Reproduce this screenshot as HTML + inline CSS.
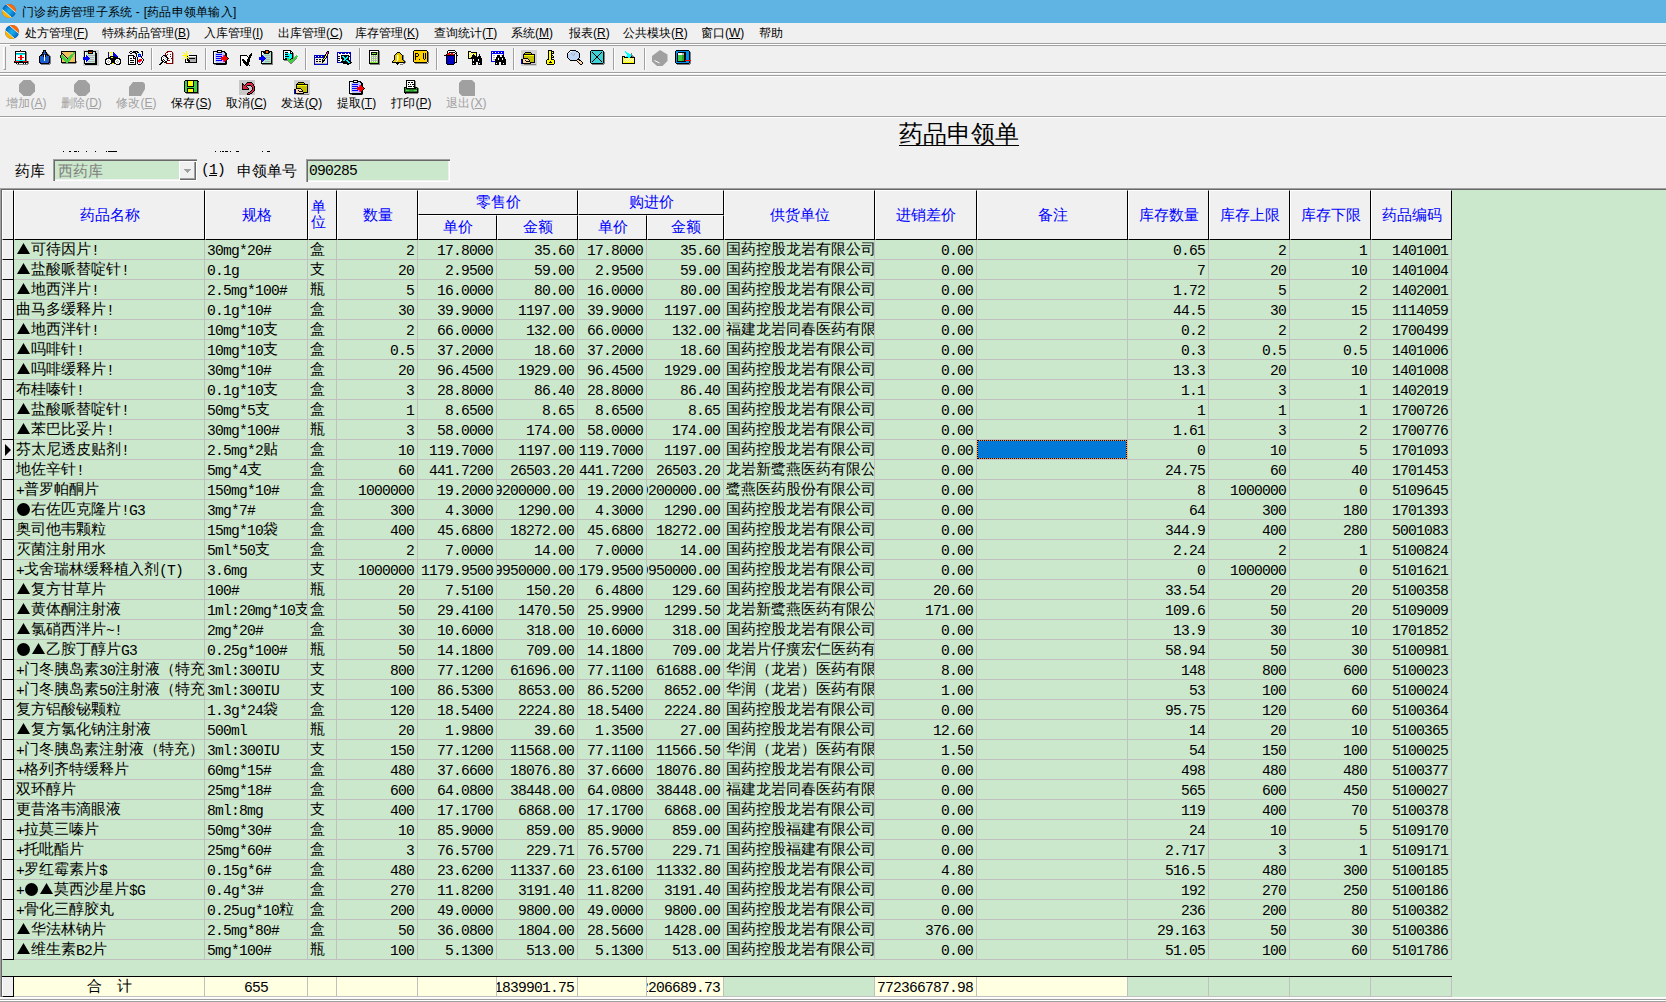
<!DOCTYPE html>
<html><head><meta charset="utf-8">
<style>
*{margin:0;padding:0;box-sizing:border-box}
html,body{width:1666px;height:1002px;overflow:hidden;background:#f0f0f0;font-family:"Liberation Sans",sans-serif;color:#000}
.abs{position:absolute}
#title{position:absolute;left:0;top:0;width:1666px;height:23px;background:#5fb4e4}
#title .t{position:absolute;left:22px;top:4px;font-size:12px;line-height:17px;white-space:nowrap;color:#000;letter-spacing:0.25px}
#menu{position:absolute;left:0;top:23px;width:1666px;height:20px;background:#f0f0f0}
.mi{position:absolute;top:3px;font-size:12px;line-height:15px;white-space:nowrap}
.hline{position:absolute;left:0;width:1666px;height:1px}
.sep{position:absolute;top:48px;width:2px;height:22px;border-left:1px solid #a0a0a0;border-right:1px solid #fff}
.btn{position:absolute;top:77px;width:55px;height:38px;text-align:center}
.btn svg,.tb1 svg{display:block}
.btn .l{position:absolute;left:0;top:20px;width:55px;text-align:center;font-size:12px;line-height:13px;white-space:nowrap}
.btn.d .l{color:#a0a0a0}
/* grid */
#grid{position:absolute;left:0;top:188px;width:1666px;height:809px;background:#cce8cc;overflow:hidden}
.c{position:absolute;height:19px;overflow:hidden;white-space:nowrap;display:flex;justify-content:flex-start;padding-left:2px;font-size:15px;line-height:17px}
.c.R{justify-content:flex-end;padding-left:0;padding-right:3px}
.c b{font-weight:normal;flex:none}
i{font-style:normal}
i.a{font-family:"Liberation Mono",monospace;font-size:14.67px;letter-spacing:-0.8px;position:relative;top:1px}
i.tri,i.dot{display:inline-block;width:15px;height:17px;position:relative;vertical-align:top}
i.tri::before{content:"";position:absolute;left:1px;top:3px;width:13px;height:11px;background:#000;clip-path:polygon(50% 0,100% 100%,0 100%)}
i.dot::before{content:"";position:absolute;left:1px;top:3px;width:13px;height:13px;border-radius:50%;background:#000}
.vl{position:absolute;width:1px;background:#c0c0c0}
.hl{position:absolute;left:14px;width:1438px;height:1px;background:#c0c0c0}
.ind{position:absolute;left:2px;width:12px;height:20px;background:#f0f0f0;border-left:1px solid #fff;border-right:1px solid #000;border-bottom:1px solid #000}
.hd{position:absolute;background:#f0f0f0;border-left:1px solid #fff;border-top:1px solid #fff;border-right:1px solid #000;border-bottom:1px solid #000;color:#0000ff;font-size:15px;display:flex;align-items:center;justify-content:center;white-space:nowrap}
</style></head><body>
<div id="title">
 <svg class="abs" style="left:1px;top:3px" width="16" height="16" viewBox="0 0 16 16" shape-rendering="auto"><defs><radialGradient id="lg1" cx=".5" cy=".5" r=".55"><stop offset="0" stop-color="#18b8f0"/><stop offset="1" stop-color="#0050b0"/></radialGradient><clipPath id="lc1"><circle cx="8" cy="8" r="7"/></clipPath></defs><g clip-path="url(#lc1)"><rect width="16" height="16" fill="url(#lg1)"/><path d="M-1.2 -4.3L21.5 15.4L21 -5Z" fill="#ff6a00"/><path d="M-1.2 -4.3L21.5 15.4" stroke="#e8f0f8" stroke-width="0.9"/><path d="M-5.5 0.6L17.2 20.3L-5 21Z" fill="#ffb000"/><path d="M-5.5 0.6L17.2 20.3" stroke="#e8f0f8" stroke-width="0.9"/></g></svg>
 <div class="t">门诊药房管理子系统 - [药品申领单输入]</div>
</div>
<div id="menu">
 <svg class="abs" style="left:4px;top:1px" width="16" height="16" viewBox="0 0 16 16" shape-rendering="auto"><defs><radialGradient id="lg2" cx=".5" cy=".5" r=".55"><stop offset="0" stop-color="#18b8f0"/><stop offset="1" stop-color="#0050b0"/></radialGradient><clipPath id="lc2"><circle cx="8" cy="8" r="7"/></clipPath></defs><g clip-path="url(#lc2)"><rect width="16" height="16" fill="url(#lg2)"/><path d="M-1.2 -4.3L21.5 15.4L21 -5Z" fill="#ff6a00"/><path d="M-1.2 -4.3L21.5 15.4" stroke="#e8f0f8" stroke-width="0.9"/><path d="M-5.5 0.6L17.2 20.3L-5 21Z" fill="#ffb000"/><path d="M-5.5 0.6L17.2 20.3" stroke="#e8f0f8" stroke-width="0.9"/></g></svg>
 <div class="mi" style="left:25px">处方管理(<u>F</u>)</div>
 <div class="mi" style="left:102px">特殊药品管理(<u>B</u>)</div>
 <div class="mi" style="left:204px">入库管理(<u>I</u>)</div>
 <div class="mi" style="left:278px">出库管理(<u>C</u>)</div>
 <div class="mi" style="left:355px">库存管理(<u>K</u>)</div>
 <div class="mi" style="left:434px">查询统计(<u>T</u>)</div>
 <div class="mi" style="left:511px">系统(<u>M</u>)</div>
 <div class="mi" style="left:569px">报表(<u>R</u>)</div>
 <div class="mi" style="left:623px">公共模块(<u>R</u>)</div>
 <div class="mi" style="left:701px">窗口(<u>W</u>)</div>
 <div class="mi" style="left:759px">帮助</div>
</div>
<div class="hline" style="top:43px;background:#a0a0a0"></div>
<div class="hline" style="top:44px;background:#fff"></div>
<!-- toolbar 1 -->
<div class="abs" style="left:10px;top:45px;width:1656px;height:1px;background:#a0a0a0"></div>
<div class="abs" style="left:3px;top:47px;width:3px;height:23px;border-left:1px solid #fff;border-right:1px solid #a0a0a0;border-bottom:1px solid #a0a0a0"></div>
<div class="tb1">
<div class="abs" style="left:14px;top:50px;width:17px;height:16px"><svg width="16" height="16" viewBox="0 0 16 16" shape-rendering="crispEdges"><rect x="6" y="0" width="1" height="1" fill="#000000"/><rect x="1" y="1" width="5" height="1" fill="#000000"/><rect x="6" y="1" width="1" height="1" fill="#ff0000"/><rect x="7" y="1" width="5" height="1" fill="#000000"/><rect x="1" y="2" width="1" height="1" fill="#000000"/><rect x="2" y="2" width="9" height="1" fill="#ffffff"/><rect x="11" y="2" width="1" height="1" fill="#000000"/><rect x="12" y="2" width="1" height="1" fill="#808080"/><rect x="1" y="3" width="1" height="1" fill="#000000"/><rect x="2" y="3" width="9" height="1" fill="#00a0a0"/><rect x="11" y="3" width="1" height="1" fill="#000000"/><rect x="12" y="3" width="1" height="1" fill="#808080"/><rect x="1" y="4" width="1" height="1" fill="#000000"/><rect x="2" y="4" width="9" height="1" fill="#00ffff"/><rect x="11" y="4" width="1" height="1" fill="#000000"/><rect x="12" y="4" width="1" height="1" fill="#808080"/><rect x="1" y="5" width="1" height="1" fill="#000000"/><rect x="2" y="5" width="4" height="1" fill="#ffffff"/><rect x="6" y="5" width="2" height="1" fill="#ff0000"/><rect x="8" y="5" width="3" height="1" fill="#ffffff"/><rect x="11" y="5" width="1" height="1" fill="#000000"/><rect x="12" y="5" width="1" height="1" fill="#808080"/><rect x="1" y="6" width="1" height="1" fill="#000000"/><rect x="2" y="6" width="4" height="1" fill="#ffffff"/><rect x="6" y="6" width="2" height="1" fill="#ff0000"/><rect x="8" y="6" width="3" height="1" fill="#ffffff"/><rect x="11" y="6" width="1" height="1" fill="#000000"/><rect x="12" y="6" width="1" height="1" fill="#808080"/><rect x="1" y="7" width="1" height="1" fill="#000000"/><rect x="2" y="7" width="2" height="1" fill="#ffffff"/><rect x="4" y="7" width="6" height="1" fill="#ff0000"/><rect x="10" y="7" width="1" height="1" fill="#ffffff"/><rect x="11" y="7" width="1" height="1" fill="#000000"/><rect x="12" y="7" width="1" height="1" fill="#808080"/><rect x="1" y="8" width="1" height="1" fill="#000000"/><rect x="2" y="8" width="4" height="1" fill="#ffffff"/><rect x="6" y="8" width="2" height="1" fill="#ff0000"/><rect x="8" y="8" width="3" height="1" fill="#ffffff"/><rect x="11" y="8" width="1" height="1" fill="#000000"/><rect x="12" y="8" width="1" height="1" fill="#808080"/><rect x="1" y="9" width="1" height="1" fill="#000000"/><rect x="2" y="9" width="4" height="1" fill="#ffffff"/><rect x="6" y="9" width="2" height="1" fill="#ff0000"/><rect x="8" y="9" width="3" height="1" fill="#ffffff"/><rect x="11" y="9" width="1" height="1" fill="#000000"/><rect x="12" y="9" width="1" height="1" fill="#808080"/><rect x="1" y="10" width="1" height="1" fill="#000000"/><rect x="2" y="10" width="9" height="1" fill="#00ffff"/><rect x="11" y="10" width="1" height="1" fill="#000000"/><rect x="12" y="10" width="1" height="1" fill="#808080"/><rect x="0" y="11" width="1" height="1" fill="#000000"/><rect x="1" y="11" width="4" height="1" fill="#ff0000"/><rect x="5" y="11" width="4" height="1" fill="#000000"/><rect x="9" y="11" width="4" height="1" fill="#ff0000"/><rect x="13" y="11" width="1" height="1" fill="#000000"/><rect x="14" y="11" width="1" height="1" fill="#808080"/><rect x="0" y="12" width="14" height="1" fill="#000000"/><rect x="14" y="12" width="1" height="1" fill="#808080"/><rect x="2" y="13" width="1" height="1" fill="#000000"/><rect x="3" y="13" width="1" height="1" fill="#ffffff"/><rect x="4" y="13" width="1" height="1" fill="#000000"/><rect x="9" y="13" width="1" height="1" fill="#000000"/><rect x="10" y="13" width="1" height="1" fill="#ffffff"/><rect x="11" y="13" width="1" height="1" fill="#000000"/><rect x="13" y="13" width="2" height="1" fill="#808080"/><rect x="3" y="14" width="11" height="1" fill="#808080"/></svg></div>
<div class="abs" style="left:37px;top:50px;width:17px;height:16px"><svg width="16" height="16" viewBox="0 0 16 16" shape-rendering="crispEdges"><rect x="6" y="0" width="3" height="1" fill="#000000"/><rect x="6" y="1" width="1" height="1" fill="#000000"/><rect x="7" y="1" width="1" height="1" fill="#1a5fd0"/><rect x="8" y="1" width="1" height="1" fill="#000000"/><rect x="5" y="2" width="2" height="1" fill="#000000"/><rect x="7" y="2" width="1" height="1" fill="#1a5fd0"/><rect x="8" y="2" width="2" height="1" fill="#000000"/><rect x="5" y="3" width="1" height="1" fill="#000000"/><rect x="6" y="3" width="3" height="1" fill="#1a5fd0"/><rect x="9" y="3" width="1" height="1" fill="#000000"/><rect x="10" y="3" width="1" height="1" fill="#808080"/><rect x="4" y="4" width="3" height="1" fill="#000000"/><rect x="7" y="4" width="1" height="1" fill="#1a5fd0"/><rect x="8" y="4" width="3" height="1" fill="#000000"/><rect x="11" y="4" width="1" height="1" fill="#808080"/><rect x="3" y="5" width="2" height="1" fill="#000000"/><rect x="5" y="5" width="1" height="1" fill="#1a5fd0"/><rect x="6" y="5" width="1" height="1" fill="#000000"/><rect x="7" y="5" width="1" height="1" fill="#ffffff"/><rect x="8" y="5" width="1" height="1" fill="#000000"/><rect x="9" y="5" width="1" height="1" fill="#1a5fd0"/><rect x="10" y="5" width="2" height="1" fill="#000000"/><rect x="12" y="5" width="1" height="1" fill="#808080"/><rect x="2" y="6" width="1" height="1" fill="#000000"/><rect x="3" y="6" width="3" height="1" fill="#1a5fd0"/><rect x="6" y="6" width="1" height="1" fill="#000000"/><rect x="7" y="6" width="1" height="1" fill="#ffffff"/><rect x="8" y="6" width="1" height="1" fill="#000000"/><rect x="9" y="6" width="3" height="1" fill="#1a5fd0"/><rect x="12" y="6" width="1" height="1" fill="#000000"/><rect x="13" y="6" width="1" height="1" fill="#808080"/><rect x="2" y="7" width="1" height="1" fill="#000000"/><rect x="3" y="7" width="4" height="1" fill="#1a5fd0"/><rect x="7" y="7" width="1" height="1" fill="#ffffff"/><rect x="8" y="7" width="4" height="1" fill="#1a5fd0"/><rect x="12" y="7" width="1" height="1" fill="#000000"/><rect x="13" y="7" width="1" height="1" fill="#808080"/><rect x="2" y="8" width="1" height="1" fill="#000000"/><rect x="3" y="8" width="4" height="1" fill="#1a5fd0"/><rect x="7" y="8" width="1" height="1" fill="#ffffff"/><rect x="8" y="8" width="4" height="1" fill="#1a5fd0"/><rect x="12" y="8" width="1" height="1" fill="#000000"/><rect x="13" y="8" width="1" height="1" fill="#808080"/><rect x="2" y="9" width="1" height="1" fill="#000000"/><rect x="3" y="9" width="4" height="1" fill="#1a5fd0"/><rect x="7" y="9" width="1" height="1" fill="#ffffff"/><rect x="8" y="9" width="4" height="1" fill="#1a5fd0"/><rect x="12" y="9" width="1" height="1" fill="#000000"/><rect x="13" y="9" width="1" height="1" fill="#808080"/><rect x="2" y="10" width="1" height="1" fill="#000000"/><rect x="3" y="10" width="4" height="1" fill="#1a5fd0"/><rect x="7" y="10" width="1" height="1" fill="#ffffff"/><rect x="8" y="10" width="4" height="1" fill="#1a5fd0"/><rect x="12" y="10" width="1" height="1" fill="#000000"/><rect x="13" y="10" width="1" height="1" fill="#808080"/><rect x="2" y="11" width="1" height="1" fill="#000000"/><rect x="3" y="11" width="9" height="1" fill="#1a5fd0"/><rect x="12" y="11" width="1" height="1" fill="#000000"/><rect x="13" y="11" width="1" height="1" fill="#808080"/><rect x="2" y="12" width="1" height="1" fill="#000000"/><rect x="3" y="12" width="1" height="1" fill="#0000c0"/><rect x="4" y="12" width="7" height="1" fill="#1a5fd0"/><rect x="11" y="12" width="1" height="1" fill="#0000c0"/><rect x="12" y="12" width="1" height="1" fill="#000000"/><rect x="13" y="12" width="1" height="1" fill="#808080"/><rect x="3" y="13" width="9" height="1" fill="#000000"/><rect x="12" y="13" width="2" height="1" fill="#808080"/><rect x="4" y="14" width="9" height="1" fill="#808080"/></svg></div>
<div class="abs" style="left:60px;top:50px;width:17px;height:16px"><svg width="17" height="16" viewBox="0 0 17 16" shape-rendering="crispEdges"><rect x="1" y="1" width="15" height="1" fill="#000000"/><rect x="1" y="2" width="1" height="1" fill="#000000"/><rect x="2" y="2" width="11" height="1" fill="#f0c060"/><rect x="13" y="2" width="2" height="1" fill="#40d040"/><rect x="15" y="2" width="1" height="1" fill="#000000"/><rect x="1" y="3" width="2" height="1" fill="#000000"/><rect x="3" y="3" width="10" height="1" fill="#f0c060"/><rect x="13" y="3" width="2" height="1" fill="#40d040"/><rect x="15" y="3" width="1" height="1" fill="#000000"/><rect x="1" y="4" width="1" height="1" fill="#000000"/><rect x="2" y="4" width="1" height="1" fill="#f0c060"/><rect x="3" y="4" width="1" height="1" fill="#000000"/><rect x="4" y="4" width="7" height="1" fill="#f0c060"/><rect x="11" y="4" width="3" height="1" fill="#40d040"/><rect x="14" y="4" width="1" height="1" fill="#f0c060"/><rect x="15" y="4" width="1" height="1" fill="#000000"/><rect x="0" y="5" width="1" height="1" fill="#000000"/><rect x="1" y="5" width="2" height="1" fill="#40d040"/><rect x="3" y="5" width="1" height="1" fill="#f0c060"/><rect x="4" y="5" width="1" height="1" fill="#000000"/><rect x="5" y="5" width="5" height="1" fill="#f0c060"/><rect x="10" y="5" width="3" height="1" fill="#40d040"/><rect x="13" y="5" width="2" height="1" fill="#f0c060"/><rect x="15" y="5" width="1" height="1" fill="#000000"/><rect x="0" y="6" width="1" height="1" fill="#000000"/><rect x="1" y="6" width="3" height="1" fill="#40d040"/><rect x="4" y="6" width="1" height="1" fill="#f0c060"/><rect x="5" y="6" width="1" height="1" fill="#000000"/><rect x="6" y="6" width="3" height="1" fill="#f0c060"/><rect x="9" y="6" width="4" height="1" fill="#40d040"/><rect x="13" y="6" width="2" height="1" fill="#f0c060"/><rect x="15" y="6" width="1" height="1" fill="#000000"/><rect x="0" y="7" width="1" height="1" fill="#000000"/><rect x="1" y="7" width="4" height="1" fill="#40d040"/><rect x="5" y="7" width="1" height="1" fill="#f0c060"/><rect x="6" y="7" width="1" height="1" fill="#000000"/><rect x="7" y="7" width="1" height="1" fill="#f0c060"/><rect x="8" y="7" width="4" height="1" fill="#40d040"/><rect x="12" y="7" width="3" height="1" fill="#f0c060"/><rect x="15" y="7" width="1" height="1" fill="#000000"/><rect x="1" y="8" width="1" height="1" fill="#000000"/><rect x="2" y="8" width="4" height="1" fill="#40d040"/><rect x="6" y="8" width="1" height="1" fill="#f0c060"/><rect x="7" y="8" width="1" height="1" fill="#000000"/><rect x="8" y="8" width="3" height="1" fill="#40d040"/><rect x="11" y="8" width="4" height="1" fill="#f0c060"/><rect x="15" y="8" width="1" height="1" fill="#000000"/><rect x="1" y="9" width="1" height="1" fill="#000000"/><rect x="2" y="9" width="1" height="1" fill="#f0c060"/><rect x="3" y="9" width="8" height="1" fill="#40d040"/><rect x="11" y="9" width="4" height="1" fill="#f0c060"/><rect x="15" y="9" width="1" height="1" fill="#000000"/><rect x="1" y="10" width="1" height="1" fill="#000000"/><rect x="2" y="10" width="2" height="1" fill="#f0c060"/><rect x="4" y="10" width="6" height="1" fill="#40d040"/><rect x="10" y="10" width="5" height="1" fill="#f0c060"/><rect x="15" y="10" width="1" height="1" fill="#000000"/><rect x="1" y="11" width="1" height="1" fill="#000000"/><rect x="2" y="11" width="3" height="1" fill="#f0c060"/><rect x="5" y="11" width="4" height="1" fill="#40d040"/><rect x="9" y="11" width="6" height="1" fill="#f0c060"/><rect x="15" y="11" width="1" height="1" fill="#000000"/><rect x="16" y="11" width="1" height="1" fill="#808080"/><rect x="1" y="12" width="5" height="1" fill="#000000"/><rect x="6" y="12" width="2" height="1" fill="#40d040"/><rect x="8" y="12" width="8" height="1" fill="#000000"/><rect x="16" y="12" width="1" height="1" fill="#808080"/><rect x="2" y="13" width="14" height="1" fill="#808080"/></svg></div>
<div class="abs" style="left:83px;top:50px;width:17px;height:16px"><svg width="16" height="16" viewBox="0 0 16 16" shape-rendering="crispEdges"><rect x="0" y="0" width="5" height="1" fill="#d0d0d0"/><rect x="5" y="0" width="5" height="1" fill="#000000"/><rect x="10" y="0" width="6" height="1" fill="#d0d0d0"/><rect x="0" y="1" width="1" height="1" fill="#d0d0d0"/><rect x="1" y="1" width="12" height="1" fill="#000000"/><rect x="13" y="1" width="3" height="1" fill="#d0d0d0"/><rect x="0" y="2" width="1" height="1" fill="#d0d0d0"/><rect x="1" y="2" width="1" height="1" fill="#000000"/><rect x="2" y="2" width="1" height="1" fill="#ffffff"/><rect x="3" y="2" width="2" height="1" fill="#c8e8d8"/><rect x="5" y="2" width="1" height="1" fill="#000000"/><rect x="6" y="2" width="3" height="1" fill="#ff6000"/><rect x="9" y="2" width="1" height="1" fill="#000000"/><rect x="10" y="2" width="2" height="1" fill="#c8e8d8"/><rect x="12" y="2" width="1" height="1" fill="#000000"/><rect x="13" y="2" width="3" height="1" fill="#d0d0d0"/><rect x="0" y="3" width="1" height="1" fill="#d0d0d0"/><rect x="1" y="3" width="1" height="1" fill="#000000"/><rect x="2" y="3" width="1" height="1" fill="#ffffff"/><rect x="3" y="3" width="2" height="1" fill="#c8e8d8"/><rect x="5" y="3" width="5" height="1" fill="#000000"/><rect x="10" y="3" width="2" height="1" fill="#c8e8d8"/><rect x="12" y="3" width="2" height="1" fill="#000000"/><rect x="14" y="3" width="2" height="1" fill="#d0d0d0"/><rect x="0" y="4" width="1" height="1" fill="#d0d0d0"/><rect x="1" y="4" width="1" height="1" fill="#000000"/><rect x="2" y="4" width="1" height="1" fill="#ffffff"/><rect x="3" y="4" width="9" height="1" fill="#c8e8d8"/><rect x="12" y="4" width="2" height="1" fill="#000000"/><rect x="14" y="4" width="2" height="1" fill="#d0d0d0"/><rect x="0" y="5" width="1" height="1" fill="#d0d0d0"/><rect x="1" y="5" width="1" height="1" fill="#000000"/><rect x="2" y="5" width="1" height="1" fill="#ffffff"/><rect x="3" y="5" width="1" height="1" fill="#0000ff"/><rect x="4" y="5" width="1" height="1" fill="#c8e8d8"/><rect x="5" y="5" width="7" height="1" fill="#b0b0b0"/><rect x="12" y="5" width="2" height="1" fill="#000000"/><rect x="14" y="5" width="2" height="1" fill="#d0d0d0"/><rect x="0" y="6" width="1" height="1" fill="#d0d0d0"/><rect x="1" y="6" width="1" height="1" fill="#000000"/><rect x="2" y="6" width="1" height="1" fill="#ffffff"/><rect x="3" y="6" width="2" height="1" fill="#0000ff"/><rect x="5" y="6" width="7" height="1" fill="#c8e8d8"/><rect x="12" y="6" width="2" height="1" fill="#000000"/><rect x="14" y="6" width="2" height="1" fill="#d0d0d0"/><rect x="0" y="7" width="6" height="1" fill="#0000ff"/><rect x="6" y="7" width="5" height="1" fill="#b0b0b0"/><rect x="11" y="7" width="1" height="1" fill="#c8e8d8"/><rect x="12" y="7" width="2" height="1" fill="#000000"/><rect x="14" y="7" width="2" height="1" fill="#d0d0d0"/><rect x="0" y="8" width="7" height="1" fill="#0000ff"/><rect x="7" y="8" width="5" height="1" fill="#c8e8d8"/><rect x="12" y="8" width="2" height="1" fill="#000000"/><rect x="14" y="8" width="2" height="1" fill="#d0d0d0"/><rect x="0" y="9" width="6" height="1" fill="#0000ff"/><rect x="6" y="9" width="5" height="1" fill="#b0b0b0"/><rect x="11" y="9" width="1" height="1" fill="#c8e8d8"/><rect x="12" y="9" width="2" height="1" fill="#000000"/><rect x="14" y="9" width="2" height="1" fill="#d0d0d0"/><rect x="0" y="10" width="1" height="1" fill="#d0d0d0"/><rect x="1" y="10" width="1" height="1" fill="#000000"/><rect x="2" y="10" width="1" height="1" fill="#ffffff"/><rect x="3" y="10" width="2" height="1" fill="#0000ff"/><rect x="5" y="10" width="7" height="1" fill="#c8e8d8"/><rect x="12" y="10" width="2" height="1" fill="#000000"/><rect x="14" y="10" width="2" height="1" fill="#d0d0d0"/><rect x="0" y="11" width="1" height="1" fill="#d0d0d0"/><rect x="1" y="11" width="1" height="1" fill="#000000"/><rect x="2" y="11" width="1" height="1" fill="#ffffff"/><rect x="3" y="11" width="1" height="1" fill="#0000ff"/><rect x="4" y="11" width="1" height="1" fill="#c8e8d8"/><rect x="5" y="11" width="7" height="1" fill="#b0b0b0"/><rect x="12" y="11" width="2" height="1" fill="#000000"/><rect x="14" y="11" width="2" height="1" fill="#d0d0d0"/><rect x="0" y="12" width="1" height="1" fill="#d0d0d0"/><rect x="1" y="12" width="1" height="1" fill="#000000"/><rect x="2" y="12" width="1" height="1" fill="#ffffff"/><rect x="3" y="12" width="9" height="1" fill="#c8e8d8"/><rect x="12" y="12" width="2" height="1" fill="#000000"/><rect x="14" y="12" width="2" height="1" fill="#d0d0d0"/><rect x="0" y="13" width="1" height="1" fill="#d0d0d0"/><rect x="1" y="13" width="13" height="1" fill="#000000"/><rect x="14" y="13" width="2" height="1" fill="#d0d0d0"/><rect x="0" y="14" width="2" height="1" fill="#d0d0d0"/><rect x="2" y="14" width="12" height="1" fill="#000000"/><rect x="14" y="14" width="2" height="1" fill="#d0d0d0"/><rect x="0" y="15" width="16" height="1" fill="#d0d0d0"/></svg></div>
<div class="abs" style="left:105px;top:50px;width:17px;height:16px"><svg width="16" height="16" viewBox="0 0 16 16" shape-rendering="crispEdges"><rect x="3" y="2" width="1" height="1" fill="#0000ff"/><rect x="4" y="2" width="4" height="1" fill="#ffff00"/><rect x="8" y="2" width="1" height="1" fill="#0000ff"/><rect x="3" y="3" width="1" height="1" fill="#0000ff"/><rect x="4" y="3" width="1" height="1" fill="#ffff00"/><rect x="5" y="3" width="1" height="1" fill="#ffffff"/><rect x="6" y="3" width="1" height="1" fill="#ffff00"/><rect x="7" y="3" width="1" height="1" fill="#ffffff"/><rect x="8" y="3" width="2" height="1" fill="#0000ff"/><rect x="3" y="4" width="1" height="1" fill="#0000ff"/><rect x="4" y="4" width="1" height="1" fill="#ffffff"/><rect x="5" y="4" width="1" height="1" fill="#ffff00"/><rect x="6" y="4" width="1" height="1" fill="#ffffff"/><rect x="7" y="4" width="1" height="1" fill="#ffff00"/><rect x="8" y="4" width="3" height="1" fill="#0000ff"/><rect x="3" y="5" width="1" height="1" fill="#0000ff"/><rect x="4" y="5" width="1" height="1" fill="#ffff00"/><rect x="5" y="5" width="1" height="1" fill="#ffffff"/><rect x="6" y="5" width="1" height="1" fill="#ffff00"/><rect x="7" y="5" width="1" height="1" fill="#ffffff"/><rect x="8" y="5" width="4" height="1" fill="#0000ff"/><rect x="3" y="6" width="1" height="1" fill="#0000ff"/><rect x="4" y="6" width="1" height="1" fill="#ffffff"/><rect x="5" y="6" width="5" height="1" fill="#000000"/><rect x="10" y="6" width="3" height="1" fill="#0000ff"/><rect x="3" y="7" width="3" height="1" fill="#000000"/><rect x="6" y="7" width="2" height="1" fill="#ffff00"/><rect x="8" y="7" width="5" height="1" fill="#000000"/><rect x="1" y="8" width="14" height="1" fill="#000000"/><rect x="0" y="9" width="2" height="1" fill="#000000"/><rect x="2" y="9" width="3" height="1" fill="#ffffff"/><rect x="5" y="9" width="6" height="1" fill="#000000"/><rect x="11" y="9" width="3" height="1" fill="#ffffff"/><rect x="14" y="9" width="2" height="1" fill="#000000"/><rect x="0" y="10" width="1" height="1" fill="#000000"/><rect x="1" y="10" width="2" height="1" fill="#ffffff"/><rect x="3" y="10" width="1" height="1" fill="#b0b0b0"/><rect x="4" y="10" width="2" height="1" fill="#ffffff"/><rect x="6" y="10" width="4" height="1" fill="#000000"/><rect x="10" y="10" width="2" height="1" fill="#ffffff"/><rect x="12" y="10" width="1" height="1" fill="#b0b0b0"/><rect x="13" y="10" width="2" height="1" fill="#ffffff"/><rect x="15" y="10" width="1" height="1" fill="#000000"/><rect x="0" y="11" width="1" height="1" fill="#000000"/><rect x="1" y="11" width="1" height="1" fill="#ffffff"/><rect x="2" y="11" width="1" height="1" fill="#b0b0b0"/><rect x="3" y="11" width="1" height="1" fill="#ffffff"/><rect x="4" y="11" width="1" height="1" fill="#b0b0b0"/><rect x="5" y="11" width="1" height="1" fill="#ffffff"/><rect x="6" y="11" width="4" height="1" fill="#000000"/><rect x="10" y="11" width="1" height="1" fill="#ffffff"/><rect x="11" y="11" width="1" height="1" fill="#b0b0b0"/><rect x="12" y="11" width="1" height="1" fill="#ffffff"/><rect x="13" y="11" width="1" height="1" fill="#b0b0b0"/><rect x="14" y="11" width="1" height="1" fill="#ffffff"/><rect x="15" y="11" width="1" height="1" fill="#000000"/><rect x="0" y="12" width="1" height="1" fill="#000000"/><rect x="1" y="12" width="2" height="1" fill="#ffffff"/><rect x="3" y="12" width="1" height="1" fill="#b0b0b0"/><rect x="4" y="12" width="2" height="1" fill="#ffffff"/><rect x="6" y="12" width="4" height="1" fill="#000000"/><rect x="10" y="12" width="2" height="1" fill="#ffffff"/><rect x="12" y="12" width="1" height="1" fill="#b0b0b0"/><rect x="13" y="12" width="2" height="1" fill="#ffffff"/><rect x="15" y="12" width="1" height="1" fill="#000000"/><rect x="0" y="13" width="2" height="1" fill="#000000"/><rect x="2" y="13" width="3" height="1" fill="#ffffff"/><rect x="5" y="13" width="2" height="1" fill="#000000"/><rect x="7" y="13" width="2" height="1" fill="#ffff00"/><rect x="9" y="13" width="2" height="1" fill="#000000"/><rect x="11" y="13" width="3" height="1" fill="#ffffff"/><rect x="14" y="13" width="2" height="1" fill="#000000"/><rect x="1" y="14" width="4" height="1" fill="#000000"/><rect x="11" y="14" width="4" height="1" fill="#000000"/></svg></div>
<div class="abs" style="left:128px;top:50px;width:17px;height:16px"><svg width="16" height="16" viewBox="0 0 16 16" shape-rendering="crispEdges"><rect x="2" y="1" width="2" height="1" fill="#000000"/><rect x="5" y="1" width="5" height="1" fill="#000000"/><rect x="11" y="1" width="1" height="1" fill="#ffffff"/><rect x="13" y="1" width="2" height="1" fill="#000000"/><rect x="1" y="2" width="1" height="1" fill="#000000"/><rect x="4" y="2" width="4" height="1" fill="#000000"/><rect x="9" y="2" width="2" height="1" fill="#000000"/><rect x="11" y="2" width="3" height="1" fill="#ffffff"/><rect x="14" y="2" width="1" height="1" fill="#000000"/><rect x="2" y="3" width="2" height="1" fill="#000000"/><rect x="7" y="3" width="2" height="1" fill="#000000"/><rect x="9" y="3" width="2" height="1" fill="#ffffff"/><rect x="11" y="3" width="1" height="1" fill="#00ffff"/><rect x="12" y="3" width="2" height="1" fill="#ffffff"/><rect x="14" y="3" width="1" height="1" fill="#000000"/><rect x="8" y="4" width="1" height="1" fill="#000000"/><rect x="9" y="4" width="1" height="1" fill="#ffffff"/><rect x="10" y="4" width="3" height="1" fill="#0000ff"/><rect x="13" y="4" width="1" height="1" fill="#ffffff"/><rect x="14" y="4" width="1" height="1" fill="#000000"/><rect x="0" y="5" width="6" height="1" fill="#000000"/><rect x="8" y="5" width="1" height="1" fill="#000000"/><rect x="9" y="5" width="1" height="1" fill="#ffffff"/><rect x="10" y="5" width="1" height="1" fill="#0000ff"/><rect x="11" y="5" width="1" height="1" fill="#00ffff"/><rect x="12" y="5" width="1" height="1" fill="#0000ff"/><rect x="13" y="5" width="1" height="1" fill="#ffffff"/><rect x="14" y="5" width="1" height="1" fill="#000000"/><rect x="0" y="6" width="1" height="1" fill="#000000"/><rect x="1" y="6" width="4" height="1" fill="#ffffff"/><rect x="5" y="6" width="2" height="1" fill="#000000"/><rect x="8" y="6" width="1" height="1" fill="#000000"/><rect x="9" y="6" width="1" height="1" fill="#ffffff"/><rect x="10" y="6" width="3" height="1" fill="#0000ff"/><rect x="13" y="6" width="1" height="1" fill="#000000"/><rect x="0" y="7" width="1" height="1" fill="#000000"/><rect x="1" y="7" width="4" height="1" fill="#ffffff"/><rect x="5" y="7" width="1" height="1" fill="#000000"/><rect x="6" y="7" width="1" height="1" fill="#ffffff"/><rect x="7" y="7" width="1" height="1" fill="#000000"/><rect x="9" y="7" width="1" height="1" fill="#000000"/><rect x="10" y="7" width="3" height="1" fill="#ffffff"/><rect x="13" y="7" width="1" height="1" fill="#000000"/><rect x="0" y="8" width="1" height="1" fill="#000000"/><rect x="1" y="8" width="1" height="1" fill="#ffffff"/><rect x="2" y="8" width="2" height="1" fill="#000000"/><rect x="4" y="8" width="1" height="1" fill="#ffffff"/><rect x="5" y="8" width="3" height="1" fill="#000000"/><rect x="9" y="8" width="1" height="1" fill="#000000"/><rect x="10" y="8" width="4" height="1" fill="#ffffff"/><rect x="14" y="8" width="1" height="1" fill="#000000"/><rect x="0" y="9" width="1" height="1" fill="#000000"/><rect x="1" y="9" width="6" height="1" fill="#ffffff"/><rect x="7" y="9" width="1" height="1" fill="#000000"/><rect x="9" y="9" width="1" height="1" fill="#000000"/><rect x="10" y="9" width="1" height="1" fill="#ffffff"/><rect x="11" y="9" width="3" height="1" fill="#ff0000"/><rect x="14" y="9" width="1" height="1" fill="#ffffff"/><rect x="15" y="9" width="1" height="1" fill="#000000"/><rect x="0" y="10" width="1" height="1" fill="#000000"/><rect x="1" y="10" width="1" height="1" fill="#ffffff"/><rect x="2" y="10" width="4" height="1" fill="#000000"/><rect x="6" y="10" width="1" height="1" fill="#ffffff"/><rect x="7" y="10" width="1" height="1" fill="#000000"/><rect x="9" y="10" width="1" height="1" fill="#000000"/><rect x="10" y="10" width="4" height="1" fill="#ff0000"/><rect x="14" y="10" width="1" height="1" fill="#ffffff"/><rect x="15" y="10" width="1" height="1" fill="#000000"/><rect x="0" y="11" width="1" height="1" fill="#000000"/><rect x="1" y="11" width="6" height="1" fill="#ffffff"/><rect x="7" y="11" width="1" height="1" fill="#000000"/><rect x="9" y="11" width="1" height="1" fill="#000000"/><rect x="10" y="11" width="2" height="1" fill="#ff0000"/><rect x="12" y="11" width="1" height="1" fill="#ff00ff"/><rect x="13" y="11" width="1" height="1" fill="#ffffff"/><rect x="14" y="11" width="1" height="1" fill="#000000"/><rect x="0" y="12" width="1" height="1" fill="#000000"/><rect x="1" y="12" width="1" height="1" fill="#ffffff"/><rect x="2" y="12" width="4" height="1" fill="#000000"/><rect x="6" y="12" width="1" height="1" fill="#ffffff"/><rect x="7" y="12" width="1" height="1" fill="#000000"/><rect x="9" y="12" width="1" height="1" fill="#000000"/><rect x="10" y="12" width="1" height="1" fill="#ffffff"/><rect x="11" y="12" width="1" height="1" fill="#ff00ff"/><rect x="12" y="12" width="2" height="1" fill="#ffffff"/><rect x="14" y="12" width="1" height="1" fill="#000000"/><rect x="0" y="13" width="1" height="1" fill="#000000"/><rect x="1" y="13" width="6" height="1" fill="#ffffff"/><rect x="7" y="13" width="1" height="1" fill="#000000"/><rect x="9" y="13" width="1" height="1" fill="#000000"/><rect x="10" y="13" width="3" height="1" fill="#ffffff"/><rect x="13" y="13" width="1" height="1" fill="#000000"/><rect x="0" y="14" width="8" height="1" fill="#000000"/><rect x="10" y="14" width="3" height="1" fill="#000000"/></svg></div>
<div class="sep" style="left:151px"></div>
<div class="abs" style="left:159px;top:50px;width:17px;height:16px"><svg width="16" height="16" viewBox="0 0 16 16" shape-rendering="crispEdges"><rect x="8" y="1" width="5" height="1" fill="#800000"/><rect x="7" y="2" width="2" height="1" fill="#800000"/><rect x="9" y="2" width="4" height="1" fill="#ffffff"/><rect x="13" y="2" width="1" height="1" fill="#800000"/><rect x="6" y="3" width="1" height="1" fill="#800000"/><rect x="7" y="3" width="6" height="1" fill="#ffffff"/><rect x="13" y="3" width="1" height="1" fill="#800000"/><rect x="14" y="3" width="1" height="1" fill="#b0b0b0"/><rect x="6" y="4" width="1" height="1" fill="#800000"/><rect x="7" y="4" width="1" height="1" fill="#ffffff"/><rect x="8" y="4" width="1" height="1" fill="#800000"/><rect x="9" y="4" width="2" height="1" fill="#ffffff"/><rect x="11" y="4" width="1" height="1" fill="#800000"/><rect x="12" y="4" width="1" height="1" fill="#ffffff"/><rect x="13" y="4" width="1" height="1" fill="#800000"/><rect x="14" y="4" width="1" height="1" fill="#b0b0b0"/><rect x="4" y="5" width="3" height="1" fill="#000000"/><rect x="7" y="5" width="1" height="1" fill="#800000"/><rect x="8" y="5" width="5" height="1" fill="#ffffff"/><rect x="13" y="5" width="1" height="1" fill="#800000"/><rect x="14" y="5" width="1" height="1" fill="#b0b0b0"/><rect x="3" y="6" width="1" height="1" fill="#000000"/><rect x="4" y="6" width="1" height="1" fill="#ffffff"/><rect x="5" y="6" width="1" height="1" fill="#b0b0b0"/><rect x="6" y="6" width="2" height="1" fill="#000000"/><rect x="8" y="6" width="3" height="1" fill="#ffffff"/><rect x="11" y="6" width="1" height="1" fill="#800000"/><rect x="12" y="6" width="1" height="1" fill="#ffffff"/><rect x="13" y="6" width="1" height="1" fill="#800000"/><rect x="14" y="6" width="1" height="1" fill="#b0b0b0"/><rect x="2" y="7" width="1" height="1" fill="#000000"/><rect x="3" y="7" width="1" height="1" fill="#ffffff"/><rect x="4" y="7" width="1" height="1" fill="#b0b0b0"/><rect x="5" y="7" width="2" height="1" fill="#ffffff"/><rect x="7" y="7" width="2" height="1" fill="#000000"/><rect x="9" y="7" width="4" height="1" fill="#ffffff"/><rect x="13" y="7" width="1" height="1" fill="#800000"/><rect x="14" y="7" width="1" height="1" fill="#b0b0b0"/><rect x="2" y="8" width="1" height="1" fill="#000000"/><rect x="3" y="8" width="3" height="1" fill="#ffffff"/><rect x="6" y="8" width="1" height="1" fill="#b0b0b0"/><rect x="7" y="8" width="1" height="1" fill="#ffffff"/><rect x="8" y="8" width="1" height="1" fill="#000000"/><rect x="9" y="8" width="1" height="1" fill="#800000"/><rect x="10" y="8" width="2" height="1" fill="#ffffff"/><rect x="12" y="8" width="2" height="1" fill="#800000"/><rect x="14" y="8" width="1" height="1" fill="#b0b0b0"/><rect x="2" y="9" width="1" height="1" fill="#000000"/><rect x="3" y="9" width="1" height="1" fill="#ffffff"/><rect x="4" y="9" width="1" height="1" fill="#000000"/><rect x="5" y="9" width="2" height="1" fill="#ffffff"/><rect x="7" y="9" width="1" height="1" fill="#b0b0b0"/><rect x="8" y="9" width="1" height="1" fill="#000000"/><rect x="9" y="9" width="4" height="1" fill="#ffffff"/><rect x="13" y="9" width="1" height="1" fill="#800000"/><rect x="14" y="9" width="1" height="1" fill="#b0b0b0"/><rect x="2" y="10" width="2" height="1" fill="#000000"/><rect x="4" y="10" width="1" height="1" fill="#ffffff"/><rect x="5" y="10" width="1" height="1" fill="#000000"/><rect x="6" y="10" width="2" height="1" fill="#ffffff"/><rect x="8" y="10" width="1" height="1" fill="#000000"/><rect x="9" y="10" width="2" height="1" fill="#800000"/><rect x="11" y="10" width="2" height="1" fill="#ffffff"/><rect x="13" y="10" width="1" height="1" fill="#800000"/><rect x="14" y="10" width="1" height="1" fill="#b0b0b0"/><rect x="3" y="11" width="2" height="1" fill="#000000"/><rect x="5" y="11" width="1" height="1" fill="#ffffff"/><rect x="6" y="11" width="2" height="1" fill="#000000"/><rect x="8" y="11" width="5" height="1" fill="#ffffff"/><rect x="13" y="11" width="1" height="1" fill="#800000"/><rect x="14" y="11" width="1" height="1" fill="#b0b0b0"/><rect x="2" y="12" width="2" height="1" fill="#000000"/><rect x="5" y="12" width="2" height="1" fill="#000000"/><rect x="7" y="12" width="1" height="1" fill="#800000"/><rect x="8" y="12" width="5" height="1" fill="#ffffff"/><rect x="13" y="12" width="1" height="1" fill="#800000"/><rect x="14" y="12" width="1" height="1" fill="#b0b0b0"/><rect x="1" y="13" width="2" height="1" fill="#000000"/><rect x="7" y="13" width="7" height="1" fill="#800000"/><rect x="14" y="13" width="1" height="1" fill="#b0b0b0"/><rect x="0" y="14" width="2" height="1" fill="#000000"/></svg></div>
<div class="abs" style="left:182px;top:50px;width:17px;height:16px"><svg width="16" height="16" viewBox="0 0 16 16" shape-rendering="crispEdges"><rect x="4" y="1" width="1" height="1" fill="#ffff00"/><rect x="1" y="2" width="1" height="1" fill="#ffff00"/><rect x="4" y="2" width="1" height="1" fill="#ffff00"/><rect x="8" y="2" width="1" height="1" fill="#ffff00"/><rect x="2" y="3" width="1" height="1" fill="#ffff00"/><rect x="4" y="3" width="1" height="1" fill="#ffff00"/><rect x="3" y="4" width="2" height="1" fill="#ffff00"/><rect x="0" y="5" width="7" height="1" fill="#ffff00"/><rect x="7" y="5" width="8" height="1" fill="#000000"/><rect x="3" y="6" width="2" height="1" fill="#ffff00"/><rect x="5" y="6" width="1" height="1" fill="#000000"/><rect x="6" y="6" width="8" height="1" fill="#ffffff"/><rect x="14" y="6" width="1" height="1" fill="#000000"/><rect x="2" y="7" width="1" height="1" fill="#ffff00"/><rect x="4" y="7" width="2" height="1" fill="#ffff00"/><rect x="6" y="7" width="8" height="1" fill="#b0b0b0"/><rect x="14" y="7" width="1" height="1" fill="#000000"/><rect x="1" y="8" width="1" height="1" fill="#ffff00"/><rect x="4" y="8" width="1" height="1" fill="#ffff00"/><rect x="5" y="8" width="1" height="1" fill="#000000"/><rect x="6" y="8" width="1" height="1" fill="#ffff00"/><rect x="7" y="8" width="6" height="1" fill="#000000"/><rect x="13" y="8" width="1" height="1" fill="#b0b0b0"/><rect x="14" y="8" width="1" height="1" fill="#000000"/><rect x="3" y="9" width="1" height="1" fill="#000000"/><rect x="4" y="9" width="1" height="1" fill="#ffff00"/><rect x="5" y="9" width="2" height="1" fill="#000000"/><rect x="7" y="9" width="7" height="1" fill="#b0b0b0"/><rect x="14" y="9" width="1" height="1" fill="#000000"/><rect x="3" y="10" width="1" height="1" fill="#000000"/><rect x="4" y="10" width="1" height="1" fill="#ffffff"/><rect x="5" y="10" width="3" height="1" fill="#000000"/><rect x="8" y="10" width="6" height="1" fill="#b0b0b0"/><rect x="14" y="10" width="1" height="1" fill="#000000"/><rect x="3" y="11" width="1" height="1" fill="#000000"/><rect x="4" y="11" width="2" height="1" fill="#ffffff"/><rect x="6" y="11" width="2" height="1" fill="#000000"/><rect x="8" y="11" width="6" height="1" fill="#b0b0b0"/><rect x="14" y="11" width="1" height="1" fill="#000000"/><rect x="3" y="12" width="12" height="1" fill="#000000"/></svg></div>
<div class="sep" style="left:205px"></div>
<div class="abs" style="left:213px;top:50px;width:17px;height:16px"><svg width="16" height="16" viewBox="0 0 16 16" shape-rendering="crispEdges"><rect x="4" y="0" width="5" height="1" fill="#000000"/><rect x="0" y="1" width="5" height="1" fill="#000000"/><rect x="5" y="1" width="3" height="1" fill="#ffffff"/><rect x="8" y="1" width="4" height="1" fill="#000000"/><rect x="0" y="2" width="1" height="1" fill="#000000"/><rect x="1" y="2" width="2" height="1" fill="#ffffff"/><rect x="3" y="2" width="1" height="1" fill="#c0c8f8"/><rect x="4" y="2" width="5" height="1" fill="#000000"/><rect x="9" y="2" width="2" height="1" fill="#c0c8f8"/><rect x="11" y="2" width="2" height="1" fill="#000000"/><rect x="0" y="3" width="1" height="1" fill="#000000"/><rect x="1" y="3" width="1" height="1" fill="#ffffff"/><rect x="2" y="3" width="10" height="1" fill="#c0c8f8"/><rect x="12" y="3" width="2" height="1" fill="#000000"/><rect x="0" y="4" width="1" height="1" fill="#000000"/><rect x="1" y="4" width="1" height="1" fill="#ffffff"/><rect x="2" y="4" width="1" height="1" fill="#c0c8f8"/><rect x="3" y="4" width="6" height="1" fill="#0000ff"/><rect x="9" y="4" width="3" height="1" fill="#c0c8f8"/><rect x="12" y="4" width="2" height="1" fill="#000000"/><rect x="0" y="5" width="1" height="1" fill="#000000"/><rect x="1" y="5" width="1" height="1" fill="#ffffff"/><rect x="2" y="5" width="8" height="1" fill="#c0c8f8"/><rect x="10" y="5" width="1" height="1" fill="#ff00ff"/><rect x="11" y="5" width="1" height="1" fill="#ff0000"/><rect x="12" y="5" width="2" height="1" fill="#000000"/><rect x="0" y="6" width="1" height="1" fill="#000000"/><rect x="1" y="6" width="1" height="1" fill="#ffffff"/><rect x="2" y="6" width="1" height="1" fill="#c0c8f8"/><rect x="3" y="6" width="6" height="1" fill="#0000ff"/><rect x="9" y="6" width="1" height="1" fill="#c0c8f8"/><rect x="10" y="6" width="1" height="1" fill="#ff00ff"/><rect x="11" y="6" width="2" height="1" fill="#ff0000"/><rect x="13" y="6" width="1" height="1" fill="#000000"/><rect x="0" y="7" width="1" height="1" fill="#000000"/><rect x="1" y="7" width="1" height="1" fill="#ffffff"/><rect x="2" y="7" width="6" height="1" fill="#c0c8f8"/><rect x="8" y="7" width="6" height="1" fill="#ff0000"/><rect x="14" y="7" width="1" height="1" fill="#000000"/><rect x="0" y="8" width="1" height="1" fill="#000000"/><rect x="1" y="8" width="1" height="1" fill="#ffffff"/><rect x="2" y="8" width="1" height="1" fill="#c0c8f8"/><rect x="3" y="8" width="5" height="1" fill="#0000ff"/><rect x="8" y="8" width="7" height="1" fill="#ff0000"/><rect x="15" y="8" width="1" height="1" fill="#000000"/><rect x="0" y="9" width="1" height="1" fill="#000000"/><rect x="1" y="9" width="1" height="1" fill="#ffffff"/><rect x="2" y="9" width="6" height="1" fill="#c0c8f8"/><rect x="8" y="9" width="6" height="1" fill="#ff0000"/><rect x="14" y="9" width="1" height="1" fill="#000000"/><rect x="0" y="10" width="1" height="1" fill="#000000"/><rect x="1" y="10" width="1" height="1" fill="#ffffff"/><rect x="2" y="10" width="1" height="1" fill="#c0c8f8"/><rect x="3" y="10" width="6" height="1" fill="#0000ff"/><rect x="9" y="10" width="1" height="1" fill="#c0c8f8"/><rect x="10" y="10" width="1" height="1" fill="#ff00ff"/><rect x="11" y="10" width="2" height="1" fill="#ff0000"/><rect x="13" y="10" width="1" height="1" fill="#000000"/><rect x="0" y="11" width="1" height="1" fill="#000000"/><rect x="1" y="11" width="1" height="1" fill="#ffffff"/><rect x="2" y="11" width="8" height="1" fill="#c0c8f8"/><rect x="10" y="11" width="1" height="1" fill="#ff00ff"/><rect x="11" y="11" width="1" height="1" fill="#ff0000"/><rect x="12" y="11" width="2" height="1" fill="#000000"/><rect x="0" y="12" width="1" height="1" fill="#000000"/><rect x="1" y="12" width="2" height="1" fill="#ffffff"/><rect x="3" y="12" width="9" height="1" fill="#c0c8f8"/><rect x="12" y="12" width="2" height="1" fill="#000000"/><rect x="0" y="13" width="14" height="1" fill="#000000"/><rect x="1" y="14" width="2" height="1" fill="#808080"/><rect x="3" y="14" width="10" height="1" fill="#000000"/><rect x="13" y="14" width="1" height="1" fill="#808080"/></svg></div>
<div class="abs" style="left:236px;top:50px;width:17px;height:16px"><svg width="16" height="16" viewBox="0 0 16 16" shape-rendering="crispEdges"><rect x="15" y="3" width="1" height="1" fill="#000000"/><rect x="14" y="4" width="2" height="1" fill="#000000"/><rect x="4" y="5" width="7" height="1" fill="#000000"/><rect x="13" y="5" width="3" height="1" fill="#000000"/><rect x="4" y="6" width="1" height="1" fill="#000000"/><rect x="5" y="6" width="6" height="1" fill="#ffffff"/><rect x="11" y="6" width="1" height="1" fill="#000000"/><rect x="13" y="6" width="2" height="1" fill="#000000"/><rect x="4" y="7" width="1" height="1" fill="#000000"/><rect x="5" y="7" width="7" height="1" fill="#ffffff"/><rect x="12" y="7" width="3" height="1" fill="#000000"/><rect x="4" y="8" width="1" height="1" fill="#000000"/><rect x="5" y="8" width="7" height="1" fill="#ffffff"/><rect x="12" y="8" width="2" height="1" fill="#000000"/><rect x="4" y="9" width="1" height="1" fill="#000000"/><rect x="5" y="9" width="1" height="1" fill="#ffffff"/><rect x="6" y="9" width="2" height="1" fill="#000000"/><rect x="8" y="9" width="3" height="1" fill="#ffffff"/><rect x="11" y="9" width="3" height="1" fill="#000000"/><rect x="4" y="10" width="1" height="1" fill="#000000"/><rect x="5" y="10" width="1" height="1" fill="#ffffff"/><rect x="6" y="10" width="3" height="1" fill="#000000"/><rect x="9" y="10" width="2" height="1" fill="#ffffff"/><rect x="11" y="10" width="3" height="1" fill="#000000"/><rect x="4" y="11" width="1" height="1" fill="#000000"/><rect x="5" y="11" width="2" height="1" fill="#ffffff"/><rect x="7" y="11" width="3" height="1" fill="#000000"/><rect x="10" y="11" width="1" height="1" fill="#ffffff"/><rect x="11" y="11" width="3" height="1" fill="#000000"/><rect x="4" y="12" width="1" height="1" fill="#000000"/><rect x="5" y="12" width="2" height="1" fill="#ffffff"/><rect x="7" y="12" width="6" height="1" fill="#000000"/><rect x="4" y="13" width="1" height="1" fill="#000000"/><rect x="5" y="13" width="3" height="1" fill="#ffffff"/><rect x="8" y="13" width="5" height="1" fill="#000000"/><rect x="4" y="14" width="1" height="1" fill="#000000"/><rect x="5" y="14" width="4" height="1" fill="#ffffff"/><rect x="9" y="14" width="4" height="1" fill="#000000"/><rect x="4" y="15" width="1" height="1" fill="#000000"/><rect x="10" y="15" width="2" height="1" fill="#000000"/><rect x="13" y="15" width="1" height="1" fill="#000000"/></svg></div>
<div class="abs" style="left:259px;top:50px;width:17px;height:16px"><svg width="16" height="16" viewBox="0 0 16 16" shape-rendering="crispEdges"><rect x="6" y="0" width="4" height="1" fill="#000000"/><rect x="2" y="1" width="5" height="1" fill="#000000"/><rect x="7" y="1" width="2" height="1" fill="#ff6000"/><rect x="9" y="1" width="4" height="1" fill="#000000"/><rect x="2" y="2" width="1" height="1" fill="#000000"/><rect x="3" y="2" width="1" height="1" fill="#ffffff"/><rect x="4" y="2" width="3" height="1" fill="#000000"/><rect x="7" y="2" width="2" height="1" fill="#ff6000"/><rect x="9" y="2" width="2" height="1" fill="#000000"/><rect x="11" y="2" width="1" height="1" fill="#a8e8c8"/><rect x="12" y="2" width="1" height="1" fill="#000000"/><rect x="13" y="2" width="1" height="1" fill="#808080"/><rect x="2" y="3" width="1" height="1" fill="#000000"/><rect x="3" y="3" width="1" height="1" fill="#ffffff"/><rect x="4" y="3" width="1" height="1" fill="#a8e8c8"/><rect x="5" y="3" width="5" height="1" fill="#000000"/><rect x="10" y="3" width="2" height="1" fill="#a8e8c8"/><rect x="12" y="3" width="1" height="1" fill="#000000"/><rect x="13" y="3" width="1" height="1" fill="#808080"/><rect x="2" y="4" width="1" height="1" fill="#000000"/><rect x="3" y="4" width="1" height="1" fill="#ffffff"/><rect x="4" y="4" width="8" height="1" fill="#a8e8c8"/><rect x="12" y="4" width="1" height="1" fill="#000000"/><rect x="13" y="4" width="1" height="1" fill="#808080"/><rect x="2" y="5" width="1" height="1" fill="#000000"/><rect x="3" y="5" width="1" height="1" fill="#0000ff"/><rect x="4" y="5" width="2" height="1" fill="#a8e8c8"/><rect x="6" y="5" width="5" height="1" fill="#b0b0b0"/><rect x="11" y="5" width="1" height="1" fill="#a8e8c8"/><rect x="12" y="5" width="1" height="1" fill="#000000"/><rect x="13" y="5" width="1" height="1" fill="#808080"/><rect x="2" y="6" width="1" height="1" fill="#000000"/><rect x="3" y="6" width="2" height="1" fill="#0000ff"/><rect x="5" y="6" width="7" height="1" fill="#a8e8c8"/><rect x="12" y="6" width="1" height="1" fill="#000000"/><rect x="13" y="6" width="1" height="1" fill="#808080"/><rect x="0" y="7" width="6" height="1" fill="#0000ff"/><rect x="6" y="7" width="5" height="1" fill="#b0b0b0"/><rect x="11" y="7" width="1" height="1" fill="#a8e8c8"/><rect x="12" y="7" width="1" height="1" fill="#000000"/><rect x="13" y="7" width="1" height="1" fill="#808080"/><rect x="0" y="8" width="7" height="1" fill="#0000ff"/><rect x="7" y="8" width="5" height="1" fill="#a8e8c8"/><rect x="12" y="8" width="1" height="1" fill="#000000"/><rect x="13" y="8" width="1" height="1" fill="#808080"/><rect x="0" y="9" width="6" height="1" fill="#0000ff"/><rect x="6" y="9" width="5" height="1" fill="#b0b0b0"/><rect x="11" y="9" width="1" height="1" fill="#a8e8c8"/><rect x="12" y="9" width="1" height="1" fill="#000000"/><rect x="13" y="9" width="1" height="1" fill="#808080"/><rect x="2" y="10" width="1" height="1" fill="#000000"/><rect x="3" y="10" width="2" height="1" fill="#0000ff"/><rect x="5" y="10" width="7" height="1" fill="#a8e8c8"/><rect x="12" y="10" width="1" height="1" fill="#000000"/><rect x="13" y="10" width="1" height="1" fill="#808080"/><rect x="2" y="11" width="1" height="1" fill="#000000"/><rect x="3" y="11" width="1" height="1" fill="#0000ff"/><rect x="4" y="11" width="2" height="1" fill="#a8e8c8"/><rect x="6" y="11" width="5" height="1" fill="#b0b0b0"/><rect x="11" y="11" width="1" height="1" fill="#a8e8c8"/><rect x="12" y="11" width="1" height="1" fill="#000000"/><rect x="13" y="11" width="1" height="1" fill="#808080"/><rect x="2" y="12" width="1" height="1" fill="#000000"/><rect x="3" y="12" width="1" height="1" fill="#ffffff"/><rect x="4" y="12" width="8" height="1" fill="#a8e8c8"/><rect x="12" y="12" width="1" height="1" fill="#000000"/><rect x="13" y="12" width="1" height="1" fill="#808080"/><rect x="2" y="13" width="11" height="1" fill="#000000"/><rect x="13" y="13" width="1" height="1" fill="#808080"/><rect x="3" y="14" width="11" height="1" fill="#808080"/></svg></div>
<div class="abs" style="left:282px;top:50px;width:17px;height:16px"><svg width="16" height="16" viewBox="0 0 16 16" shape-rendering="crispEdges"><rect x="1" y="0" width="8" height="1" fill="#000000"/><rect x="1" y="1" width="1" height="1" fill="#000000"/><rect x="2" y="1" width="6" height="1" fill="#ffffff"/><rect x="8" y="1" width="2" height="1" fill="#000000"/><rect x="1" y="2" width="1" height="1" fill="#000000"/><rect x="2" y="2" width="1" height="1" fill="#ffffff"/><rect x="3" y="2" width="3" height="1" fill="#000000"/><rect x="6" y="2" width="2" height="1" fill="#ffffff"/><rect x="8" y="2" width="1" height="1" fill="#000000"/><rect x="9" y="2" width="1" height="1" fill="#ffffff"/><rect x="10" y="2" width="1" height="1" fill="#000000"/><rect x="1" y="3" width="1" height="1" fill="#000000"/><rect x="2" y="3" width="1" height="1" fill="#ffffff"/><rect x="3" y="3" width="4" height="1" fill="#00ffff"/><rect x="7" y="3" width="1" height="1" fill="#ffffff"/><rect x="8" y="3" width="3" height="1" fill="#000000"/><rect x="11" y="3" width="1" height="1" fill="#808080"/><rect x="1" y="4" width="1" height="1" fill="#000000"/><rect x="2" y="4" width="1" height="1" fill="#ffffff"/><rect x="3" y="4" width="3" height="1" fill="#000000"/><rect x="6" y="4" width="4" height="1" fill="#00ffff"/><rect x="10" y="4" width="1" height="1" fill="#000000"/><rect x="11" y="4" width="1" height="1" fill="#808080"/><rect x="1" y="5" width="1" height="1" fill="#000000"/><rect x="2" y="5" width="1" height="1" fill="#ffffff"/><rect x="3" y="5" width="7" height="1" fill="#00ffff"/><rect x="10" y="5" width="1" height="1" fill="#000000"/><rect x="11" y="5" width="1" height="1" fill="#808080"/><rect x="14" y="5" width="1" height="1" fill="#40d040"/><rect x="1" y="6" width="1" height="1" fill="#000000"/><rect x="2" y="6" width="1" height="1" fill="#ffffff"/><rect x="3" y="6" width="4" height="1" fill="#000000"/><rect x="7" y="6" width="3" height="1" fill="#00ffff"/><rect x="10" y="6" width="1" height="1" fill="#000000"/><rect x="11" y="6" width="1" height="1" fill="#808080"/><rect x="13" y="6" width="3" height="1" fill="#40d040"/><rect x="1" y="7" width="1" height="1" fill="#000000"/><rect x="2" y="7" width="1" height="1" fill="#ffffff"/><rect x="3" y="7" width="7" height="1" fill="#00ffff"/><rect x="10" y="7" width="1" height="1" fill="#000000"/><rect x="11" y="7" width="1" height="1" fill="#808080"/><rect x="12" y="7" width="3" height="1" fill="#40d040"/><rect x="1" y="8" width="1" height="1" fill="#000000"/><rect x="2" y="8" width="1" height="1" fill="#ffffff"/><rect x="3" y="8" width="2" height="1" fill="#000000"/><rect x="5" y="8" width="2" height="1" fill="#40d040"/><rect x="7" y="8" width="2" height="1" fill="#00ffff"/><rect x="9" y="8" width="2" height="1" fill="#000000"/><rect x="11" y="8" width="3" height="1" fill="#40d040"/><rect x="14" y="8" width="1" height="1" fill="#808080"/><rect x="1" y="9" width="4" height="1" fill="#000000"/><rect x="5" y="9" width="3" height="1" fill="#40d040"/><rect x="8" y="9" width="1" height="1" fill="#000000"/><rect x="9" y="9" width="4" height="1" fill="#40d040"/><rect x="13" y="9" width="1" height="1" fill="#808080"/><rect x="2" y="10" width="4" height="1" fill="#808080"/><rect x="6" y="10" width="6" height="1" fill="#40d040"/><rect x="12" y="10" width="1" height="1" fill="#808080"/><rect x="6" y="11" width="1" height="1" fill="#808080"/><rect x="7" y="11" width="4" height="1" fill="#40d040"/><rect x="11" y="11" width="1" height="1" fill="#808080"/><rect x="7" y="12" width="1" height="1" fill="#808080"/><rect x="8" y="12" width="2" height="1" fill="#40d040"/><rect x="10" y="12" width="1" height="1" fill="#808080"/><rect x="8" y="13" width="2" height="1" fill="#808080"/></svg></div>
<div class="sep" style="left:305px"></div>
<div class="abs" style="left:313px;top:50px;width:17px;height:16px"><svg width="16" height="16" viewBox="0 0 16 16" shape-rendering="crispEdges"><rect x="14" y="1" width="2" height="1" fill="#000000"/><rect x="13" y="2" width="1" height="1" fill="#000000"/><rect x="14" y="2" width="1" height="1" fill="#ff00ff"/><rect x="15" y="2" width="1" height="1" fill="#000000"/><rect x="13" y="3" width="1" height="1" fill="#000000"/><rect x="14" y="3" width="1" height="1" fill="#ff00ff"/><rect x="15" y="3" width="1" height="1" fill="#000000"/><rect x="12" y="4" width="1" height="1" fill="#000000"/><rect x="13" y="4" width="1" height="1" fill="#ffff00"/><rect x="14" y="4" width="1" height="1" fill="#000000"/><rect x="1" y="5" width="11" height="1" fill="#0000c0"/><rect x="12" y="5" width="1" height="1" fill="#000000"/><rect x="13" y="5" width="1" height="1" fill="#ffff00"/><rect x="14" y="5" width="1" height="1" fill="#000000"/><rect x="1" y="6" width="1" height="1" fill="#0000c0"/><rect x="2" y="6" width="1" height="1" fill="#ffffff"/><rect x="3" y="6" width="2" height="1" fill="#0000c0"/><rect x="5" y="6" width="1" height="1" fill="#ffffff"/><rect x="6" y="6" width="2" height="1" fill="#0000c0"/><rect x="8" y="6" width="1" height="1" fill="#ffffff"/><rect x="9" y="6" width="2" height="1" fill="#0000c0"/><rect x="11" y="6" width="1" height="1" fill="#000000"/><rect x="12" y="6" width="1" height="1" fill="#ffff00"/><rect x="13" y="6" width="1" height="1" fill="#000000"/><rect x="14" y="6" width="1" height="1" fill="#0000c0"/><rect x="1" y="7" width="10" height="1" fill="#0000c0"/><rect x="11" y="7" width="1" height="1" fill="#000000"/><rect x="12" y="7" width="1" height="1" fill="#ffff00"/><rect x="13" y="7" width="1" height="1" fill="#000000"/><rect x="14" y="7" width="1" height="1" fill="#0000c0"/><rect x="1" y="8" width="1" height="1" fill="#0000c0"/><rect x="2" y="8" width="8" height="1" fill="#f0f0e0"/><rect x="10" y="8" width="1" height="1" fill="#000000"/><rect x="11" y="8" width="1" height="1" fill="#ffff00"/><rect x="12" y="8" width="1" height="1" fill="#000000"/><rect x="13" y="8" width="1" height="1" fill="#f0f0e0"/><rect x="14" y="8" width="1" height="1" fill="#0000c0"/><rect x="1" y="9" width="1" height="1" fill="#0000c0"/><rect x="2" y="9" width="1" height="1" fill="#f0f0e0"/><rect x="3" y="9" width="2" height="1" fill="#000000"/><rect x="5" y="9" width="1" height="1" fill="#f0f0e0"/><rect x="6" y="9" width="2" height="1" fill="#000000"/><rect x="8" y="9" width="1" height="1" fill="#f0f0e0"/><rect x="9" y="9" width="1" height="1" fill="#000000"/><rect x="10" y="9" width="1" height="1" fill="#ffff00"/><rect x="11" y="9" width="1" height="1" fill="#000000"/><rect x="12" y="9" width="2" height="1" fill="#f0f0e0"/><rect x="14" y="9" width="1" height="1" fill="#0000c0"/><rect x="1" y="10" width="1" height="1" fill="#0000c0"/><rect x="2" y="10" width="7" height="1" fill="#f0f0e0"/><rect x="9" y="10" width="3" height="1" fill="#000000"/><rect x="12" y="10" width="2" height="1" fill="#f0f0e0"/><rect x="14" y="10" width="1" height="1" fill="#0000c0"/><rect x="1" y="11" width="1" height="1" fill="#0000c0"/><rect x="2" y="11" width="1" height="1" fill="#f0f0e0"/><rect x="3" y="11" width="2" height="1" fill="#000000"/><rect x="5" y="11" width="1" height="1" fill="#f0f0e0"/><rect x="6" y="11" width="2" height="1" fill="#000000"/><rect x="8" y="11" width="1" height="1" fill="#f0f0e0"/><rect x="9" y="11" width="2" height="1" fill="#000000"/><rect x="11" y="11" width="3" height="1" fill="#f0f0e0"/><rect x="14" y="11" width="1" height="1" fill="#0000c0"/><rect x="1" y="12" width="1" height="1" fill="#0000c0"/><rect x="2" y="12" width="7" height="1" fill="#f0f0e0"/><rect x="9" y="12" width="1" height="1" fill="#000000"/><rect x="10" y="12" width="4" height="1" fill="#f0f0e0"/><rect x="14" y="12" width="1" height="1" fill="#0000c0"/><rect x="1" y="13" width="1" height="1" fill="#0000c0"/><rect x="2" y="13" width="12" height="1" fill="#b0b0b0"/><rect x="14" y="13" width="1" height="1" fill="#0000c0"/><rect x="1" y="14" width="14" height="1" fill="#0000c0"/></svg></div>
<div class="abs" style="left:336px;top:50px;width:17px;height:16px"><svg width="16" height="16" viewBox="0 0 16 16" shape-rendering="crispEdges"><rect x="1" y="2" width="14" height="1" fill="#0000c0"/><rect x="1" y="3" width="1" height="1" fill="#0000c0"/><rect x="2" y="3" width="1" height="1" fill="#ffffff"/><rect x="3" y="3" width="2" height="1" fill="#0000c0"/><rect x="5" y="3" width="1" height="1" fill="#ffffff"/><rect x="6" y="3" width="3" height="1" fill="#0000c0"/><rect x="9" y="3" width="1" height="1" fill="#ffffff"/><rect x="10" y="3" width="2" height="1" fill="#0000c0"/><rect x="12" y="3" width="1" height="1" fill="#ffffff"/><rect x="13" y="3" width="2" height="1" fill="#0000c0"/><rect x="1" y="4" width="1" height="1" fill="#0000c0"/><rect x="2" y="4" width="12" height="1" fill="#ffffff"/><rect x="14" y="4" width="1" height="1" fill="#0000c0"/><rect x="1" y="5" width="1" height="1" fill="#0000c0"/><rect x="2" y="5" width="3" height="1" fill="#ffffff"/><rect x="5" y="5" width="8" height="1" fill="#000000"/><rect x="13" y="5" width="1" height="1" fill="#ffffff"/><rect x="14" y="5" width="1" height="1" fill="#0000c0"/><rect x="1" y="6" width="1" height="1" fill="#0000c0"/><rect x="2" y="6" width="2" height="1" fill="#000000"/><rect x="4" y="6" width="1" height="1" fill="#ffffff"/><rect x="5" y="6" width="1" height="1" fill="#000000"/><rect x="6" y="6" width="2" height="1" fill="#00ffff"/><rect x="8" y="6" width="3" height="1" fill="#000000"/><rect x="11" y="6" width="1" height="1" fill="#00ffff"/><rect x="12" y="6" width="2" height="1" fill="#000000"/><rect x="14" y="6" width="1" height="1" fill="#0000c0"/><rect x="1" y="7" width="1" height="1" fill="#0000c0"/><rect x="2" y="7" width="3" height="1" fill="#ffffff"/><rect x="5" y="7" width="2" height="1" fill="#000000"/><rect x="7" y="7" width="2" height="1" fill="#00ffff"/><rect x="9" y="7" width="1" height="1" fill="#000000"/><rect x="10" y="7" width="2" height="1" fill="#00ffff"/><rect x="12" y="7" width="1" height="1" fill="#000000"/><rect x="13" y="7" width="1" height="1" fill="#ffffff"/><rect x="14" y="7" width="1" height="1" fill="#0000c0"/><rect x="1" y="8" width="1" height="1" fill="#0000c0"/><rect x="2" y="8" width="2" height="1" fill="#000000"/><rect x="4" y="8" width="1" height="1" fill="#ffffff"/><rect x="5" y="8" width="3" height="1" fill="#000000"/><rect x="8" y="8" width="3" height="1" fill="#00ffff"/><rect x="11" y="8" width="2" height="1" fill="#000000"/><rect x="13" y="8" width="1" height="1" fill="#ffffff"/><rect x="14" y="8" width="1" height="1" fill="#0000c0"/><rect x="1" y="9" width="1" height="1" fill="#0000c0"/><rect x="2" y="9" width="4" height="1" fill="#ffffff"/><rect x="6" y="9" width="2" height="1" fill="#000000"/><rect x="8" y="9" width="2" height="1" fill="#00ffff"/><rect x="10" y="9" width="3" height="1" fill="#000000"/><rect x="13" y="9" width="1" height="1" fill="#ffffff"/><rect x="14" y="9" width="1" height="1" fill="#0000c0"/><rect x="1" y="10" width="1" height="1" fill="#0000c0"/><rect x="2" y="10" width="2" height="1" fill="#000000"/><rect x="4" y="10" width="2" height="1" fill="#ffffff"/><rect x="6" y="10" width="1" height="1" fill="#000000"/><rect x="7" y="10" width="2" height="1" fill="#00ffff"/><rect x="9" y="10" width="1" height="1" fill="#000000"/><rect x="10" y="10" width="2" height="1" fill="#00ffff"/><rect x="12" y="10" width="2" height="1" fill="#000000"/><rect x="14" y="10" width="1" height="1" fill="#0000c0"/><rect x="1" y="11" width="1" height="1" fill="#0000c0"/><rect x="2" y="11" width="3" height="1" fill="#ffffff"/><rect x="5" y="11" width="6" height="1" fill="#000000"/><rect x="11" y="11" width="2" height="1" fill="#00ffff"/><rect x="13" y="11" width="2" height="1" fill="#000000"/><rect x="1" y="12" width="4" height="1" fill="#0000c0"/><rect x="5" y="12" width="7" height="1" fill="#000000"/><rect x="12" y="12" width="2" height="1" fill="#00ffff"/><rect x="14" y="12" width="2" height="1" fill="#000000"/><rect x="7" y="13" width="8" height="1" fill="#000000"/><rect x="11" y="14" width="2" height="1" fill="#000000"/></svg></div>
<div class="sep" style="left:359px"></div>
<div class="abs" style="left:367px;top:50px;width:17px;height:16px"><svg width="16" height="16" viewBox="0 0 16 16" shape-rendering="crispEdges"><rect x="2" y="0" width="10" height="1" fill="#000000"/><rect x="2" y="1" width="1" height="1" fill="#000000"/><rect x="3" y="1" width="8" height="1" fill="#ffffff"/><rect x="11" y="1" width="1" height="1" fill="#000000"/><rect x="12" y="1" width="1" height="1" fill="#808080"/><rect x="2" y="2" width="1" height="1" fill="#000000"/><rect x="3" y="2" width="1" height="1" fill="#ffffff"/><rect x="4" y="2" width="6" height="1" fill="#000000"/><rect x="10" y="2" width="1" height="1" fill="#80e040"/><rect x="11" y="2" width="1" height="1" fill="#000000"/><rect x="12" y="2" width="1" height="1" fill="#808080"/><rect x="2" y="3" width="1" height="1" fill="#000000"/><rect x="3" y="3" width="1" height="1" fill="#ffffff"/><rect x="4" y="3" width="1" height="1" fill="#000000"/><rect x="5" y="3" width="4" height="1" fill="#80e040"/><rect x="9" y="3" width="1" height="1" fill="#000000"/><rect x="10" y="3" width="1" height="1" fill="#80e040"/><rect x="11" y="3" width="1" height="1" fill="#000000"/><rect x="12" y="3" width="1" height="1" fill="#808080"/><rect x="2" y="4" width="1" height="1" fill="#000000"/><rect x="3" y="4" width="1" height="1" fill="#ffffff"/><rect x="4" y="4" width="6" height="1" fill="#000000"/><rect x="10" y="4" width="1" height="1" fill="#80e040"/><rect x="11" y="4" width="1" height="1" fill="#000000"/><rect x="12" y="4" width="1" height="1" fill="#808080"/><rect x="2" y="5" width="1" height="1" fill="#000000"/><rect x="3" y="5" width="1" height="1" fill="#ffffff"/><rect x="4" y="5" width="1" height="1" fill="#80e040"/><rect x="5" y="5" width="1" height="1" fill="#ffffff"/><rect x="6" y="5" width="1" height="1" fill="#80e040"/><rect x="7" y="5" width="1" height="1" fill="#ffffff"/><rect x="8" y="5" width="1" height="1" fill="#80e040"/><rect x="9" y="5" width="1" height="1" fill="#ffffff"/><rect x="10" y="5" width="1" height="1" fill="#80e040"/><rect x="11" y="5" width="1" height="1" fill="#000000"/><rect x="12" y="5" width="1" height="1" fill="#808080"/><rect x="2" y="6" width="1" height="1" fill="#000000"/><rect x="3" y="6" width="1" height="1" fill="#ffffff"/><rect x="4" y="6" width="7" height="1" fill="#b0b0b0"/><rect x="11" y="6" width="1" height="1" fill="#000000"/><rect x="12" y="6" width="1" height="1" fill="#808080"/><rect x="2" y="7" width="1" height="1" fill="#000000"/><rect x="3" y="7" width="1" height="1" fill="#ffffff"/><rect x="4" y="7" width="1" height="1" fill="#80e040"/><rect x="5" y="7" width="1" height="1" fill="#ffffff"/><rect x="6" y="7" width="1" height="1" fill="#80e040"/><rect x="7" y="7" width="1" height="1" fill="#ffffff"/><rect x="8" y="7" width="1" height="1" fill="#80e040"/><rect x="9" y="7" width="1" height="1" fill="#ffffff"/><rect x="10" y="7" width="1" height="1" fill="#80e040"/><rect x="11" y="7" width="1" height="1" fill="#000000"/><rect x="12" y="7" width="1" height="1" fill="#808080"/><rect x="2" y="8" width="1" height="1" fill="#000000"/><rect x="3" y="8" width="1" height="1" fill="#ffffff"/><rect x="4" y="8" width="7" height="1" fill="#b0b0b0"/><rect x="11" y="8" width="1" height="1" fill="#000000"/><rect x="12" y="8" width="1" height="1" fill="#808080"/><rect x="2" y="9" width="1" height="1" fill="#000000"/><rect x="3" y="9" width="1" height="1" fill="#ffffff"/><rect x="4" y="9" width="1" height="1" fill="#80e040"/><rect x="5" y="9" width="1" height="1" fill="#ffffff"/><rect x="6" y="9" width="1" height="1" fill="#80e040"/><rect x="7" y="9" width="1" height="1" fill="#ffffff"/><rect x="8" y="9" width="1" height="1" fill="#80e040"/><rect x="9" y="9" width="1" height="1" fill="#ffffff"/><rect x="10" y="9" width="1" height="1" fill="#80e040"/><rect x="11" y="9" width="1" height="1" fill="#000000"/><rect x="12" y="9" width="1" height="1" fill="#808080"/><rect x="2" y="10" width="1" height="1" fill="#000000"/><rect x="3" y="10" width="1" height="1" fill="#ffffff"/><rect x="4" y="10" width="7" height="1" fill="#b0b0b0"/><rect x="11" y="10" width="1" height="1" fill="#000000"/><rect x="12" y="10" width="1" height="1" fill="#808080"/><rect x="2" y="11" width="1" height="1" fill="#000000"/><rect x="3" y="11" width="1" height="1" fill="#ffffff"/><rect x="4" y="11" width="1" height="1" fill="#80e040"/><rect x="5" y="11" width="1" height="1" fill="#ffffff"/><rect x="6" y="11" width="1" height="1" fill="#80e040"/><rect x="7" y="11" width="1" height="1" fill="#ffffff"/><rect x="8" y="11" width="1" height="1" fill="#80e040"/><rect x="9" y="11" width="1" height="1" fill="#ffffff"/><rect x="10" y="11" width="1" height="1" fill="#80e040"/><rect x="11" y="11" width="1" height="1" fill="#000000"/><rect x="12" y="11" width="1" height="1" fill="#808080"/><rect x="2" y="12" width="1" height="1" fill="#000000"/><rect x="3" y="12" width="8" height="1" fill="#80e040"/><rect x="11" y="12" width="1" height="1" fill="#000000"/><rect x="12" y="12" width="1" height="1" fill="#808080"/><rect x="2" y="13" width="10" height="1" fill="#000000"/><rect x="12" y="13" width="1" height="1" fill="#808080"/><rect x="3" y="14" width="10" height="1" fill="#808080"/></svg></div>
<div class="abs" style="left:390px;top:50px;width:17px;height:16px"><svg width="16" height="16" viewBox="0 0 16 16" shape-rendering="crispEdges"><rect x="7" y="2" width="3" height="1" fill="#000000"/><rect x="6" y="3" width="1" height="1" fill="#000000"/><rect x="7" y="3" width="3" height="1" fill="#e8c000"/><rect x="10" y="3" width="1" height="1" fill="#000000"/><rect x="5" y="4" width="1" height="1" fill="#000000"/><rect x="6" y="4" width="5" height="1" fill="#e8c000"/><rect x="11" y="4" width="1" height="1" fill="#000000"/><rect x="4" y="5" width="1" height="1" fill="#000000"/><rect x="5" y="5" width="2" height="1" fill="#e8c000"/><rect x="7" y="5" width="1" height="1" fill="#ffffff"/><rect x="8" y="5" width="1" height="1" fill="#ffff00"/><rect x="9" y="5" width="3" height="1" fill="#e8c000"/><rect x="12" y="5" width="1" height="1" fill="#000000"/><rect x="13" y="5" width="1" height="1" fill="#808080"/><rect x="4" y="6" width="1" height="1" fill="#000000"/><rect x="5" y="6" width="2" height="1" fill="#e8c000"/><rect x="7" y="6" width="1" height="1" fill="#ffffff"/><rect x="8" y="6" width="1" height="1" fill="#ffff00"/><rect x="9" y="6" width="3" height="1" fill="#e8c000"/><rect x="12" y="6" width="1" height="1" fill="#000000"/><rect x="13" y="6" width="1" height="1" fill="#808080"/><rect x="4" y="7" width="1" height="1" fill="#000000"/><rect x="5" y="7" width="2" height="1" fill="#e8c000"/><rect x="7" y="7" width="1" height="1" fill="#ffffff"/><rect x="8" y="7" width="1" height="1" fill="#ffff00"/><rect x="9" y="7" width="3" height="1" fill="#e8c000"/><rect x="12" y="7" width="1" height="1" fill="#000000"/><rect x="13" y="7" width="1" height="1" fill="#808080"/><rect x="4" y="8" width="1" height="1" fill="#000000"/><rect x="5" y="8" width="2" height="1" fill="#e8c000"/><rect x="7" y="8" width="1" height="1" fill="#ffffff"/><rect x="8" y="8" width="1" height="1" fill="#ffff00"/><rect x="9" y="8" width="3" height="1" fill="#e8c000"/><rect x="12" y="8" width="1" height="1" fill="#000000"/><rect x="13" y="8" width="1" height="1" fill="#808080"/><rect x="4" y="9" width="1" height="1" fill="#000000"/><rect x="5" y="9" width="2" height="1" fill="#e8c000"/><rect x="7" y="9" width="1" height="1" fill="#ffffff"/><rect x="8" y="9" width="1" height="1" fill="#ffff00"/><rect x="9" y="9" width="3" height="1" fill="#e8c000"/><rect x="12" y="9" width="1" height="1" fill="#000000"/><rect x="13" y="9" width="1" height="1" fill="#808080"/><rect x="3" y="10" width="1" height="1" fill="#000000"/><rect x="4" y="10" width="3" height="1" fill="#e8c000"/><rect x="7" y="10" width="1" height="1" fill="#ffffff"/><rect x="8" y="10" width="5" height="1" fill="#e8c000"/><rect x="13" y="10" width="1" height="1" fill="#000000"/><rect x="14" y="10" width="1" height="1" fill="#808080"/><rect x="2" y="11" width="1" height="1" fill="#000000"/><rect x="3" y="11" width="3" height="1" fill="#e8c000"/><rect x="6" y="11" width="1" height="1" fill="#ffffff"/><rect x="7" y="11" width="7" height="1" fill="#e8c000"/><rect x="14" y="11" width="1" height="1" fill="#000000"/><rect x="15" y="11" width="1" height="1" fill="#808080"/><rect x="2" y="12" width="13" height="1" fill="#000000"/><rect x="15" y="12" width="1" height="1" fill="#808080"/><rect x="6" y="13" width="3" height="1" fill="#000000"/><rect x="13" y="13" width="2" height="1" fill="#808080"/><rect x="7" y="14" width="1" height="1" fill="#000000"/><rect x="10" y="14" width="3" height="1" fill="#808080"/></svg></div>
<div class="abs" style="left:413px;top:50px;width:17px;height:16px"><svg width="16" height="16" viewBox="0 0 16 16" shape-rendering="crispEdges"><rect x="1" y="0" width="13" height="1" fill="#000000"/><rect x="0" y="1" width="1" height="1" fill="#000000"/><rect x="1" y="1" width="13" height="1" fill="#ffd000"/><rect x="14" y="1" width="1" height="1" fill="#000000"/><rect x="0" y="2" width="1" height="1" fill="#000000"/><rect x="1" y="2" width="13" height="1" fill="#ffd000"/><rect x="14" y="2" width="1" height="1" fill="#000000"/><rect x="15" y="2" width="1" height="1" fill="#808080"/><rect x="0" y="3" width="1" height="1" fill="#000000"/><rect x="1" y="3" width="1" height="1" fill="#ffd000"/><rect x="2" y="3" width="3" height="1" fill="#000000"/><rect x="5" y="3" width="5" height="1" fill="#ffd000"/><rect x="10" y="3" width="1" height="1" fill="#000000"/><rect x="11" y="3" width="1" height="1" fill="#ffd000"/><rect x="12" y="3" width="1" height="1" fill="#000000"/><rect x="13" y="3" width="1" height="1" fill="#ffd000"/><rect x="14" y="3" width="1" height="1" fill="#000000"/><rect x="15" y="3" width="1" height="1" fill="#808080"/><rect x="0" y="4" width="1" height="1" fill="#000000"/><rect x="1" y="4" width="1" height="1" fill="#ffd000"/><rect x="2" y="4" width="1" height="1" fill="#000000"/><rect x="3" y="4" width="2" height="1" fill="#ffd000"/><rect x="5" y="4" width="1" height="1" fill="#000000"/><rect x="6" y="4" width="4" height="1" fill="#ffd000"/><rect x="10" y="4" width="1" height="1" fill="#000000"/><rect x="11" y="4" width="1" height="1" fill="#ffd000"/><rect x="12" y="4" width="1" height="1" fill="#000000"/><rect x="13" y="4" width="1" height="1" fill="#ffd000"/><rect x="14" y="4" width="1" height="1" fill="#000000"/><rect x="15" y="4" width="1" height="1" fill="#808080"/><rect x="0" y="5" width="1" height="1" fill="#000000"/><rect x="1" y="5" width="1" height="1" fill="#ffd000"/><rect x="2" y="5" width="1" height="1" fill="#000000"/><rect x="3" y="5" width="2" height="1" fill="#ffd000"/><rect x="5" y="5" width="1" height="1" fill="#000000"/><rect x="6" y="5" width="4" height="1" fill="#ffd000"/><rect x="10" y="5" width="1" height="1" fill="#000000"/><rect x="11" y="5" width="1" height="1" fill="#ffd000"/><rect x="12" y="5" width="1" height="1" fill="#000000"/><rect x="13" y="5" width="1" height="1" fill="#ffd000"/><rect x="14" y="5" width="1" height="1" fill="#000000"/><rect x="15" y="5" width="1" height="1" fill="#808080"/><rect x="0" y="6" width="1" height="1" fill="#000000"/><rect x="1" y="6" width="1" height="1" fill="#ffd000"/><rect x="2" y="6" width="3" height="1" fill="#000000"/><rect x="5" y="6" width="5" height="1" fill="#ffd000"/><rect x="10" y="6" width="1" height="1" fill="#000000"/><rect x="11" y="6" width="1" height="1" fill="#ffd000"/><rect x="12" y="6" width="1" height="1" fill="#000000"/><rect x="13" y="6" width="1" height="1" fill="#ffd000"/><rect x="14" y="6" width="1" height="1" fill="#000000"/><rect x="15" y="6" width="1" height="1" fill="#808080"/><rect x="0" y="7" width="1" height="1" fill="#000000"/><rect x="1" y="7" width="1" height="1" fill="#ffd000"/><rect x="2" y="7" width="1" height="1" fill="#000000"/><rect x="3" y="7" width="7" height="1" fill="#ffd000"/><rect x="10" y="7" width="1" height="1" fill="#000000"/><rect x="11" y="7" width="1" height="1" fill="#ffd000"/><rect x="12" y="7" width="1" height="1" fill="#000000"/><rect x="13" y="7" width="1" height="1" fill="#ffd000"/><rect x="14" y="7" width="1" height="1" fill="#000000"/><rect x="15" y="7" width="1" height="1" fill="#808080"/><rect x="0" y="8" width="1" height="1" fill="#000000"/><rect x="1" y="8" width="1" height="1" fill="#ffd000"/><rect x="2" y="8" width="1" height="1" fill="#000000"/><rect x="3" y="8" width="7" height="1" fill="#ffd000"/><rect x="10" y="8" width="1" height="1" fill="#000000"/><rect x="11" y="8" width="1" height="1" fill="#ffd000"/><rect x="12" y="8" width="1" height="1" fill="#000000"/><rect x="13" y="8" width="1" height="1" fill="#ffd000"/><rect x="14" y="8" width="1" height="1" fill="#000000"/><rect x="15" y="8" width="1" height="1" fill="#808080"/><rect x="0" y="9" width="1" height="1" fill="#000000"/><rect x="1" y="9" width="1" height="1" fill="#ffd000"/><rect x="2" y="9" width="1" height="1" fill="#000000"/><rect x="3" y="9" width="3" height="1" fill="#ffd000"/><rect x="6" y="9" width="1" height="1" fill="#000000"/><rect x="7" y="9" width="4" height="1" fill="#ffd000"/><rect x="11" y="9" width="1" height="1" fill="#000000"/><rect x="12" y="9" width="2" height="1" fill="#ffd000"/><rect x="14" y="9" width="1" height="1" fill="#000000"/><rect x="15" y="9" width="1" height="1" fill="#808080"/><rect x="0" y="10" width="1" height="1" fill="#000000"/><rect x="1" y="10" width="13" height="1" fill="#ffd000"/><rect x="14" y="10" width="1" height="1" fill="#000000"/><rect x="15" y="10" width="1" height="1" fill="#808080"/><rect x="0" y="11" width="1" height="1" fill="#000000"/><rect x="1" y="11" width="13" height="1" fill="#ffd000"/><rect x="14" y="11" width="1" height="1" fill="#000000"/><rect x="15" y="11" width="1" height="1" fill="#808080"/><rect x="1" y="12" width="13" height="1" fill="#000000"/><rect x="15" y="12" width="1" height="1" fill="#808080"/><rect x="2" y="13" width="13" height="1" fill="#808080"/></svg></div>
<div class="sep" style="left:436px"></div>
<div class="abs" style="left:444px;top:50px;width:17px;height:16px"><svg width="16" height="16" viewBox="0 0 16 16" shape-rendering="crispEdges"><rect x="4" y="0" width="7" height="1" fill="#000000"/><rect x="3" y="1" width="1" height="1" fill="#000000"/><rect x="4" y="1" width="7" height="1" fill="#ffffff"/><rect x="11" y="1" width="1" height="1" fill="#000000"/><rect x="3" y="2" width="1" height="1" fill="#000000"/><rect x="4" y="2" width="1" height="1" fill="#ffffff"/><rect x="5" y="2" width="6" height="1" fill="#000000"/><rect x="11" y="2" width="1" height="1" fill="#ffffff"/><rect x="12" y="2" width="1" height="1" fill="#000000"/><rect x="3" y="3" width="1" height="1" fill="#000000"/><rect x="4" y="3" width="2" height="1" fill="#ff0000"/><rect x="6" y="3" width="1" height="1" fill="#ffffff"/><rect x="7" y="3" width="2" height="1" fill="#ff0000"/><rect x="9" y="3" width="2" height="1" fill="#ffffff"/><rect x="11" y="3" width="2" height="1" fill="#000000"/><rect x="2" y="4" width="1" height="1" fill="#000000"/><rect x="3" y="4" width="3" height="1" fill="#ff0000"/><rect x="6" y="4" width="1" height="1" fill="#000000"/><rect x="7" y="4" width="3" height="1" fill="#ff0000"/><rect x="10" y="4" width="1" height="1" fill="#000000"/><rect x="11" y="4" width="1" height="1" fill="#ffffff"/><rect x="12" y="4" width="1" height="1" fill="#000000"/><rect x="0" y="5" width="11" height="1" fill="#000000"/><rect x="11" y="5" width="1" height="1" fill="#ffffff"/><rect x="12" y="5" width="2" height="1" fill="#000000"/><rect x="2" y="6" width="1" height="1" fill="#000000"/><rect x="3" y="6" width="7" height="1" fill="#0000c0"/><rect x="10" y="6" width="1" height="1" fill="#000000"/><rect x="11" y="6" width="1" height="1" fill="#ffffff"/><rect x="12" y="6" width="1" height="1" fill="#000000"/><rect x="2" y="7" width="1" height="1" fill="#000000"/><rect x="3" y="7" width="7" height="1" fill="#0000c0"/><rect x="10" y="7" width="1" height="1" fill="#000000"/><rect x="11" y="7" width="1" height="1" fill="#ffffff"/><rect x="12" y="7" width="1" height="1" fill="#000000"/><rect x="2" y="8" width="1" height="1" fill="#000000"/><rect x="3" y="8" width="7" height="1" fill="#0000c0"/><rect x="10" y="8" width="1" height="1" fill="#000000"/><rect x="11" y="8" width="1" height="1" fill="#ffffff"/><rect x="12" y="8" width="1" height="1" fill="#000000"/><rect x="2" y="9" width="1" height="1" fill="#000000"/><rect x="3" y="9" width="7" height="1" fill="#0000c0"/><rect x="10" y="9" width="1" height="1" fill="#000000"/><rect x="11" y="9" width="1" height="1" fill="#ffffff"/><rect x="12" y="9" width="1" height="1" fill="#000000"/><rect x="2" y="10" width="1" height="1" fill="#000000"/><rect x="3" y="10" width="7" height="1" fill="#0000c0"/><rect x="10" y="10" width="1" height="1" fill="#000000"/><rect x="11" y="10" width="1" height="1" fill="#ffffff"/><rect x="12" y="10" width="1" height="1" fill="#000000"/><rect x="2" y="11" width="1" height="1" fill="#000000"/><rect x="3" y="11" width="7" height="1" fill="#0000c0"/><rect x="10" y="11" width="1" height="1" fill="#000000"/><rect x="11" y="11" width="1" height="1" fill="#ffffff"/><rect x="12" y="11" width="1" height="1" fill="#000000"/><rect x="2" y="12" width="1" height="1" fill="#000000"/><rect x="3" y="12" width="7" height="1" fill="#0000c0"/><rect x="10" y="12" width="3" height="1" fill="#000000"/><rect x="2" y="13" width="1" height="1" fill="#000000"/><rect x="3" y="13" width="7" height="1" fill="#0000c0"/><rect x="10" y="13" width="1" height="1" fill="#000000"/><rect x="3" y="14" width="7" height="1" fill="#000000"/></svg></div>
<div class="abs" style="left:467px;top:50px;width:17px;height:16px"><svg width="16" height="16" viewBox="0 0 16 16" shape-rendering="crispEdges"><rect x="1" y="1" width="3" height="1" fill="#000000"/><rect x="1" y="2" width="1" height="1" fill="#000000"/><rect x="2" y="2" width="1" height="1" fill="#ffff00"/><rect x="3" y="2" width="1" height="1" fill="#ffffff"/><rect x="4" y="2" width="6" height="1" fill="#000000"/><rect x="1" y="3" width="1" height="1" fill="#000000"/><rect x="2" y="3" width="1" height="1" fill="#ffffff"/><rect x="3" y="3" width="1" height="1" fill="#ffff00"/><rect x="4" y="3" width="1" height="1" fill="#ffffff"/><rect x="5" y="3" width="1" height="1" fill="#ffff00"/><rect x="6" y="3" width="1" height="1" fill="#ffffff"/><rect x="7" y="3" width="2" height="1" fill="#ffff00"/><rect x="9" y="3" width="1" height="1" fill="#000000"/><rect x="1" y="4" width="1" height="1" fill="#000000"/><rect x="2" y="4" width="1" height="1" fill="#ffff00"/><rect x="3" y="4" width="1" height="1" fill="#ffffff"/><rect x="4" y="4" width="1" height="1" fill="#ffff00"/><rect x="5" y="4" width="1" height="1" fill="#ffffff"/><rect x="6" y="4" width="1" height="1" fill="#000000"/><rect x="7" y="4" width="1" height="1" fill="#ffff00"/><rect x="8" y="4" width="1" height="1" fill="#ffffff"/><rect x="9" y="4" width="1" height="1" fill="#000000"/><rect x="12" y="4" width="1" height="1" fill="#000000"/><rect x="1" y="5" width="1" height="1" fill="#000000"/><rect x="2" y="5" width="1" height="1" fill="#ffffff"/><rect x="3" y="5" width="1" height="1" fill="#ffff00"/><rect x="4" y="5" width="1" height="1" fill="#ffffff"/><rect x="5" y="5" width="3" height="1" fill="#000000"/><rect x="8" y="5" width="1" height="1" fill="#ffff00"/><rect x="9" y="5" width="1" height="1" fill="#000000"/><rect x="12" y="5" width="1" height="1" fill="#000000"/><rect x="1" y="6" width="1" height="1" fill="#000000"/><rect x="2" y="6" width="1" height="1" fill="#ffff00"/><rect x="3" y="6" width="1" height="1" fill="#ffffff"/><rect x="4" y="6" width="1" height="1" fill="#ffff00"/><rect x="5" y="6" width="5" height="1" fill="#000000"/><rect x="11" y="6" width="3" height="1" fill="#000000"/><rect x="1" y="7" width="1" height="1" fill="#000000"/><rect x="2" y="7" width="1" height="1" fill="#ffffff"/><rect x="3" y="7" width="1" height="1" fill="#ffff00"/><rect x="4" y="7" width="10" height="1" fill="#000000"/><rect x="1" y="8" width="14" height="1" fill="#000000"/><rect x="5" y="9" width="1" height="1" fill="#000000"/><rect x="6" y="9" width="1" height="1" fill="#ffffff"/><rect x="7" y="9" width="4" height="1" fill="#000000"/><rect x="11" y="9" width="1" height="1" fill="#ffffff"/><rect x="12" y="9" width="3" height="1" fill="#000000"/><rect x="5" y="10" width="1" height="1" fill="#000000"/><rect x="6" y="10" width="1" height="1" fill="#ffffff"/><rect x="7" y="10" width="4" height="1" fill="#000000"/><rect x="11" y="10" width="1" height="1" fill="#ffffff"/><rect x="12" y="10" width="3" height="1" fill="#000000"/><rect x="5" y="11" width="10" height="1" fill="#000000"/><rect x="5" y="12" width="4" height="1" fill="#000000"/><rect x="11" y="12" width="4" height="1" fill="#000000"/><rect x="5" y="13" width="1" height="1" fill="#000000"/><rect x="6" y="13" width="1" height="1" fill="#ffffff"/><rect x="7" y="13" width="2" height="1" fill="#000000"/><rect x="11" y="13" width="1" height="1" fill="#000000"/><rect x="12" y="13" width="1" height="1" fill="#ffffff"/><rect x="13" y="13" width="2" height="1" fill="#000000"/><rect x="5" y="14" width="4" height="1" fill="#000000"/><rect x="11" y="14" width="4" height="1" fill="#000000"/></svg></div>
<div class="abs" style="left:490px;top:50px;width:17px;height:16px"><svg width="16" height="16" viewBox="0 0 16 16" shape-rendering="crispEdges"><rect x="1" y="1" width="13" height="1" fill="#0000ff"/><rect x="1" y="2" width="1" height="1" fill="#0000ff"/><rect x="2" y="2" width="1" height="1" fill="#ffffff"/><rect x="3" y="2" width="2" height="1" fill="#0000ff"/><rect x="5" y="2" width="1" height="1" fill="#ffffff"/><rect x="6" y="2" width="2" height="1" fill="#0000ff"/><rect x="8" y="2" width="1" height="1" fill="#ffffff"/><rect x="9" y="2" width="2" height="1" fill="#0000ff"/><rect x="11" y="2" width="1" height="1" fill="#ffffff"/><rect x="12" y="2" width="2" height="1" fill="#0000ff"/><rect x="1" y="3" width="13" height="1" fill="#0000ff"/><rect x="1" y="4" width="1" height="1" fill="#0000ff"/><rect x="2" y="4" width="11" height="1" fill="#ffffff"/><rect x="13" y="4" width="1" height="1" fill="#0000ff"/><rect x="1" y="5" width="1" height="1" fill="#0000ff"/><rect x="2" y="5" width="1" height="1" fill="#ffffff"/><rect x="3" y="5" width="2" height="1" fill="#b0b0b0"/><rect x="5" y="5" width="2" height="1" fill="#ffffff"/><rect x="7" y="5" width="3" height="1" fill="#000000"/><rect x="10" y="5" width="1" height="1" fill="#ffffff"/><rect x="11" y="5" width="1" height="1" fill="#b0b0b0"/><rect x="12" y="5" width="2" height="1" fill="#000000"/><rect x="1" y="6" width="1" height="1" fill="#0000ff"/><rect x="2" y="6" width="5" height="1" fill="#ffffff"/><rect x="7" y="6" width="3" height="1" fill="#000000"/><rect x="10" y="6" width="2" height="1" fill="#ffffff"/><rect x="12" y="6" width="2" height="1" fill="#000000"/><rect x="1" y="7" width="1" height="1" fill="#0000ff"/><rect x="2" y="7" width="1" height="1" fill="#ffffff"/><rect x="3" y="7" width="2" height="1" fill="#b0b0b0"/><rect x="5" y="7" width="1" height="1" fill="#ffffff"/><rect x="6" y="7" width="9" height="1" fill="#000000"/><rect x="1" y="8" width="1" height="1" fill="#0000ff"/><rect x="2" y="8" width="4" height="1" fill="#ffffff"/><rect x="6" y="8" width="2" height="1" fill="#000000"/><rect x="8" y="8" width="1" height="1" fill="#ffffff"/><rect x="9" y="8" width="3" height="1" fill="#000000"/><rect x="12" y="8" width="1" height="1" fill="#ffffff"/><rect x="13" y="8" width="2" height="1" fill="#000000"/><rect x="1" y="9" width="1" height="1" fill="#0000ff"/><rect x="2" y="9" width="1" height="1" fill="#ffffff"/><rect x="3" y="9" width="2" height="1" fill="#b0b0b0"/><rect x="5" y="9" width="3" height="1" fill="#000000"/><rect x="8" y="9" width="1" height="1" fill="#ffffff"/><rect x="9" y="9" width="3" height="1" fill="#000000"/><rect x="12" y="9" width="1" height="1" fill="#ffffff"/><rect x="13" y="9" width="3" height="1" fill="#000000"/><rect x="1" y="10" width="1" height="1" fill="#0000ff"/><rect x="2" y="10" width="3" height="1" fill="#ffffff"/><rect x="5" y="10" width="11" height="1" fill="#000000"/><rect x="1" y="11" width="4" height="1" fill="#0000ff"/><rect x="5" y="11" width="11" height="1" fill="#000000"/><rect x="5" y="12" width="4" height="1" fill="#000000"/><rect x="11" y="12" width="5" height="1" fill="#000000"/><rect x="5" y="13" width="1" height="1" fill="#000000"/><rect x="6" y="13" width="1" height="1" fill="#ffffff"/><rect x="7" y="13" width="2" height="1" fill="#000000"/><rect x="11" y="13" width="2" height="1" fill="#000000"/><rect x="13" y="13" width="1" height="1" fill="#ffffff"/><rect x="14" y="13" width="2" height="1" fill="#000000"/><rect x="5" y="14" width="4" height="1" fill="#000000"/><rect x="11" y="14" width="5" height="1" fill="#000000"/></svg></div>
<div class="sep" style="left:513px"></div>
<div class="abs" style="left:521px;top:50px;width:17px;height:16px"><svg width="16" height="16" viewBox="0 0 16 16" shape-rendering="crispEdges"><rect x="0" y="0" width="16" height="1" fill="#d0d0d0"/><rect x="0" y="1" width="16" height="1" fill="#d0d0d0"/><rect x="0" y="2" width="4" height="1" fill="#d0d0d0"/><rect x="4" y="2" width="6" height="1" fill="#000000"/><rect x="10" y="2" width="6" height="1" fill="#d0d0d0"/><rect x="0" y="3" width="3" height="1" fill="#d0d0d0"/><rect x="3" y="3" width="1" height="1" fill="#000000"/><rect x="4" y="3" width="6" height="1" fill="#c0c000"/><rect x="10" y="3" width="1" height="1" fill="#000000"/><rect x="11" y="3" width="5" height="1" fill="#d0d0d0"/><rect x="0" y="4" width="2" height="1" fill="#d0d0d0"/><rect x="2" y="4" width="12" height="1" fill="#000000"/><rect x="14" y="4" width="2" height="1" fill="#d0d0d0"/><rect x="0" y="5" width="2" height="1" fill="#d0d0d0"/><rect x="2" y="5" width="1" height="1" fill="#000000"/><rect x="3" y="5" width="10" height="1" fill="#ffff00"/><rect x="13" y="5" width="1" height="1" fill="#000000"/><rect x="14" y="5" width="2" height="1" fill="#d0d0d0"/><rect x="0" y="6" width="2" height="1" fill="#d0d0d0"/><rect x="2" y="6" width="1" height="1" fill="#000000"/><rect x="3" y="6" width="10" height="1" fill="#c0c000"/><rect x="13" y="6" width="1" height="1" fill="#000000"/><rect x="14" y="6" width="2" height="1" fill="#d0d0d0"/><rect x="0" y="7" width="2" height="1" fill="#d0d0d0"/><rect x="2" y="7" width="1" height="1" fill="#000000"/><rect x="3" y="7" width="10" height="1" fill="#c0c000"/><rect x="13" y="7" width="1" height="1" fill="#000000"/><rect x="14" y="7" width="2" height="1" fill="#d0d0d0"/><rect x="0" y="8" width="2" height="1" fill="#d0d0d0"/><rect x="2" y="8" width="5" height="1" fill="#000000"/><rect x="7" y="8" width="6" height="1" fill="#c0c000"/><rect x="13" y="8" width="1" height="1" fill="#000000"/><rect x="14" y="8" width="2" height="1" fill="#d0d0d0"/><rect x="0" y="9" width="2" height="1" fill="#000000"/><rect x="2" y="9" width="5" height="1" fill="#ffd8a8"/><rect x="7" y="9" width="1" height="1" fill="#000000"/><rect x="8" y="9" width="5" height="1" fill="#c0c000"/><rect x="13" y="9" width="1" height="1" fill="#000000"/><rect x="14" y="9" width="2" height="1" fill="#d0d0d0"/><rect x="0" y="10" width="1" height="1" fill="#0000ff"/><rect x="1" y="10" width="1" height="1" fill="#000000"/><rect x="2" y="10" width="2" height="1" fill="#ffd8a8"/><rect x="4" y="10" width="1" height="1" fill="#000000"/><rect x="5" y="10" width="3" height="1" fill="#ffd8a8"/><rect x="8" y="10" width="1" height="1" fill="#000000"/><rect x="9" y="10" width="4" height="1" fill="#c0c000"/><rect x="13" y="10" width="1" height="1" fill="#000000"/><rect x="14" y="10" width="2" height="1" fill="#d0d0d0"/><rect x="0" y="11" width="1" height="1" fill="#0000ff"/><rect x="1" y="11" width="1" height="1" fill="#000000"/><rect x="2" y="11" width="3" height="1" fill="#ffd8a8"/><rect x="5" y="11" width="4" height="1" fill="#000000"/><rect x="9" y="11" width="4" height="1" fill="#c0c000"/><rect x="13" y="11" width="1" height="1" fill="#000000"/><rect x="14" y="11" width="2" height="1" fill="#d0d0d0"/><rect x="0" y="12" width="1" height="1" fill="#0000ff"/><rect x="1" y="12" width="1" height="1" fill="#000000"/><rect x="2" y="12" width="7" height="1" fill="#ffd8a8"/><rect x="9" y="12" width="5" height="1" fill="#000000"/><rect x="14" y="12" width="2" height="1" fill="#d0d0d0"/><rect x="0" y="13" width="1" height="1" fill="#0000ff"/><rect x="1" y="13" width="9" height="1" fill="#000000"/><rect x="10" y="13" width="6" height="1" fill="#d0d0d0"/><rect x="0" y="14" width="3" height="1" fill="#d0d0d0"/><rect x="3" y="14" width="12" height="1" fill="#808080"/><rect x="15" y="14" width="1" height="1" fill="#d0d0d0"/><rect x="0" y="15" width="16" height="1" fill="#d0d0d0"/></svg></div>
<div class="abs" style="left:544px;top:50px;width:17px;height:16px"><svg width="16" height="16" viewBox="0 0 16 16" shape-rendering="crispEdges"><rect x="4" y="0" width="4" height="1" fill="#000000"/><rect x="4" y="1" width="1" height="1" fill="#000000"/><rect x="5" y="1" width="2" height="1" fill="#ffff00"/><rect x="7" y="1" width="3" height="1" fill="#000000"/><rect x="4" y="2" width="1" height="1" fill="#000000"/><rect x="5" y="2" width="2" height="1" fill="#ffff00"/><rect x="7" y="2" width="1" height="1" fill="#000000"/><rect x="8" y="2" width="1" height="1" fill="#ffff00"/><rect x="9" y="2" width="1" height="1" fill="#000000"/><rect x="4" y="3" width="1" height="1" fill="#000000"/><rect x="5" y="3" width="2" height="1" fill="#ffff00"/><rect x="7" y="3" width="3" height="1" fill="#000000"/><rect x="4" y="4" width="1" height="1" fill="#000000"/><rect x="5" y="4" width="2" height="1" fill="#ffff00"/><rect x="7" y="4" width="1" height="1" fill="#000000"/><rect x="4" y="5" width="1" height="1" fill="#000000"/><rect x="5" y="5" width="2" height="1" fill="#ffff00"/><rect x="7" y="5" width="2" height="1" fill="#000000"/><rect x="4" y="6" width="1" height="1" fill="#000000"/><rect x="5" y="6" width="2" height="1" fill="#ffff00"/><rect x="7" y="6" width="1" height="1" fill="#000000"/><rect x="8" y="6" width="1" height="1" fill="#ffff00"/><rect x="9" y="6" width="1" height="1" fill="#000000"/><rect x="4" y="7" width="1" height="1" fill="#000000"/><rect x="5" y="7" width="2" height="1" fill="#ffff00"/><rect x="7" y="7" width="3" height="1" fill="#000000"/><rect x="4" y="8" width="1" height="1" fill="#000000"/><rect x="5" y="8" width="2" height="1" fill="#ffff00"/><rect x="7" y="8" width="1" height="1" fill="#000000"/><rect x="3" y="9" width="2" height="1" fill="#000000"/><rect x="5" y="9" width="2" height="1" fill="#ffff00"/><rect x="7" y="9" width="3" height="1" fill="#000000"/><rect x="2" y="10" width="1" height="1" fill="#000000"/><rect x="3" y="10" width="7" height="1" fill="#ffff00"/><rect x="10" y="10" width="1" height="1" fill="#000000"/><rect x="2" y="11" width="1" height="1" fill="#000000"/><rect x="3" y="11" width="3" height="1" fill="#ffff00"/><rect x="6" y="11" width="1" height="1" fill="#000000"/><rect x="7" y="11" width="3" height="1" fill="#ffff00"/><rect x="10" y="11" width="1" height="1" fill="#000000"/><rect x="2" y="12" width="1" height="1" fill="#000000"/><rect x="3" y="12" width="2" height="1" fill="#ffff00"/><rect x="5" y="12" width="3" height="1" fill="#000000"/><rect x="8" y="12" width="2" height="1" fill="#ffff00"/><rect x="10" y="12" width="1" height="1" fill="#000000"/><rect x="2" y="13" width="1" height="1" fill="#000000"/><rect x="3" y="13" width="7" height="1" fill="#ffff00"/><rect x="10" y="13" width="1" height="1" fill="#000000"/><rect x="3" y="14" width="7" height="1" fill="#000000"/></svg></div>
<div class="abs" style="left:567px;top:50px;width:17px;height:16px"><svg width="16" height="16" viewBox="0 0 16 16" shape-rendering="crispEdges"><rect x="3" y="0" width="6" height="1" fill="#000000"/><rect x="2" y="1" width="1" height="1" fill="#000000"/><rect x="3" y="1" width="2" height="1" fill="#ffffff"/><rect x="5" y="1" width="4" height="1" fill="#c0d8f8"/><rect x="9" y="1" width="2" height="1" fill="#000000"/><rect x="1" y="2" width="1" height="1" fill="#000000"/><rect x="2" y="2" width="1" height="1" fill="#ffffff"/><rect x="3" y="2" width="8" height="1" fill="#c0d8f8"/><rect x="11" y="2" width="1" height="1" fill="#000000"/><rect x="0" y="3" width="1" height="1" fill="#000000"/><rect x="1" y="3" width="1" height="1" fill="#ffffff"/><rect x="2" y="3" width="2" height="1" fill="#c0d8f8"/><rect x="4" y="3" width="1" height="1" fill="#b0b0b0"/><rect x="5" y="3" width="2" height="1" fill="#c0d8f8"/><rect x="7" y="3" width="1" height="1" fill="#b0b0b0"/><rect x="8" y="3" width="4" height="1" fill="#c0d8f8"/><rect x="12" y="3" width="1" height="1" fill="#000000"/><rect x="0" y="4" width="1" height="1" fill="#000000"/><rect x="1" y="4" width="4" height="1" fill="#c0d8f8"/><rect x="5" y="4" width="1" height="1" fill="#b0b0b0"/><rect x="6" y="4" width="1" height="1" fill="#c0d8f8"/><rect x="7" y="4" width="1" height="1" fill="#b0b0b0"/><rect x="8" y="4" width="4" height="1" fill="#c0d8f8"/><rect x="12" y="4" width="1" height="1" fill="#000000"/><rect x="0" y="5" width="1" height="1" fill="#000000"/><rect x="1" y="5" width="5" height="1" fill="#c0d8f8"/><rect x="6" y="5" width="1" height="1" fill="#b0b0b0"/><rect x="7" y="5" width="5" height="1" fill="#c0d8f8"/><rect x="12" y="5" width="1" height="1" fill="#000000"/><rect x="0" y="6" width="1" height="1" fill="#000000"/><rect x="1" y="6" width="11" height="1" fill="#c0d8f8"/><rect x="12" y="6" width="1" height="1" fill="#000000"/><rect x="0" y="7" width="1" height="1" fill="#000000"/><rect x="1" y="7" width="11" height="1" fill="#c0d8f8"/><rect x="12" y="7" width="1" height="1" fill="#000000"/><rect x="1" y="8" width="1" height="1" fill="#000000"/><rect x="2" y="8" width="9" height="1" fill="#c0d8f8"/><rect x="11" y="8" width="1" height="1" fill="#000000"/><rect x="2" y="9" width="1" height="1" fill="#000000"/><rect x="3" y="9" width="7" height="1" fill="#c0d8f8"/><rect x="10" y="9" width="3" height="1" fill="#000000"/><rect x="3" y="10" width="7" height="1" fill="#000000"/><rect x="10" y="10" width="2" height="1" fill="#ffd8a8"/><rect x="12" y="10" width="2" height="1" fill="#000000"/><rect x="10" y="11" width="1" height="1" fill="#000000"/><rect x="11" y="11" width="3" height="1" fill="#ffd8a8"/><rect x="14" y="11" width="1" height="1" fill="#000000"/><rect x="11" y="12" width="1" height="1" fill="#000000"/><rect x="12" y="12" width="3" height="1" fill="#ffd8a8"/><rect x="15" y="12" width="1" height="1" fill="#000000"/><rect x="12" y="13" width="1" height="1" fill="#000000"/><rect x="13" y="13" width="2" height="1" fill="#ffd8a8"/><rect x="15" y="13" width="1" height="1" fill="#000000"/><rect x="13" y="14" width="2" height="1" fill="#000000"/></svg></div>
<div class="abs" style="left:590px;top:50px;width:17px;height:16px"><svg width="16" height="16" viewBox="0 0 16 16" shape-rendering="crispEdges"><rect x="1" y="0" width="12" height="1" fill="#000000"/><rect x="0" y="1" width="1" height="1" fill="#000000"/><rect x="1" y="1" width="12" height="1" fill="#40d0d8"/><rect x="13" y="1" width="1" height="1" fill="#000000"/><rect x="0" y="2" width="1" height="1" fill="#000000"/><rect x="1" y="2" width="1" height="1" fill="#40d0d8"/><rect x="2" y="2" width="1" height="1" fill="#000000"/><rect x="3" y="2" width="8" height="1" fill="#40d0d8"/><rect x="11" y="2" width="1" height="1" fill="#000000"/><rect x="12" y="2" width="1" height="1" fill="#40d0d8"/><rect x="13" y="2" width="1" height="1" fill="#000000"/><rect x="14" y="2" width="1" height="1" fill="#808080"/><rect x="0" y="3" width="1" height="1" fill="#000000"/><rect x="1" y="3" width="2" height="1" fill="#40d0d8"/><rect x="3" y="3" width="1" height="1" fill="#000000"/><rect x="4" y="3" width="6" height="1" fill="#40d0d8"/><rect x="10" y="3" width="1" height="1" fill="#000000"/><rect x="11" y="3" width="2" height="1" fill="#40d0d8"/><rect x="13" y="3" width="1" height="1" fill="#000000"/><rect x="14" y="3" width="1" height="1" fill="#808080"/><rect x="0" y="4" width="1" height="1" fill="#000000"/><rect x="1" y="4" width="3" height="1" fill="#40d0d8"/><rect x="4" y="4" width="1" height="1" fill="#000000"/><rect x="5" y="4" width="4" height="1" fill="#40d0d8"/><rect x="9" y="4" width="1" height="1" fill="#000000"/><rect x="10" y="4" width="3" height="1" fill="#40d0d8"/><rect x="13" y="4" width="1" height="1" fill="#000000"/><rect x="14" y="4" width="1" height="1" fill="#808080"/><rect x="0" y="5" width="1" height="1" fill="#000000"/><rect x="1" y="5" width="4" height="1" fill="#40d0d8"/><rect x="5" y="5" width="1" height="1" fill="#000000"/><rect x="6" y="5" width="2" height="1" fill="#40d0d8"/><rect x="8" y="5" width="1" height="1" fill="#000000"/><rect x="9" y="5" width="4" height="1" fill="#40d0d8"/><rect x="13" y="5" width="1" height="1" fill="#000000"/><rect x="14" y="5" width="1" height="1" fill="#808080"/><rect x="0" y="6" width="1" height="1" fill="#000000"/><rect x="1" y="6" width="5" height="1" fill="#40d0d8"/><rect x="6" y="6" width="2" height="1" fill="#000000"/><rect x="8" y="6" width="5" height="1" fill="#40d0d8"/><rect x="13" y="6" width="1" height="1" fill="#000000"/><rect x="14" y="6" width="1" height="1" fill="#808080"/><rect x="0" y="7" width="1" height="1" fill="#000000"/><rect x="1" y="7" width="5" height="1" fill="#40d0d8"/><rect x="6" y="7" width="2" height="1" fill="#000000"/><rect x="8" y="7" width="5" height="1" fill="#40d0d8"/><rect x="13" y="7" width="1" height="1" fill="#000000"/><rect x="14" y="7" width="1" height="1" fill="#808080"/><rect x="0" y="8" width="1" height="1" fill="#000000"/><rect x="1" y="8" width="4" height="1" fill="#40d0d8"/><rect x="5" y="8" width="1" height="1" fill="#000000"/><rect x="6" y="8" width="2" height="1" fill="#40d0d8"/><rect x="8" y="8" width="1" height="1" fill="#000000"/><rect x="9" y="8" width="4" height="1" fill="#40d0d8"/><rect x="13" y="8" width="1" height="1" fill="#000000"/><rect x="14" y="8" width="1" height="1" fill="#808080"/><rect x="0" y="9" width="1" height="1" fill="#000000"/><rect x="1" y="9" width="3" height="1" fill="#40d0d8"/><rect x="4" y="9" width="1" height="1" fill="#000000"/><rect x="5" y="9" width="4" height="1" fill="#40d0d8"/><rect x="9" y="9" width="1" height="1" fill="#000000"/><rect x="10" y="9" width="3" height="1" fill="#40d0d8"/><rect x="13" y="9" width="1" height="1" fill="#000000"/><rect x="14" y="9" width="1" height="1" fill="#808080"/><rect x="0" y="10" width="1" height="1" fill="#000000"/><rect x="1" y="10" width="2" height="1" fill="#40d0d8"/><rect x="3" y="10" width="1" height="1" fill="#000000"/><rect x="4" y="10" width="6" height="1" fill="#40d0d8"/><rect x="10" y="10" width="1" height="1" fill="#000000"/><rect x="11" y="10" width="2" height="1" fill="#40d0d8"/><rect x="13" y="10" width="1" height="1" fill="#000000"/><rect x="14" y="10" width="1" height="1" fill="#808080"/><rect x="0" y="11" width="1" height="1" fill="#000000"/><rect x="1" y="11" width="1" height="1" fill="#40d0d8"/><rect x="2" y="11" width="1" height="1" fill="#000000"/><rect x="3" y="11" width="8" height="1" fill="#40d0d8"/><rect x="11" y="11" width="1" height="1" fill="#000000"/><rect x="12" y="11" width="1" height="1" fill="#40d0d8"/><rect x="13" y="11" width="1" height="1" fill="#000000"/><rect x="14" y="11" width="1" height="1" fill="#808080"/><rect x="0" y="12" width="1" height="1" fill="#000000"/><rect x="1" y="12" width="12" height="1" fill="#40d0d8"/><rect x="13" y="12" width="1" height="1" fill="#000000"/><rect x="14" y="12" width="1" height="1" fill="#808080"/><rect x="1" y="13" width="12" height="1" fill="#000000"/><rect x="13" y="13" width="2" height="1" fill="#808080"/><rect x="2" y="14" width="12" height="1" fill="#808080"/></svg></div>
<div class="sep" style="left:613px"></div>
<div class="abs" style="left:621px;top:50px;width:17px;height:16px"><svg width="16" height="16" viewBox="0 0 16 16" shape-rendering="crispEdges"><rect x="4" y="1" width="1" height="1" fill="#00ffff"/><rect x="4" y="2" width="2" height="1" fill="#00ffff"/><rect x="5" y="3" width="3" height="1" fill="#00ffff"/><rect x="10" y="3" width="1" height="1" fill="#808080"/><rect x="6" y="4" width="4" height="1" fill="#00ffff"/><rect x="10" y="4" width="1" height="1" fill="#808080"/><rect x="6" y="5" width="4" height="1" fill="#00ffff"/><rect x="10" y="5" width="2" height="1" fill="#808080"/><rect x="1" y="6" width="3" height="1" fill="#000000"/><rect x="5" y="6" width="5" height="1" fill="#00ffff"/><rect x="10" y="6" width="1" height="1" fill="#000000"/><rect x="11" y="6" width="2" height="1" fill="#808080"/><rect x="1" y="7" width="1" height="1" fill="#000000"/><rect x="2" y="7" width="1" height="1" fill="#ffff00"/><rect x="3" y="7" width="4" height="1" fill="#000000"/><rect x="7" y="7" width="2" height="1" fill="#00ffff"/><rect x="9" y="7" width="5" height="1" fill="#000000"/><rect x="1" y="8" width="1" height="1" fill="#000000"/><rect x="2" y="8" width="2" height="1" fill="#ffff00"/><rect x="4" y="8" width="1" height="1" fill="#ffffff"/><rect x="5" y="8" width="1" height="1" fill="#ffff00"/><rect x="6" y="8" width="1" height="1" fill="#ffffff"/><rect x="7" y="8" width="1" height="1" fill="#ffff00"/><rect x="8" y="8" width="1" height="1" fill="#ffffff"/><rect x="9" y="8" width="1" height="1" fill="#ffff00"/><rect x="10" y="8" width="1" height="1" fill="#ffffff"/><rect x="11" y="8" width="1" height="1" fill="#ffff00"/><rect x="12" y="8" width="1" height="1" fill="#ffffff"/><rect x="13" y="8" width="1" height="1" fill="#000000"/><rect x="1" y="9" width="1" height="1" fill="#000000"/><rect x="2" y="9" width="1" height="1" fill="#ffff00"/><rect x="3" y="9" width="1" height="1" fill="#ffffff"/><rect x="4" y="9" width="1" height="1" fill="#ffff00"/><rect x="5" y="9" width="1" height="1" fill="#ffffff"/><rect x="6" y="9" width="1" height="1" fill="#ffff00"/><rect x="7" y="9" width="1" height="1" fill="#ffffff"/><rect x="8" y="9" width="1" height="1" fill="#ffff00"/><rect x="9" y="9" width="1" height="1" fill="#ffffff"/><rect x="10" y="9" width="1" height="1" fill="#ffff00"/><rect x="11" y="9" width="1" height="1" fill="#ffffff"/><rect x="12" y="9" width="1" height="1" fill="#ffff00"/><rect x="13" y="9" width="1" height="1" fill="#000000"/><rect x="1" y="10" width="1" height="1" fill="#000000"/><rect x="2" y="10" width="2" height="1" fill="#ffff00"/><rect x="4" y="10" width="1" height="1" fill="#ffffff"/><rect x="5" y="10" width="1" height="1" fill="#ffff00"/><rect x="6" y="10" width="1" height="1" fill="#ffffff"/><rect x="7" y="10" width="1" height="1" fill="#ffff00"/><rect x="8" y="10" width="1" height="1" fill="#ffffff"/><rect x="9" y="10" width="1" height="1" fill="#ffff00"/><rect x="10" y="10" width="1" height="1" fill="#ffffff"/><rect x="11" y="10" width="1" height="1" fill="#ffff00"/><rect x="12" y="10" width="1" height="1" fill="#ffffff"/><rect x="13" y="10" width="1" height="1" fill="#000000"/><rect x="1" y="11" width="1" height="1" fill="#000000"/><rect x="2" y="11" width="1" height="1" fill="#ffff00"/><rect x="3" y="11" width="1" height="1" fill="#ffffff"/><rect x="4" y="11" width="1" height="1" fill="#ffff00"/><rect x="5" y="11" width="1" height="1" fill="#ffffff"/><rect x="6" y="11" width="1" height="1" fill="#ffff00"/><rect x="7" y="11" width="1" height="1" fill="#ffffff"/><rect x="8" y="11" width="1" height="1" fill="#ffff00"/><rect x="9" y="11" width="1" height="1" fill="#ffffff"/><rect x="10" y="11" width="1" height="1" fill="#ffff00"/><rect x="11" y="11" width="1" height="1" fill="#ffffff"/><rect x="12" y="11" width="1" height="1" fill="#ffff00"/><rect x="13" y="11" width="1" height="1" fill="#000000"/><rect x="1" y="12" width="1" height="1" fill="#000000"/><rect x="2" y="12" width="11" height="1" fill="#ffff00"/><rect x="13" y="12" width="1" height="1" fill="#000000"/><rect x="1" y="13" width="13" height="1" fill="#000000"/></svg></div>
<div class="sep" style="left:644px"></div>
<div class="abs" style="left:652px;top:50px;width:17px;height:16px"><svg width="16" height="16" viewBox="0 0 16 16"><path d="M8 0L15.5 4.5V11L10.5 16H5L0 11.5V6Z" fill="#a0a0a0"/><path d="M2.5 10.5L7.5 13" stroke="#fff" stroke-width="1"/></svg></div>
<div class="abs" style="left:675px;top:50px;width:17px;height:16px"><svg width="16" height="16" viewBox="0 0 16 16" shape-rendering="crispEdges"><rect x="1" y="0" width="13" height="1" fill="#000000"/><rect x="0" y="1" width="1" height="1" fill="#000000"/><rect x="1" y="1" width="13" height="1" fill="#0090f0"/><rect x="14" y="1" width="1" height="1" fill="#000000"/><rect x="0" y="2" width="1" height="1" fill="#000000"/><rect x="1" y="2" width="2" height="1" fill="#0090f0"/><rect x="3" y="2" width="8" height="1" fill="#000000"/><rect x="11" y="2" width="3" height="1" fill="#0090f0"/><rect x="14" y="2" width="1" height="1" fill="#000000"/><rect x="15" y="2" width="1" height="1" fill="#808080"/><rect x="0" y="3" width="1" height="1" fill="#000000"/><rect x="1" y="3" width="1" height="1" fill="#0090f0"/><rect x="2" y="3" width="1" height="1" fill="#000000"/><rect x="3" y="3" width="4" height="1" fill="#ffffff"/><rect x="7" y="3" width="2" height="1" fill="#b0b0b0"/><rect x="9" y="3" width="2" height="1" fill="#000000"/><rect x="11" y="3" width="3" height="1" fill="#0090f0"/><rect x="14" y="3" width="1" height="1" fill="#000000"/><rect x="15" y="3" width="1" height="1" fill="#808080"/><rect x="0" y="4" width="1" height="1" fill="#000000"/><rect x="1" y="4" width="1" height="1" fill="#0090f0"/><rect x="2" y="4" width="1" height="1" fill="#000000"/><rect x="3" y="4" width="4" height="1" fill="#ffffff"/><rect x="7" y="4" width="2" height="1" fill="#b0b0b0"/><rect x="9" y="4" width="2" height="1" fill="#000000"/><rect x="11" y="4" width="3" height="1" fill="#0090f0"/><rect x="14" y="4" width="1" height="1" fill="#000000"/><rect x="15" y="4" width="1" height="1" fill="#808080"/><rect x="0" y="5" width="1" height="1" fill="#000000"/><rect x="1" y="5" width="1" height="1" fill="#0090f0"/><rect x="2" y="5" width="1" height="1" fill="#000000"/><rect x="3" y="5" width="4" height="1" fill="#40d040"/><rect x="7" y="5" width="2" height="1" fill="#30a030"/><rect x="9" y="5" width="2" height="1" fill="#000000"/><rect x="11" y="5" width="3" height="1" fill="#0090f0"/><rect x="14" y="5" width="1" height="1" fill="#000000"/><rect x="15" y="5" width="1" height="1" fill="#808080"/><rect x="0" y="6" width="1" height="1" fill="#000000"/><rect x="1" y="6" width="1" height="1" fill="#0090f0"/><rect x="2" y="6" width="1" height="1" fill="#000000"/><rect x="3" y="6" width="4" height="1" fill="#40d040"/><rect x="7" y="6" width="2" height="1" fill="#30a030"/><rect x="9" y="6" width="2" height="1" fill="#000000"/><rect x="11" y="6" width="3" height="1" fill="#0090f0"/><rect x="14" y="6" width="1" height="1" fill="#000000"/><rect x="15" y="6" width="1" height="1" fill="#808080"/><rect x="0" y="7" width="1" height="1" fill="#000000"/><rect x="1" y="7" width="1" height="1" fill="#0090f0"/><rect x="2" y="7" width="1" height="1" fill="#000000"/><rect x="3" y="7" width="4" height="1" fill="#40d040"/><rect x="7" y="7" width="2" height="1" fill="#30a030"/><rect x="9" y="7" width="2" height="1" fill="#000000"/><rect x="11" y="7" width="3" height="1" fill="#0090f0"/><rect x="14" y="7" width="1" height="1" fill="#000000"/><rect x="15" y="7" width="1" height="1" fill="#808080"/><rect x="0" y="8" width="1" height="1" fill="#000000"/><rect x="1" y="8" width="1" height="1" fill="#0090f0"/><rect x="2" y="8" width="1" height="1" fill="#000000"/><rect x="3" y="8" width="4" height="1" fill="#40d040"/><rect x="7" y="8" width="2" height="1" fill="#30a030"/><rect x="9" y="8" width="2" height="1" fill="#000000"/><rect x="11" y="8" width="3" height="1" fill="#0090f0"/><rect x="14" y="8" width="1" height="1" fill="#000000"/><rect x="15" y="8" width="1" height="1" fill="#808080"/><rect x="0" y="9" width="1" height="1" fill="#000000"/><rect x="1" y="9" width="1" height="1" fill="#0090f0"/><rect x="2" y="9" width="1" height="1" fill="#000000"/><rect x="3" y="9" width="4" height="1" fill="#40d040"/><rect x="7" y="9" width="2" height="1" fill="#30a030"/><rect x="9" y="9" width="2" height="1" fill="#000000"/><rect x="11" y="9" width="3" height="1" fill="#0090f0"/><rect x="14" y="9" width="1" height="1" fill="#000000"/><rect x="15" y="9" width="1" height="1" fill="#808080"/><rect x="0" y="10" width="1" height="1" fill="#000000"/><rect x="1" y="10" width="1" height="1" fill="#0090f0"/><rect x="2" y="10" width="1" height="1" fill="#000000"/><rect x="3" y="10" width="4" height="1" fill="#40d040"/><rect x="7" y="10" width="2" height="1" fill="#30a030"/><rect x="9" y="10" width="1" height="1" fill="#000000"/><rect x="10" y="10" width="6" height="1" fill="#ff0000"/><rect x="0" y="11" width="1" height="1" fill="#000000"/><rect x="1" y="11" width="1" height="1" fill="#0090f0"/><rect x="2" y="11" width="9" height="1" fill="#000000"/><rect x="11" y="11" width="3" height="1" fill="#0090f0"/><rect x="14" y="11" width="1" height="1" fill="#000000"/><rect x="15" y="11" width="1" height="1" fill="#808080"/><rect x="0" y="12" width="1" height="1" fill="#000000"/><rect x="1" y="12" width="13" height="1" fill="#0090f0"/><rect x="14" y="12" width="1" height="1" fill="#000000"/><rect x="15" y="12" width="1" height="1" fill="#808080"/><rect x="1" y="13" width="13" height="1" fill="#000000"/><rect x="14" y="13" width="2" height="1" fill="#808080"/><rect x="2" y="14" width="13" height="1" fill="#808080"/></svg></div>
</div>
<div class="hline" style="top:72px;background:#a0a0a0"></div>
<div class="hline" style="top:73px;background:#fff"></div>
<div class="hline" style="top:75px;background:#a0a0a0"></div>
<div class="hline" style="top:76px;background:#fff"></div>
<!-- toolbar 2 -->
<div class="btn d" style="left:-1px"><div class="abs" style="left:20px;top:3px;width:16px;height:16px"><svg width="16" height="16" viewBox="0 0 16 16"><path d="M4.5 0H11.5L16 4.5V11.5L11.5 16H4.5L0 11.5V4.5Z" fill="#a0a0a0"/></svg></div><div class="l">增加<i class="a2">(<u>A</u>)</i></div></div>
<div class="btn d" style="left:54px"><div class="abs" style="left:20px;top:3px;width:16px;height:16px"><svg width="16" height="16" viewBox="0 0 16 16"><path d="M4.5 0H11.5L16 4.5V11.5L11.5 16H4.5L0 11.5V4.5Z" fill="#a0a0a0"/></svg></div><div class="l">删除<i class="a2">(<u>D</u>)</i></div></div>
<div class="btn d" style="left:109px"><div class="abs" style="left:20px;top:3px;width:16px;height:16px"><svg width="16" height="16" viewBox="0 0 16 16"><path d="M4 2H14L16 4V9L12 16H0V7Z" fill="#a0a0a0"/></svg></div><div class="l">修改<i class="a2">(<u>E</u>)</i></div></div>
<div class="btn" style="left:164px"><div class="abs" style="left:20px;top:3px;width:16px;height:16px"><svg width="16" height="16" viewBox="0 0 16 16" shape-rendering="crispEdges"><rect x="1" y="0" width="13" height="1" fill="#000000"/><rect x="0" y="1" width="1" height="1" fill="#000000"/><rect x="1" y="1" width="2" height="1" fill="#40d040"/><rect x="3" y="1" width="1" height="1" fill="#000000"/><rect x="4" y="1" width="5" height="1" fill="#ffff00"/><rect x="9" y="1" width="1" height="1" fill="#000000"/><rect x="10" y="1" width="3" height="1" fill="#40d040"/><rect x="13" y="1" width="2" height="1" fill="#000000"/><rect x="0" y="2" width="1" height="1" fill="#000000"/><rect x="1" y="2" width="2" height="1" fill="#40d040"/><rect x="3" y="2" width="1" height="1" fill="#000000"/><rect x="4" y="2" width="5" height="1" fill="#ffff00"/><rect x="9" y="2" width="1" height="1" fill="#000000"/><rect x="10" y="2" width="3" height="1" fill="#40d040"/><rect x="13" y="2" width="1" height="1" fill="#000000"/><rect x="14" y="2" width="1" height="1" fill="#808080"/><rect x="0" y="3" width="1" height="1" fill="#000000"/><rect x="1" y="3" width="2" height="1" fill="#40d040"/><rect x="3" y="3" width="1" height="1" fill="#000000"/><rect x="4" y="3" width="5" height="1" fill="#ffff00"/><rect x="9" y="3" width="1" height="1" fill="#000000"/><rect x="10" y="3" width="3" height="1" fill="#40d040"/><rect x="13" y="3" width="1" height="1" fill="#000000"/><rect x="14" y="3" width="1" height="1" fill="#808080"/><rect x="0" y="4" width="1" height="1" fill="#000000"/><rect x="1" y="4" width="2" height="1" fill="#40d040"/><rect x="3" y="4" width="1" height="1" fill="#000000"/><rect x="4" y="4" width="5" height="1" fill="#ffff00"/><rect x="9" y="4" width="1" height="1" fill="#000000"/><rect x="10" y="4" width="3" height="1" fill="#40d040"/><rect x="13" y="4" width="1" height="1" fill="#000000"/><rect x="14" y="4" width="1" height="1" fill="#808080"/><rect x="0" y="5" width="1" height="1" fill="#000000"/><rect x="1" y="5" width="2" height="1" fill="#40d040"/><rect x="3" y="5" width="1" height="1" fill="#000000"/><rect x="4" y="5" width="5" height="1" fill="#ffff00"/><rect x="9" y="5" width="1" height="1" fill="#000000"/><rect x="10" y="5" width="3" height="1" fill="#40d040"/><rect x="13" y="5" width="1" height="1" fill="#000000"/><rect x="14" y="5" width="1" height="1" fill="#808080"/><rect x="0" y="6" width="1" height="1" fill="#000000"/><rect x="1" y="6" width="2" height="1" fill="#40d040"/><rect x="3" y="6" width="7" height="1" fill="#000000"/><rect x="10" y="6" width="3" height="1" fill="#40d040"/><rect x="13" y="6" width="1" height="1" fill="#000000"/><rect x="14" y="6" width="1" height="1" fill="#808080"/><rect x="0" y="7" width="1" height="1" fill="#000000"/><rect x="1" y="7" width="12" height="1" fill="#40d040"/><rect x="13" y="7" width="1" height="1" fill="#000000"/><rect x="14" y="7" width="1" height="1" fill="#808080"/><rect x="0" y="8" width="1" height="1" fill="#000000"/><rect x="1" y="8" width="2" height="1" fill="#40d040"/><rect x="3" y="8" width="7" height="1" fill="#000000"/><rect x="10" y="8" width="3" height="1" fill="#40d040"/><rect x="13" y="8" width="1" height="1" fill="#000000"/><rect x="14" y="8" width="1" height="1" fill="#808080"/><rect x="0" y="9" width="1" height="1" fill="#000000"/><rect x="1" y="9" width="2" height="1" fill="#40d040"/><rect x="3" y="9" width="1" height="1" fill="#000000"/><rect x="4" y="9" width="5" height="1" fill="#ffff00"/><rect x="9" y="9" width="1" height="1" fill="#000000"/><rect x="10" y="9" width="3" height="1" fill="#40d040"/><rect x="13" y="9" width="1" height="1" fill="#000000"/><rect x="14" y="9" width="1" height="1" fill="#808080"/><rect x="0" y="10" width="1" height="1" fill="#000000"/><rect x="1" y="10" width="2" height="1" fill="#40d040"/><rect x="3" y="10" width="1" height="1" fill="#000000"/><rect x="4" y="10" width="5" height="1" fill="#ffff00"/><rect x="9" y="10" width="1" height="1" fill="#000000"/><rect x="10" y="10" width="3" height="1" fill="#40d040"/><rect x="13" y="10" width="1" height="1" fill="#000000"/><rect x="14" y="10" width="1" height="1" fill="#808080"/><rect x="0" y="11" width="1" height="1" fill="#000000"/><rect x="1" y="11" width="2" height="1" fill="#40d040"/><rect x="3" y="11" width="1" height="1" fill="#000000"/><rect x="4" y="11" width="5" height="1" fill="#ffff00"/><rect x="9" y="11" width="1" height="1" fill="#000000"/><rect x="10" y="11" width="3" height="1" fill="#40d040"/><rect x="13" y="11" width="1" height="1" fill="#000000"/><rect x="14" y="11" width="1" height="1" fill="#808080"/><rect x="1" y="12" width="13" height="1" fill="#000000"/><rect x="14" y="12" width="1" height="1" fill="#808080"/><rect x="2" y="13" width="13" height="1" fill="#808080"/></svg></div><div class="l">保存<i class="a2">(<u>S</u>)</i></div></div>
<div class="btn" style="left:219px"><div class="abs" style="left:20px;top:3px;width:16px;height:16px"><svg width="16" height="16" viewBox="0 0 16 16" shape-rendering="crispEdges"><rect x="0" y="0" width="16" height="1" fill="#c8c8c8"/><rect x="0" y="1" width="16" height="1" fill="#c8c8c8"/><rect x="0" y="2" width="8" height="1" fill="#c8c8c8"/><rect x="8" y="2" width="5" height="1" fill="#000000"/><rect x="13" y="2" width="3" height="1" fill="#c8c8c8"/><rect x="0" y="3" width="3" height="1" fill="#c8c8c8"/><rect x="3" y="3" width="1" height="1" fill="#000000"/><rect x="4" y="3" width="3" height="1" fill="#c8c8c8"/><rect x="7" y="3" width="1" height="1" fill="#000000"/><rect x="8" y="3" width="5" height="1" fill="#e02040"/><rect x="13" y="3" width="1" height="1" fill="#000000"/><rect x="14" y="3" width="2" height="1" fill="#c8c8c8"/><rect x="0" y="4" width="3" height="1" fill="#c8c8c8"/><rect x="3" y="4" width="2" height="1" fill="#000000"/><rect x="5" y="4" width="1" height="1" fill="#c8c8c8"/><rect x="6" y="4" width="1" height="1" fill="#000000"/><rect x="7" y="4" width="7" height="1" fill="#e02040"/><rect x="14" y="4" width="1" height="1" fill="#000000"/><rect x="15" y="4" width="1" height="1" fill="#c8c8c8"/><rect x="0" y="5" width="3" height="1" fill="#c8c8c8"/><rect x="3" y="5" width="1" height="1" fill="#000000"/><rect x="4" y="5" width="1" height="1" fill="#e02040"/><rect x="5" y="5" width="1" height="1" fill="#000000"/><rect x="6" y="5" width="2" height="1" fill="#e02040"/><rect x="8" y="5" width="4" height="1" fill="#000000"/><rect x="12" y="5" width="2" height="1" fill="#e02040"/><rect x="14" y="5" width="1" height="1" fill="#000000"/><rect x="15" y="5" width="1" height="1" fill="#c8c8c8"/><rect x="0" y="6" width="3" height="1" fill="#c8c8c8"/><rect x="3" y="6" width="1" height="1" fill="#000000"/><rect x="4" y="6" width="3" height="1" fill="#e02040"/><rect x="7" y="6" width="1" height="1" fill="#000000"/><rect x="8" y="6" width="4" height="1" fill="#c8c8c8"/><rect x="12" y="6" width="1" height="1" fill="#000000"/><rect x="13" y="6" width="2" height="1" fill="#e02040"/><rect x="15" y="6" width="1" height="1" fill="#000000"/><rect x="0" y="7" width="3" height="1" fill="#c8c8c8"/><rect x="3" y="7" width="1" height="1" fill="#000000"/><rect x="4" y="7" width="4" height="1" fill="#e02040"/><rect x="8" y="7" width="1" height="1" fill="#000000"/><rect x="9" y="7" width="4" height="1" fill="#c8c8c8"/><rect x="13" y="7" width="1" height="1" fill="#000000"/><rect x="14" y="7" width="1" height="1" fill="#e02040"/><rect x="15" y="7" width="1" height="1" fill="#000000"/><rect x="0" y="8" width="3" height="1" fill="#c8c8c8"/><rect x="3" y="8" width="1" height="1" fill="#000000"/><rect x="4" y="8" width="5" height="1" fill="#e02040"/><rect x="9" y="8" width="1" height="1" fill="#000000"/><rect x="10" y="8" width="3" height="1" fill="#c8c8c8"/><rect x="13" y="8" width="1" height="1" fill="#000000"/><rect x="14" y="8" width="1" height="1" fill="#e02040"/><rect x="15" y="8" width="1" height="1" fill="#000000"/><rect x="0" y="9" width="3" height="1" fill="#c8c8c8"/><rect x="3" y="9" width="7" height="1" fill="#000000"/><rect x="10" y="9" width="3" height="1" fill="#c8c8c8"/><rect x="13" y="9" width="1" height="1" fill="#000000"/><rect x="14" y="9" width="1" height="1" fill="#e02040"/><rect x="15" y="9" width="1" height="1" fill="#000000"/><rect x="0" y="10" width="12" height="1" fill="#c8c8c8"/><rect x="12" y="10" width="1" height="1" fill="#000000"/><rect x="13" y="10" width="2" height="1" fill="#e02040"/><rect x="15" y="10" width="1" height="1" fill="#000000"/><rect x="0" y="11" width="11" height="1" fill="#c8c8c8"/><rect x="11" y="11" width="1" height="1" fill="#000000"/><rect x="12" y="11" width="2" height="1" fill="#e02040"/><rect x="14" y="11" width="1" height="1" fill="#000000"/><rect x="15" y="11" width="1" height="1" fill="#c8c8c8"/><rect x="0" y="12" width="9" height="1" fill="#c8c8c8"/><rect x="9" y="12" width="2" height="1" fill="#000000"/><rect x="11" y="12" width="2" height="1" fill="#e02040"/><rect x="13" y="12" width="1" height="1" fill="#000000"/><rect x="14" y="12" width="2" height="1" fill="#c8c8c8"/><rect x="0" y="13" width="8" height="1" fill="#c8c8c8"/><rect x="8" y="13" width="1" height="1" fill="#000000"/><rect x="9" y="13" width="2" height="1" fill="#e02040"/><rect x="11" y="13" width="2" height="1" fill="#000000"/><rect x="13" y="13" width="3" height="1" fill="#c8c8c8"/><rect x="0" y="14" width="8" height="1" fill="#c8c8c8"/><rect x="8" y="14" width="3" height="1" fill="#000000"/><rect x="11" y="14" width="5" height="1" fill="#c8c8c8"/></svg></div><div class="l">取消<i class="a2">(<u>C</u>)</i></div></div>
<div class="btn" style="left:274px"><div class="abs" style="left:20px;top:3px;width:16px;height:16px"><svg width="16" height="16" viewBox="0 0 16 16" shape-rendering="crispEdges"><rect x="0" y="0" width="16" height="1" fill="#d0d0d0"/><rect x="0" y="1" width="16" height="1" fill="#d0d0d0"/><rect x="0" y="2" width="4" height="1" fill="#d0d0d0"/><rect x="4" y="2" width="6" height="1" fill="#000000"/><rect x="10" y="2" width="6" height="1" fill="#d0d0d0"/><rect x="0" y="3" width="3" height="1" fill="#d0d0d0"/><rect x="3" y="3" width="1" height="1" fill="#000000"/><rect x="4" y="3" width="6" height="1" fill="#c0c000"/><rect x="10" y="3" width="1" height="1" fill="#000000"/><rect x="11" y="3" width="5" height="1" fill="#d0d0d0"/><rect x="0" y="4" width="2" height="1" fill="#d0d0d0"/><rect x="2" y="4" width="12" height="1" fill="#000000"/><rect x="14" y="4" width="2" height="1" fill="#d0d0d0"/><rect x="0" y="5" width="2" height="1" fill="#d0d0d0"/><rect x="2" y="5" width="1" height="1" fill="#000000"/><rect x="3" y="5" width="10" height="1" fill="#ffff00"/><rect x="13" y="5" width="1" height="1" fill="#000000"/><rect x="14" y="5" width="2" height="1" fill="#d0d0d0"/><rect x="0" y="6" width="2" height="1" fill="#d0d0d0"/><rect x="2" y="6" width="1" height="1" fill="#000000"/><rect x="3" y="6" width="10" height="1" fill="#c0c000"/><rect x="13" y="6" width="1" height="1" fill="#000000"/><rect x="14" y="6" width="2" height="1" fill="#d0d0d0"/><rect x="0" y="7" width="2" height="1" fill="#d0d0d0"/><rect x="2" y="7" width="1" height="1" fill="#000000"/><rect x="3" y="7" width="10" height="1" fill="#c0c000"/><rect x="13" y="7" width="1" height="1" fill="#000000"/><rect x="14" y="7" width="2" height="1" fill="#d0d0d0"/><rect x="0" y="8" width="2" height="1" fill="#d0d0d0"/><rect x="2" y="8" width="5" height="1" fill="#000000"/><rect x="7" y="8" width="6" height="1" fill="#c0c000"/><rect x="13" y="8" width="1" height="1" fill="#000000"/><rect x="14" y="8" width="2" height="1" fill="#d0d0d0"/><rect x="0" y="9" width="2" height="1" fill="#000000"/><rect x="2" y="9" width="5" height="1" fill="#ffd8a8"/><rect x="7" y="9" width="1" height="1" fill="#000000"/><rect x="8" y="9" width="5" height="1" fill="#c0c000"/><rect x="13" y="9" width="1" height="1" fill="#000000"/><rect x="14" y="9" width="2" height="1" fill="#d0d0d0"/><rect x="0" y="10" width="1" height="1" fill="#0000ff"/><rect x="1" y="10" width="1" height="1" fill="#000000"/><rect x="2" y="10" width="2" height="1" fill="#ffd8a8"/><rect x="4" y="10" width="1" height="1" fill="#000000"/><rect x="5" y="10" width="3" height="1" fill="#ffd8a8"/><rect x="8" y="10" width="1" height="1" fill="#000000"/><rect x="9" y="10" width="4" height="1" fill="#c0c000"/><rect x="13" y="10" width="1" height="1" fill="#000000"/><rect x="14" y="10" width="2" height="1" fill="#d0d0d0"/><rect x="0" y="11" width="1" height="1" fill="#0000ff"/><rect x="1" y="11" width="1" height="1" fill="#000000"/><rect x="2" y="11" width="3" height="1" fill="#ffd8a8"/><rect x="5" y="11" width="4" height="1" fill="#000000"/><rect x="9" y="11" width="4" height="1" fill="#c0c000"/><rect x="13" y="11" width="1" height="1" fill="#000000"/><rect x="14" y="11" width="2" height="1" fill="#d0d0d0"/><rect x="0" y="12" width="1" height="1" fill="#0000ff"/><rect x="1" y="12" width="1" height="1" fill="#000000"/><rect x="2" y="12" width="7" height="1" fill="#ffd8a8"/><rect x="9" y="12" width="5" height="1" fill="#000000"/><rect x="14" y="12" width="2" height="1" fill="#d0d0d0"/><rect x="0" y="13" width="1" height="1" fill="#0000ff"/><rect x="1" y="13" width="9" height="1" fill="#000000"/><rect x="10" y="13" width="6" height="1" fill="#d0d0d0"/><rect x="0" y="14" width="3" height="1" fill="#d0d0d0"/><rect x="3" y="14" width="12" height="1" fill="#808080"/><rect x="15" y="14" width="1" height="1" fill="#d0d0d0"/></svg></div><div class="l">发送<i class="a2">(<u>Q</u>)</i></div></div>
<div class="btn" style="left:329px"><div class="abs" style="left:20px;top:3px;width:16px;height:16px"><svg width="16" height="16" viewBox="0 0 16 16" shape-rendering="crispEdges"><rect x="4" y="0" width="5" height="1" fill="#000000"/><rect x="0" y="1" width="5" height="1" fill="#000000"/><rect x="5" y="1" width="3" height="1" fill="#ffffff"/><rect x="8" y="1" width="4" height="1" fill="#000000"/><rect x="0" y="2" width="1" height="1" fill="#000000"/><rect x="1" y="2" width="2" height="1" fill="#ffffff"/><rect x="3" y="2" width="1" height="1" fill="#c0c8f8"/><rect x="4" y="2" width="5" height="1" fill="#000000"/><rect x="9" y="2" width="2" height="1" fill="#c0c8f8"/><rect x="11" y="2" width="2" height="1" fill="#000000"/><rect x="0" y="3" width="1" height="1" fill="#000000"/><rect x="1" y="3" width="1" height="1" fill="#ffffff"/><rect x="2" y="3" width="10" height="1" fill="#c0c8f8"/><rect x="12" y="3" width="2" height="1" fill="#000000"/><rect x="0" y="4" width="1" height="1" fill="#000000"/><rect x="1" y="4" width="1" height="1" fill="#ffffff"/><rect x="2" y="4" width="1" height="1" fill="#c0c8f8"/><rect x="3" y="4" width="6" height="1" fill="#0000ff"/><rect x="9" y="4" width="3" height="1" fill="#c0c8f8"/><rect x="12" y="4" width="2" height="1" fill="#000000"/><rect x="0" y="5" width="1" height="1" fill="#000000"/><rect x="1" y="5" width="1" height="1" fill="#ffffff"/><rect x="2" y="5" width="8" height="1" fill="#c0c8f8"/><rect x="10" y="5" width="1" height="1" fill="#ff00ff"/><rect x="11" y="5" width="1" height="1" fill="#ff0000"/><rect x="12" y="5" width="2" height="1" fill="#000000"/><rect x="0" y="6" width="1" height="1" fill="#000000"/><rect x="1" y="6" width="1" height="1" fill="#ffffff"/><rect x="2" y="6" width="1" height="1" fill="#c0c8f8"/><rect x="3" y="6" width="6" height="1" fill="#0000ff"/><rect x="9" y="6" width="1" height="1" fill="#c0c8f8"/><rect x="10" y="6" width="1" height="1" fill="#ff00ff"/><rect x="11" y="6" width="2" height="1" fill="#ff0000"/><rect x="13" y="6" width="1" height="1" fill="#000000"/><rect x="0" y="7" width="1" height="1" fill="#000000"/><rect x="1" y="7" width="1" height="1" fill="#ffffff"/><rect x="2" y="7" width="6" height="1" fill="#c0c8f8"/><rect x="8" y="7" width="6" height="1" fill="#ff0000"/><rect x="14" y="7" width="1" height="1" fill="#000000"/><rect x="0" y="8" width="1" height="1" fill="#000000"/><rect x="1" y="8" width="1" height="1" fill="#ffffff"/><rect x="2" y="8" width="1" height="1" fill="#c0c8f8"/><rect x="3" y="8" width="5" height="1" fill="#0000ff"/><rect x="8" y="8" width="7" height="1" fill="#ff0000"/><rect x="15" y="8" width="1" height="1" fill="#000000"/><rect x="0" y="9" width="1" height="1" fill="#000000"/><rect x="1" y="9" width="1" height="1" fill="#ffffff"/><rect x="2" y="9" width="6" height="1" fill="#c0c8f8"/><rect x="8" y="9" width="6" height="1" fill="#ff0000"/><rect x="14" y="9" width="1" height="1" fill="#000000"/><rect x="0" y="10" width="1" height="1" fill="#000000"/><rect x="1" y="10" width="1" height="1" fill="#ffffff"/><rect x="2" y="10" width="1" height="1" fill="#c0c8f8"/><rect x="3" y="10" width="6" height="1" fill="#0000ff"/><rect x="9" y="10" width="1" height="1" fill="#c0c8f8"/><rect x="10" y="10" width="1" height="1" fill="#ff00ff"/><rect x="11" y="10" width="2" height="1" fill="#ff0000"/><rect x="13" y="10" width="1" height="1" fill="#000000"/><rect x="0" y="11" width="1" height="1" fill="#000000"/><rect x="1" y="11" width="1" height="1" fill="#ffffff"/><rect x="2" y="11" width="8" height="1" fill="#c0c8f8"/><rect x="10" y="11" width="1" height="1" fill="#ff00ff"/><rect x="11" y="11" width="1" height="1" fill="#ff0000"/><rect x="12" y="11" width="2" height="1" fill="#000000"/><rect x="0" y="12" width="1" height="1" fill="#000000"/><rect x="1" y="12" width="2" height="1" fill="#ffffff"/><rect x="3" y="12" width="9" height="1" fill="#c0c8f8"/><rect x="12" y="12" width="2" height="1" fill="#000000"/><rect x="0" y="13" width="14" height="1" fill="#000000"/><rect x="1" y="14" width="2" height="1" fill="#808080"/><rect x="3" y="14" width="10" height="1" fill="#000000"/><rect x="13" y="14" width="1" height="1" fill="#808080"/></svg></div><div class="l">提取<i class="a2">(<u>T</u>)</i></div></div>
<div class="btn" style="left:384px"><div class="abs" style="left:20px;top:3px;width:16px;height:16px"><svg width="16" height="16" viewBox="0 0 16 16" shape-rendering="crispEdges"><rect x="2" y="0" width="9" height="1" fill="#000000"/><rect x="2" y="1" width="1" height="1" fill="#000000"/><rect x="3" y="1" width="7" height="1" fill="#ffffff"/><rect x="10" y="1" width="1" height="1" fill="#000000"/><rect x="11" y="1" width="1" height="1" fill="#808080"/><rect x="2" y="2" width="1" height="1" fill="#000000"/><rect x="3" y="2" width="1" height="1" fill="#ffffff"/><rect x="4" y="2" width="2" height="1" fill="#000000"/><rect x="6" y="2" width="1" height="1" fill="#ffffff"/><rect x="7" y="2" width="2" height="1" fill="#000000"/><rect x="9" y="2" width="1" height="1" fill="#ffffff"/><rect x="10" y="2" width="1" height="1" fill="#000000"/><rect x="11" y="2" width="1" height="1" fill="#808080"/><rect x="2" y="3" width="1" height="1" fill="#000000"/><rect x="3" y="3" width="7" height="1" fill="#ffffff"/><rect x="10" y="3" width="1" height="1" fill="#000000"/><rect x="11" y="3" width="1" height="1" fill="#808080"/><rect x="2" y="4" width="1" height="1" fill="#000000"/><rect x="3" y="4" width="1" height="1" fill="#ffffff"/><rect x="4" y="4" width="1" height="1" fill="#000000"/><rect x="5" y="4" width="1" height="1" fill="#ffffff"/><rect x="6" y="4" width="1" height="1" fill="#000000"/><rect x="7" y="4" width="1" height="1" fill="#ffffff"/><rect x="8" y="4" width="3" height="1" fill="#000000"/><rect x="11" y="4" width="1" height="1" fill="#808080"/><rect x="2" y="5" width="1" height="1" fill="#000000"/><rect x="3" y="5" width="7" height="1" fill="#ffffff"/><rect x="10" y="5" width="1" height="1" fill="#000000"/><rect x="11" y="5" width="1" height="1" fill="#808080"/><rect x="2" y="6" width="1" height="1" fill="#000000"/><rect x="3" y="6" width="1" height="1" fill="#ffffff"/><rect x="4" y="6" width="4" height="1" fill="#000000"/><rect x="8" y="6" width="1" height="1" fill="#ffffff"/><rect x="9" y="6" width="2" height="1" fill="#000000"/><rect x="11" y="6" width="1" height="1" fill="#808080"/><rect x="0" y="7" width="3" height="1" fill="#000000"/><rect x="3" y="7" width="7" height="1" fill="#ffffff"/><rect x="10" y="7" width="3" height="1" fill="#000000"/><rect x="13" y="7" width="1" height="1" fill="#808080"/><rect x="0" y="8" width="1" height="1" fill="#000000"/><rect x="1" y="8" width="1" height="1" fill="#30a030"/><rect x="2" y="8" width="10" height="1" fill="#000000"/><rect x="12" y="8" width="1" height="1" fill="#30a030"/><rect x="13" y="8" width="1" height="1" fill="#000000"/><rect x="14" y="8" width="1" height="1" fill="#808080"/><rect x="0" y="9" width="1" height="1" fill="#000000"/><rect x="1" y="9" width="1" height="1" fill="#207020"/><rect x="2" y="9" width="1" height="1" fill="#30a030"/><rect x="3" y="9" width="10" height="1" fill="#207020"/><rect x="13" y="9" width="1" height="1" fill="#000000"/><rect x="14" y="9" width="1" height="1" fill="#808080"/><rect x="0" y="10" width="1" height="1" fill="#000000"/><rect x="1" y="10" width="1" height="1" fill="#30a030"/><rect x="2" y="10" width="3" height="1" fill="#50e050"/><rect x="5" y="10" width="5" height="1" fill="#30a030"/><rect x="10" y="10" width="3" height="1" fill="#50e050"/><rect x="13" y="10" width="1" height="1" fill="#000000"/><rect x="14" y="10" width="1" height="1" fill="#808080"/><rect x="0" y="11" width="1" height="1" fill="#000000"/><rect x="1" y="11" width="12" height="1" fill="#207020"/><rect x="13" y="11" width="1" height="1" fill="#000000"/><rect x="14" y="11" width="1" height="1" fill="#808080"/><rect x="0" y="12" width="14" height="1" fill="#000000"/><rect x="14" y="12" width="1" height="1" fill="#808080"/><rect x="1" y="13" width="1" height="1" fill="#000000"/><rect x="2" y="13" width="12" height="1" fill="#808080"/></svg></div><div class="l">打印<i class="a2">(<u>P</u>)</i></div></div>
<div class="btn d" style="left:439px"><div class="abs" style="left:20px;top:3px;width:16px;height:16px"><svg width="16" height="16" viewBox="0 0 16 16"><path d="M3 0H13L16 3V16H3L0 13V3Z" fill="#a0a0a0"/></svg></div><div class="l">退出<i class="a2">(<u>X</u>)</i></div></div>
<div class="hline" style="top:116px;background:#a0a0a0"></div>
<div class="hline" style="top:117px;background:#fff"></div>
<!-- form -->
<div class="abs" style="left:63px;top:151px;width:1px;height:1px;background:#000"></div><div class="abs" style="left:69px;top:151px;width:2px;height:1px;background:#000"></div><div class="abs" style="left:74px;top:151px;width:3px;height:1px;background:#000"></div><div class="abs" style="left:78px;top:151px;width:1px;height:1px;background:#000"></div><div class="abs" style="left:86px;top:151px;width:1px;height:1px;background:#000"></div><div class="abs" style="left:95px;top:151px;width:1px;height:1px;background:#000"></div><div class="abs" style="left:106px;top:151px;width:1px;height:1px;background:#000"></div><div class="abs" style="left:108px;top:151px;width:9px;height:1px;background:#000"></div><div class="abs" style="left:215px;top:151px;width:1px;height:1px;background:#000"></div><div class="abs" style="left:220px;top:151px;width:1px;height:1px;background:#000"></div><div class="abs" style="left:222px;top:151px;width:2px;height:1px;background:#000"></div><div class="abs" style="left:225px;top:151px;width:3px;height:1px;background:#000"></div><div class="abs" style="left:230px;top:151px;width:1px;height:1px;background:#000"></div><div class="abs" style="left:236px;top:151px;width:3px;height:1px;background:#000"></div><div class="abs" style="left:262px;top:151px;width:1px;height:1px;background:#000"></div><div class="abs" style="left:267px;top:151px;width:3px;height:1px;background:#000"></div>
<div class="abs" style="left:899px;top:120px;font-family:'Liberation Serif',serif;font-size:24px;line-height:28px;white-space:nowrap">药品申领单</div><div class="abs" style="left:899px;top:145px;width:120px;height:1px;background:#000"></div>
<div class="abs" style="left:15px;top:161px;font-size:15px;line-height:19px">药库</div>
<div class="abs" style="left:53px;top:159px;width:144px;height:22px;background:#cce8cc;box-shadow:inset 1px 1px 0 #a0a0a0,inset 2px 2px 0 #696969,inset -1px -1px 0 #fff,inset -2px -2px 0 #f0f0f0">
  <div class="abs" style="left:5px;top:2px;font-size:15px;line-height:19px;color:#808080">西药库</div>
  <div class="abs" style="left:126px;top:2px;width:17px;height:19px;background:#f0f0f0;box-shadow:inset 1px 1px 0 #fff,inset -1px -1px 0 #696969,inset -2px -2px 0 #a0a0a0"></div>
  <svg class="abs" style="left:131px;top:10px" width="7" height="4" shape-rendering="crispEdges"><rect x="0" y="0" width="7" height="1" fill="#a0a0a0"/><rect x="1" y="1" width="5" height="1" fill="#a0a0a0"/><rect x="2" y="2" width="3" height="1" fill="#a0a0a0"/><rect x="3" y="3" width="1" height="1" fill="#a0a0a0"/></svg>
</div>
<div class="abs" style="left:201px;top:161px;font-size:14.67px;line-height:19px;font-family:'Liberation Mono',monospace;letter-spacing:-0.8px">(<u>1</u>)</div>
<div class="abs" style="left:237px;top:161px;font-size:15px;line-height:19px">申领单号</div>
<div class="abs" style="left:306px;top:159px;width:144px;height:23px;background:#cce8cc;box-shadow:inset 1px 1px 0 #a0a0a0,inset 2px 2px 0 #696969,inset -1px -1px 0 #fff,inset -2px -2px 0 #f0f0f0">
  <div class="abs" style="left:3px;top:3px;font-family:'Liberation Mono',monospace;font-size:14.67px;letter-spacing:-0.8px;line-height:19px">090285</div>
</div>
<!-- grid -->
<div id="grid">
<div class="abs" style="left:0;top:0;width:1666px;height:1px;background:#a0a0a0"></div>
<div class="abs" style="left:0;top:1px;width:1666px;height:1px;background:#696969"></div>
<div class="abs" style="left:0;top:0;width:1px;height:809px;background:#a0a0a0"></div>
<div class="abs" style="left:1px;top:1px;width:1px;height:808px;background:#696969"></div>
</div>
<div id="gridabs">
<div class="hd" style="left:2px;top:190px;width:12px;height:50px"></div>
<div class="hd" style="left:14px;top:190px;width:191px;height:50px;">药品名称</div>
<div class="hd" style="left:205px;top:190px;width:103px;height:50px;">规格</div>
<div class="hd" style="left:308px;top:190px;width:29px;height:50px;justify-content:flex-start;padding-left:2px"><span style="line-height:15px;white-space:normal;width:15px;margin-top:-2px">单位</span></div>
<div class="hd" style="left:337px;top:190px;width:81px;height:50px;">数量</div>
<div class="hd" style="left:418px;top:190px;width:160px;height:25px;">零售价</div>
<div class="hd" style="left:418px;top:215px;width:79px;height:25px;">单价</div>
<div class="hd" style="left:497px;top:215px;width:81px;height:25px;">金额</div>
<div class="hd" style="left:578px;top:190px;width:146px;height:25px;">购进价</div>
<div class="hd" style="left:578px;top:215px;width:69px;height:25px;">单价</div>
<div class="hd" style="left:647px;top:215px;width:77px;height:25px;">金额</div>
<div class="hd" style="left:724px;top:190px;width:151px;height:50px;">供货单位</div>
<div class="hd" style="left:875px;top:190px;width:102px;height:50px;">进销差价</div>
<div class="hd" style="left:977px;top:190px;width:151px;height:50px;">备注</div>
<div class="hd" style="left:1128px;top:190px;width:81px;height:50px;">库存数量</div>
<div class="hd" style="left:1209px;top:190px;width:81px;height:50px;">库存上限</div>
<div class="hd" style="left:1290px;top:190px;width:81px;height:50px;">库存下限</div>
<div class="hd" style="left:1371px;top:190px;width:81px;height:50px;">药品编码</div>
<div class="abs" style="left:977px;top:440px;width:150px;height:19px;background:#ff9020"><div style="width:150px;height:19px;background:#0078d7;background-clip:padding-box;border:1px dotted #000"></div></div>
<div class="ind" style="top:240px"></div>
<div class="ind" style="top:260px"></div>
<div class="ind" style="top:280px"></div>
<div class="ind" style="top:300px"></div>
<div class="ind" style="top:320px"></div>
<div class="ind" style="top:340px"></div>
<div class="ind" style="top:360px"></div>
<div class="ind" style="top:380px"></div>
<div class="ind" style="top:400px"></div>
<div class="ind" style="top:420px"></div>
<div class="ind" style="top:440px"></div>
<div class="ind" style="top:460px"></div>
<div class="ind" style="top:480px"></div>
<div class="ind" style="top:500px"></div>
<div class="ind" style="top:520px"></div>
<div class="ind" style="top:540px"></div>
<div class="ind" style="top:560px"></div>
<div class="ind" style="top:580px"></div>
<div class="ind" style="top:600px"></div>
<div class="ind" style="top:620px"></div>
<div class="ind" style="top:640px"></div>
<div class="ind" style="top:660px"></div>
<div class="ind" style="top:680px"></div>
<div class="ind" style="top:700px"></div>
<div class="ind" style="top:720px"></div>
<div class="ind" style="top:740px"></div>
<div class="ind" style="top:760px"></div>
<div class="ind" style="top:780px"></div>
<div class="ind" style="top:800px"></div>
<div class="ind" style="top:820px"></div>
<div class="ind" style="top:840px"></div>
<div class="ind" style="top:860px"></div>
<div class="ind" style="top:880px"></div>
<div class="ind" style="top:900px"></div>
<div class="ind" style="top:920px"></div>
<div class="ind" style="top:940px"></div>
<div class="vl" style="left:204px;top:240px;height:720px"></div>
<div class="vl" style="left:307px;top:240px;height:720px"></div>
<div class="vl" style="left:336px;top:240px;height:720px"></div>
<div class="vl" style="left:417px;top:240px;height:720px"></div>
<div class="vl" style="left:496px;top:240px;height:720px"></div>
<div class="vl" style="left:577px;top:240px;height:720px"></div>
<div class="vl" style="left:646px;top:240px;height:720px"></div>
<div class="vl" style="left:723px;top:240px;height:720px"></div>
<div class="vl" style="left:874px;top:240px;height:720px"></div>
<div class="vl" style="left:976px;top:240px;height:720px"></div>
<div class="vl" style="left:1127px;top:240px;height:720px"></div>
<div class="vl" style="left:1208px;top:240px;height:720px"></div>
<div class="vl" style="left:1289px;top:240px;height:720px"></div>
<div class="vl" style="left:1370px;top:240px;height:720px"></div>
<div class="vl" style="left:1451px;top:240px;height:720px"></div>
<div class="hl" style="top:259px"></div>
<div class="hl" style="top:279px"></div>
<div class="hl" style="top:299px"></div>
<div class="hl" style="top:319px"></div>
<div class="hl" style="top:339px"></div>
<div class="hl" style="top:359px"></div>
<div class="hl" style="top:379px"></div>
<div class="hl" style="top:399px"></div>
<div class="hl" style="top:419px"></div>
<div class="hl" style="top:439px"></div>
<div class="hl" style="top:459px"></div>
<div class="hl" style="top:479px"></div>
<div class="hl" style="top:499px"></div>
<div class="hl" style="top:519px"></div>
<div class="hl" style="top:539px"></div>
<div class="hl" style="top:559px"></div>
<div class="hl" style="top:579px"></div>
<div class="hl" style="top:599px"></div>
<div class="hl" style="top:619px"></div>
<div class="hl" style="top:639px"></div>
<div class="hl" style="top:659px"></div>
<div class="hl" style="top:679px"></div>
<div class="hl" style="top:699px"></div>
<div class="hl" style="top:719px"></div>
<div class="hl" style="top:739px"></div>
<div class="hl" style="top:759px"></div>
<div class="hl" style="top:779px"></div>
<div class="hl" style="top:799px"></div>
<div class="hl" style="top:819px"></div>
<div class="hl" style="top:839px"></div>
<div class="hl" style="top:859px"></div>
<div class="hl" style="top:879px"></div>
<div class="hl" style="top:899px"></div>
<div class="hl" style="top:919px"></div>
<div class="hl" style="top:939px"></div>
<div class="hl" style="top:959px"></div>
<div class="c" style="left:14px;top:240px;width:190px"><b><i class="tri"></i>可待因片<i class="a">!</i></b></div>
<div class="c" style="left:205px;top:240px;width:102px"><b><i class="a">30mg*20#</i></b></div>
<div class="c" style="left:308px;top:240px;width:28px"><b>盒</b></div>
<div class="c R" style="left:337px;top:240px;width:80px"><b><i class="a">2</i></b></div>
<div class="c R" style="left:418px;top:240px;width:78px"><b><i class="a">17.8000</i></b></div>
<div class="c R" style="left:497px;top:240px;width:80px"><b><i class="a">35.60</i></b></div>
<div class="c R" style="left:578px;top:240px;width:68px"><b><i class="a">17.8000</i></b></div>
<div class="c R" style="left:647px;top:240px;width:76px"><b><i class="a">35.60</i></b></div>
<div class="c" style="left:724px;top:240px;width:150px"><b>国药控股龙岩有限公司</b></div>
<div class="c R" style="left:875px;top:240px;width:101px"><b><i class="a">0.00</i></b></div>
<div class="c R" style="left:1128px;top:240px;width:80px"><b><i class="a">0.65</i></b></div>
<div class="c R" style="left:1209px;top:240px;width:80px"><b><i class="a">2</i></b></div>
<div class="c R" style="left:1290px;top:240px;width:80px"><b><i class="a">1</i></b></div>
<div class="c R" style="left:1371px;top:240px;width:80px"><b><i class="a">1401001</i></b></div>
<div class="c" style="left:14px;top:260px;width:190px"><b><i class="tri"></i>盐酸哌替啶针<i class="a">!</i></b></div>
<div class="c" style="left:205px;top:260px;width:102px"><b><i class="a">0.1g</i></b></div>
<div class="c" style="left:308px;top:260px;width:28px"><b>支</b></div>
<div class="c R" style="left:337px;top:260px;width:80px"><b><i class="a">20</i></b></div>
<div class="c R" style="left:418px;top:260px;width:78px"><b><i class="a">2.9500</i></b></div>
<div class="c R" style="left:497px;top:260px;width:80px"><b><i class="a">59.00</i></b></div>
<div class="c R" style="left:578px;top:260px;width:68px"><b><i class="a">2.9500</i></b></div>
<div class="c R" style="left:647px;top:260px;width:76px"><b><i class="a">59.00</i></b></div>
<div class="c" style="left:724px;top:260px;width:150px"><b>国药控股龙岩有限公司</b></div>
<div class="c R" style="left:875px;top:260px;width:101px"><b><i class="a">0.00</i></b></div>
<div class="c R" style="left:1128px;top:260px;width:80px"><b><i class="a">7</i></b></div>
<div class="c R" style="left:1209px;top:260px;width:80px"><b><i class="a">20</i></b></div>
<div class="c R" style="left:1290px;top:260px;width:80px"><b><i class="a">10</i></b></div>
<div class="c R" style="left:1371px;top:260px;width:80px"><b><i class="a">1401004</i></b></div>
<div class="c" style="left:14px;top:280px;width:190px"><b><i class="tri"></i>地西泮片<i class="a">!</i></b></div>
<div class="c" style="left:205px;top:280px;width:102px"><b><i class="a">2.5mg*100#</i></b></div>
<div class="c" style="left:308px;top:280px;width:28px"><b>瓶</b></div>
<div class="c R" style="left:337px;top:280px;width:80px"><b><i class="a">5</i></b></div>
<div class="c R" style="left:418px;top:280px;width:78px"><b><i class="a">16.0000</i></b></div>
<div class="c R" style="left:497px;top:280px;width:80px"><b><i class="a">80.00</i></b></div>
<div class="c R" style="left:578px;top:280px;width:68px"><b><i class="a">16.0000</i></b></div>
<div class="c R" style="left:647px;top:280px;width:76px"><b><i class="a">80.00</i></b></div>
<div class="c" style="left:724px;top:280px;width:150px"><b>国药控股龙岩有限公司</b></div>
<div class="c R" style="left:875px;top:280px;width:101px"><b><i class="a">0.00</i></b></div>
<div class="c R" style="left:1128px;top:280px;width:80px"><b><i class="a">1.72</i></b></div>
<div class="c R" style="left:1209px;top:280px;width:80px"><b><i class="a">5</i></b></div>
<div class="c R" style="left:1290px;top:280px;width:80px"><b><i class="a">2</i></b></div>
<div class="c R" style="left:1371px;top:280px;width:80px"><b><i class="a">1402001</i></b></div>
<div class="c" style="left:14px;top:300px;width:190px"><b>曲马多缓释片<i class="a">!</i></b></div>
<div class="c" style="left:205px;top:300px;width:102px"><b><i class="a">0.1g*10#</i></b></div>
<div class="c" style="left:308px;top:300px;width:28px"><b>盒</b></div>
<div class="c R" style="left:337px;top:300px;width:80px"><b><i class="a">30</i></b></div>
<div class="c R" style="left:418px;top:300px;width:78px"><b><i class="a">39.9000</i></b></div>
<div class="c R" style="left:497px;top:300px;width:80px"><b><i class="a">1197.00</i></b></div>
<div class="c R" style="left:578px;top:300px;width:68px"><b><i class="a">39.9000</i></b></div>
<div class="c R" style="left:647px;top:300px;width:76px"><b><i class="a">1197.00</i></b></div>
<div class="c" style="left:724px;top:300px;width:150px"><b>国药控股龙岩有限公司</b></div>
<div class="c R" style="left:875px;top:300px;width:101px"><b><i class="a">0.00</i></b></div>
<div class="c R" style="left:1128px;top:300px;width:80px"><b><i class="a">44.5</i></b></div>
<div class="c R" style="left:1209px;top:300px;width:80px"><b><i class="a">30</i></b></div>
<div class="c R" style="left:1290px;top:300px;width:80px"><b><i class="a">15</i></b></div>
<div class="c R" style="left:1371px;top:300px;width:80px"><b><i class="a">1114059</i></b></div>
<div class="c" style="left:14px;top:320px;width:190px"><b><i class="tri"></i>地西泮针<i class="a">!</i></b></div>
<div class="c" style="left:205px;top:320px;width:102px"><b><i class="a">10mg*10</i>支</b></div>
<div class="c" style="left:308px;top:320px;width:28px"><b>盒</b></div>
<div class="c R" style="left:337px;top:320px;width:80px"><b><i class="a">2</i></b></div>
<div class="c R" style="left:418px;top:320px;width:78px"><b><i class="a">66.0000</i></b></div>
<div class="c R" style="left:497px;top:320px;width:80px"><b><i class="a">132.00</i></b></div>
<div class="c R" style="left:578px;top:320px;width:68px"><b><i class="a">66.0000</i></b></div>
<div class="c R" style="left:647px;top:320px;width:76px"><b><i class="a">132.00</i></b></div>
<div class="c" style="left:724px;top:320px;width:150px"><b>福建龙岩同春医药有限</b></div>
<div class="c R" style="left:875px;top:320px;width:101px"><b><i class="a">0.00</i></b></div>
<div class="c R" style="left:1128px;top:320px;width:80px"><b><i class="a">0.2</i></b></div>
<div class="c R" style="left:1209px;top:320px;width:80px"><b><i class="a">2</i></b></div>
<div class="c R" style="left:1290px;top:320px;width:80px"><b><i class="a">2</i></b></div>
<div class="c R" style="left:1371px;top:320px;width:80px"><b><i class="a">1700499</i></b></div>
<div class="c" style="left:14px;top:340px;width:190px"><b><i class="tri"></i>吗啡针<i class="a">!</i></b></div>
<div class="c" style="left:205px;top:340px;width:102px"><b><i class="a">10mg*10</i>支</b></div>
<div class="c" style="left:308px;top:340px;width:28px"><b>盒</b></div>
<div class="c R" style="left:337px;top:340px;width:80px"><b><i class="a">0.5</i></b></div>
<div class="c R" style="left:418px;top:340px;width:78px"><b><i class="a">37.2000</i></b></div>
<div class="c R" style="left:497px;top:340px;width:80px"><b><i class="a">18.60</i></b></div>
<div class="c R" style="left:578px;top:340px;width:68px"><b><i class="a">37.2000</i></b></div>
<div class="c R" style="left:647px;top:340px;width:76px"><b><i class="a">18.60</i></b></div>
<div class="c" style="left:724px;top:340px;width:150px"><b>国药控股龙岩有限公司</b></div>
<div class="c R" style="left:875px;top:340px;width:101px"><b><i class="a">0.00</i></b></div>
<div class="c R" style="left:1128px;top:340px;width:80px"><b><i class="a">0.3</i></b></div>
<div class="c R" style="left:1209px;top:340px;width:80px"><b><i class="a">0.5</i></b></div>
<div class="c R" style="left:1290px;top:340px;width:80px"><b><i class="a">0.5</i></b></div>
<div class="c R" style="left:1371px;top:340px;width:80px"><b><i class="a">1401006</i></b></div>
<div class="c" style="left:14px;top:360px;width:190px"><b><i class="tri"></i>吗啡缓释片<i class="a">!</i></b></div>
<div class="c" style="left:205px;top:360px;width:102px"><b><i class="a">30mg*10#</i></b></div>
<div class="c" style="left:308px;top:360px;width:28px"><b>盒</b></div>
<div class="c R" style="left:337px;top:360px;width:80px"><b><i class="a">20</i></b></div>
<div class="c R" style="left:418px;top:360px;width:78px"><b><i class="a">96.4500</i></b></div>
<div class="c R" style="left:497px;top:360px;width:80px"><b><i class="a">1929.00</i></b></div>
<div class="c R" style="left:578px;top:360px;width:68px"><b><i class="a">96.4500</i></b></div>
<div class="c R" style="left:647px;top:360px;width:76px"><b><i class="a">1929.00</i></b></div>
<div class="c" style="left:724px;top:360px;width:150px"><b>国药控股龙岩有限公司</b></div>
<div class="c R" style="left:875px;top:360px;width:101px"><b><i class="a">0.00</i></b></div>
<div class="c R" style="left:1128px;top:360px;width:80px"><b><i class="a">13.3</i></b></div>
<div class="c R" style="left:1209px;top:360px;width:80px"><b><i class="a">20</i></b></div>
<div class="c R" style="left:1290px;top:360px;width:80px"><b><i class="a">10</i></b></div>
<div class="c R" style="left:1371px;top:360px;width:80px"><b><i class="a">1401008</i></b></div>
<div class="c" style="left:14px;top:380px;width:190px"><b>布桂嗪针<i class="a">!</i></b></div>
<div class="c" style="left:205px;top:380px;width:102px"><b><i class="a">0.1g*10</i>支</b></div>
<div class="c" style="left:308px;top:380px;width:28px"><b>盒</b></div>
<div class="c R" style="left:337px;top:380px;width:80px"><b><i class="a">3</i></b></div>
<div class="c R" style="left:418px;top:380px;width:78px"><b><i class="a">28.8000</i></b></div>
<div class="c R" style="left:497px;top:380px;width:80px"><b><i class="a">86.40</i></b></div>
<div class="c R" style="left:578px;top:380px;width:68px"><b><i class="a">28.8000</i></b></div>
<div class="c R" style="left:647px;top:380px;width:76px"><b><i class="a">86.40</i></b></div>
<div class="c" style="left:724px;top:380px;width:150px"><b>国药控股龙岩有限公司</b></div>
<div class="c R" style="left:875px;top:380px;width:101px"><b><i class="a">0.00</i></b></div>
<div class="c R" style="left:1128px;top:380px;width:80px"><b><i class="a">1.1</i></b></div>
<div class="c R" style="left:1209px;top:380px;width:80px"><b><i class="a">3</i></b></div>
<div class="c R" style="left:1290px;top:380px;width:80px"><b><i class="a">1</i></b></div>
<div class="c R" style="left:1371px;top:380px;width:80px"><b><i class="a">1402019</i></b></div>
<div class="c" style="left:14px;top:400px;width:190px"><b><i class="tri"></i>盐酸哌替啶针<i class="a">!</i></b></div>
<div class="c" style="left:205px;top:400px;width:102px"><b><i class="a">50mg*5</i>支</b></div>
<div class="c" style="left:308px;top:400px;width:28px"><b>盒</b></div>
<div class="c R" style="left:337px;top:400px;width:80px"><b><i class="a">1</i></b></div>
<div class="c R" style="left:418px;top:400px;width:78px"><b><i class="a">8.6500</i></b></div>
<div class="c R" style="left:497px;top:400px;width:80px"><b><i class="a">8.65</i></b></div>
<div class="c R" style="left:578px;top:400px;width:68px"><b><i class="a">8.6500</i></b></div>
<div class="c R" style="left:647px;top:400px;width:76px"><b><i class="a">8.65</i></b></div>
<div class="c" style="left:724px;top:400px;width:150px"><b>国药控股龙岩有限公司</b></div>
<div class="c R" style="left:875px;top:400px;width:101px"><b><i class="a">0.00</i></b></div>
<div class="c R" style="left:1128px;top:400px;width:80px"><b><i class="a">1</i></b></div>
<div class="c R" style="left:1209px;top:400px;width:80px"><b><i class="a">1</i></b></div>
<div class="c R" style="left:1290px;top:400px;width:80px"><b><i class="a">1</i></b></div>
<div class="c R" style="left:1371px;top:400px;width:80px"><b><i class="a">1700726</i></b></div>
<div class="c" style="left:14px;top:420px;width:190px"><b><i class="tri"></i>苯巴比妥片<i class="a">!</i></b></div>
<div class="c" style="left:205px;top:420px;width:102px"><b><i class="a">30mg*100#</i></b></div>
<div class="c" style="left:308px;top:420px;width:28px"><b>瓶</b></div>
<div class="c R" style="left:337px;top:420px;width:80px"><b><i class="a">3</i></b></div>
<div class="c R" style="left:418px;top:420px;width:78px"><b><i class="a">58.0000</i></b></div>
<div class="c R" style="left:497px;top:420px;width:80px"><b><i class="a">174.00</i></b></div>
<div class="c R" style="left:578px;top:420px;width:68px"><b><i class="a">58.0000</i></b></div>
<div class="c R" style="left:647px;top:420px;width:76px"><b><i class="a">174.00</i></b></div>
<div class="c" style="left:724px;top:420px;width:150px"><b>国药控股龙岩有限公司</b></div>
<div class="c R" style="left:875px;top:420px;width:101px"><b><i class="a">0.00</i></b></div>
<div class="c R" style="left:1128px;top:420px;width:80px"><b><i class="a">1.61</i></b></div>
<div class="c R" style="left:1209px;top:420px;width:80px"><b><i class="a">3</i></b></div>
<div class="c R" style="left:1290px;top:420px;width:80px"><b><i class="a">2</i></b></div>
<div class="c R" style="left:1371px;top:420px;width:80px"><b><i class="a">1700776</i></b></div>
<div class="c" style="left:14px;top:440px;width:190px"><b>芬太尼透皮贴剂<i class="a">!</i></b></div>
<div class="c" style="left:205px;top:440px;width:102px"><b><i class="a">2.5mg*2</i>贴</b></div>
<div class="c" style="left:308px;top:440px;width:28px"><b>盒</b></div>
<div class="c R" style="left:337px;top:440px;width:80px"><b><i class="a">10</i></b></div>
<div class="c R" style="left:418px;top:440px;width:78px"><b><i class="a">119.7000</i></b></div>
<div class="c R" style="left:497px;top:440px;width:80px"><b><i class="a">1197.00</i></b></div>
<div class="c R" style="left:578px;top:440px;width:68px"><b><i class="a">119.7000</i></b></div>
<div class="c R" style="left:647px;top:440px;width:76px"><b><i class="a">1197.00</i></b></div>
<div class="c" style="left:724px;top:440px;width:150px"><b>国药控股龙岩有限公司</b></div>
<div class="c R" style="left:875px;top:440px;width:101px"><b><i class="a">0.00</i></b></div>
<div class="c R" style="left:1128px;top:440px;width:80px"><b><i class="a">0</i></b></div>
<div class="c R" style="left:1209px;top:440px;width:80px"><b><i class="a">10</i></b></div>
<div class="c R" style="left:1290px;top:440px;width:80px"><b><i class="a">5</i></b></div>
<div class="c R" style="left:1371px;top:440px;width:80px"><b><i class="a">1701093</i></b></div>
<div class="c" style="left:14px;top:460px;width:190px"><b>地佐辛针<i class="a">!</i></b></div>
<div class="c" style="left:205px;top:460px;width:102px"><b><i class="a">5mg*4</i>支</b></div>
<div class="c" style="left:308px;top:460px;width:28px"><b>盒</b></div>
<div class="c R" style="left:337px;top:460px;width:80px"><b><i class="a">60</i></b></div>
<div class="c R" style="left:418px;top:460px;width:78px"><b><i class="a">441.7200</i></b></div>
<div class="c R" style="left:497px;top:460px;width:80px"><b><i class="a">26503.20</i></b></div>
<div class="c R" style="left:578px;top:460px;width:68px"><b><i class="a">441.7200</i></b></div>
<div class="c R" style="left:647px;top:460px;width:76px"><b><i class="a">26503.20</i></b></div>
<div class="c" style="left:724px;top:460px;width:150px"><b>龙岩新鹭燕医药有限公</b></div>
<div class="c R" style="left:875px;top:460px;width:101px"><b><i class="a">0.00</i></b></div>
<div class="c R" style="left:1128px;top:460px;width:80px"><b><i class="a">24.75</i></b></div>
<div class="c R" style="left:1209px;top:460px;width:80px"><b><i class="a">60</i></b></div>
<div class="c R" style="left:1290px;top:460px;width:80px"><b><i class="a">40</i></b></div>
<div class="c R" style="left:1371px;top:460px;width:80px"><b><i class="a">1701453</i></b></div>
<div class="c" style="left:14px;top:480px;width:190px"><b><i class="a">+</i>普罗帕酮片</b></div>
<div class="c" style="left:205px;top:480px;width:102px"><b><i class="a">150mg*10#</i></b></div>
<div class="c" style="left:308px;top:480px;width:28px"><b>盒</b></div>
<div class="c R" style="left:337px;top:480px;width:80px"><b><i class="a">1000000</i></b></div>
<div class="c R" style="left:418px;top:480px;width:78px"><b><i class="a">19.2000</i></b></div>
<div class="c R" style="left:497px;top:480px;width:80px"><b><i class="a">19200000.00</i></b></div>
<div class="c R" style="left:578px;top:480px;width:68px"><b><i class="a">19.2000</i></b></div>
<div class="c R" style="left:647px;top:480px;width:76px"><b><i class="a">19200000.00</i></b></div>
<div class="c" style="left:724px;top:480px;width:150px"><b>鹭燕医药股份有限公司</b></div>
<div class="c R" style="left:875px;top:480px;width:101px"><b><i class="a">0.00</i></b></div>
<div class="c R" style="left:1128px;top:480px;width:80px"><b><i class="a">8</i></b></div>
<div class="c R" style="left:1209px;top:480px;width:80px"><b><i class="a">1000000</i></b></div>
<div class="c R" style="left:1290px;top:480px;width:80px"><b><i class="a">0</i></b></div>
<div class="c R" style="left:1371px;top:480px;width:80px"><b><i class="a">5109645</i></b></div>
<div class="c" style="left:14px;top:500px;width:190px"><b><i class="dot"></i>右佐匹克隆片<i class="a">!G3</i></b></div>
<div class="c" style="left:205px;top:500px;width:102px"><b><i class="a">3mg*7#</i></b></div>
<div class="c" style="left:308px;top:500px;width:28px"><b>盒</b></div>
<div class="c R" style="left:337px;top:500px;width:80px"><b><i class="a">300</i></b></div>
<div class="c R" style="left:418px;top:500px;width:78px"><b><i class="a">4.3000</i></b></div>
<div class="c R" style="left:497px;top:500px;width:80px"><b><i class="a">1290.00</i></b></div>
<div class="c R" style="left:578px;top:500px;width:68px"><b><i class="a">4.3000</i></b></div>
<div class="c R" style="left:647px;top:500px;width:76px"><b><i class="a">1290.00</i></b></div>
<div class="c" style="left:724px;top:500px;width:150px"><b>国药控股龙岩有限公司</b></div>
<div class="c R" style="left:875px;top:500px;width:101px"><b><i class="a">0.00</i></b></div>
<div class="c R" style="left:1128px;top:500px;width:80px"><b><i class="a">64</i></b></div>
<div class="c R" style="left:1209px;top:500px;width:80px"><b><i class="a">300</i></b></div>
<div class="c R" style="left:1290px;top:500px;width:80px"><b><i class="a">180</i></b></div>
<div class="c R" style="left:1371px;top:500px;width:80px"><b><i class="a">1701393</i></b></div>
<div class="c" style="left:14px;top:520px;width:190px"><b>奥司他韦颗粒</b></div>
<div class="c" style="left:205px;top:520px;width:102px"><b><i class="a">15mg*10</i>袋</b></div>
<div class="c" style="left:308px;top:520px;width:28px"><b>盒</b></div>
<div class="c R" style="left:337px;top:520px;width:80px"><b><i class="a">400</i></b></div>
<div class="c R" style="left:418px;top:520px;width:78px"><b><i class="a">45.6800</i></b></div>
<div class="c R" style="left:497px;top:520px;width:80px"><b><i class="a">18272.00</i></b></div>
<div class="c R" style="left:578px;top:520px;width:68px"><b><i class="a">45.6800</i></b></div>
<div class="c R" style="left:647px;top:520px;width:76px"><b><i class="a">18272.00</i></b></div>
<div class="c" style="left:724px;top:520px;width:150px"><b>国药控股龙岩有限公司</b></div>
<div class="c R" style="left:875px;top:520px;width:101px"><b><i class="a">0.00</i></b></div>
<div class="c R" style="left:1128px;top:520px;width:80px"><b><i class="a">344.9</i></b></div>
<div class="c R" style="left:1209px;top:520px;width:80px"><b><i class="a">400</i></b></div>
<div class="c R" style="left:1290px;top:520px;width:80px"><b><i class="a">280</i></b></div>
<div class="c R" style="left:1371px;top:520px;width:80px"><b><i class="a">5001083</i></b></div>
<div class="c" style="left:14px;top:540px;width:190px"><b>灭菌注射用水</b></div>
<div class="c" style="left:205px;top:540px;width:102px"><b><i class="a">5ml*50</i>支</b></div>
<div class="c" style="left:308px;top:540px;width:28px"><b>盒</b></div>
<div class="c R" style="left:337px;top:540px;width:80px"><b><i class="a">2</i></b></div>
<div class="c R" style="left:418px;top:540px;width:78px"><b><i class="a">7.0000</i></b></div>
<div class="c R" style="left:497px;top:540px;width:80px"><b><i class="a">14.00</i></b></div>
<div class="c R" style="left:578px;top:540px;width:68px"><b><i class="a">7.0000</i></b></div>
<div class="c R" style="left:647px;top:540px;width:76px"><b><i class="a">14.00</i></b></div>
<div class="c" style="left:724px;top:540px;width:150px"><b>国药控股龙岩有限公司</b></div>
<div class="c R" style="left:875px;top:540px;width:101px"><b><i class="a">0.00</i></b></div>
<div class="c R" style="left:1128px;top:540px;width:80px"><b><i class="a">2.24</i></b></div>
<div class="c R" style="left:1209px;top:540px;width:80px"><b><i class="a">2</i></b></div>
<div class="c R" style="left:1290px;top:540px;width:80px"><b><i class="a">1</i></b></div>
<div class="c R" style="left:1371px;top:540px;width:80px"><b><i class="a">5100824</i></b></div>
<div class="c" style="left:14px;top:560px;width:190px"><b><i class="a">+</i>戈舍瑞林缓释植入剂<i class="a">(T)</i></b></div>
<div class="c" style="left:205px;top:560px;width:102px"><b><i class="a">3.6mg</i></b></div>
<div class="c" style="left:308px;top:560px;width:28px"><b>支</b></div>
<div class="c R" style="left:337px;top:560px;width:80px"><b><i class="a">1000000</i></b></div>
<div class="c R" style="left:418px;top:560px;width:78px"><b><i class="a">1179.9500</i></b></div>
<div class="c R" style="left:497px;top:560px;width:80px"><b><i class="a">1179950000.00</i></b></div>
<div class="c R" style="left:578px;top:560px;width:68px"><b><i class="a">1179.9500</i></b></div>
<div class="c R" style="left:647px;top:560px;width:76px"><b><i class="a">1179950000.00</i></b></div>
<div class="c" style="left:724px;top:560px;width:150px"><b>国药控股龙岩有限公司</b></div>
<div class="c R" style="left:875px;top:560px;width:101px"><b><i class="a">0.00</i></b></div>
<div class="c R" style="left:1128px;top:560px;width:80px"><b><i class="a">0</i></b></div>
<div class="c R" style="left:1209px;top:560px;width:80px"><b><i class="a">1000000</i></b></div>
<div class="c R" style="left:1290px;top:560px;width:80px"><b><i class="a">0</i></b></div>
<div class="c R" style="left:1371px;top:560px;width:80px"><b><i class="a">5101621</i></b></div>
<div class="c" style="left:14px;top:580px;width:190px"><b><i class="tri"></i>复方甘草片</b></div>
<div class="c" style="left:205px;top:580px;width:102px"><b><i class="a">100#</i></b></div>
<div class="c" style="left:308px;top:580px;width:28px"><b>瓶</b></div>
<div class="c R" style="left:337px;top:580px;width:80px"><b><i class="a">20</i></b></div>
<div class="c R" style="left:418px;top:580px;width:78px"><b><i class="a">7.5100</i></b></div>
<div class="c R" style="left:497px;top:580px;width:80px"><b><i class="a">150.20</i></b></div>
<div class="c R" style="left:578px;top:580px;width:68px"><b><i class="a">6.4800</i></b></div>
<div class="c R" style="left:647px;top:580px;width:76px"><b><i class="a">129.60</i></b></div>
<div class="c" style="left:724px;top:580px;width:150px"><b>国药控股龙岩有限公司</b></div>
<div class="c R" style="left:875px;top:580px;width:101px"><b><i class="a">20.60</i></b></div>
<div class="c R" style="left:1128px;top:580px;width:80px"><b><i class="a">33.54</i></b></div>
<div class="c R" style="left:1209px;top:580px;width:80px"><b><i class="a">20</i></b></div>
<div class="c R" style="left:1290px;top:580px;width:80px"><b><i class="a">20</i></b></div>
<div class="c R" style="left:1371px;top:580px;width:80px"><b><i class="a">5100358</i></b></div>
<div class="c" style="left:14px;top:600px;width:190px"><b><i class="tri"></i>黄体酮注射液</b></div>
<div class="c" style="left:205px;top:600px;width:102px"><b><i class="a">1ml:20mg*10</i>支</b></div>
<div class="c" style="left:308px;top:600px;width:28px"><b>盒</b></div>
<div class="c R" style="left:337px;top:600px;width:80px"><b><i class="a">50</i></b></div>
<div class="c R" style="left:418px;top:600px;width:78px"><b><i class="a">29.4100</i></b></div>
<div class="c R" style="left:497px;top:600px;width:80px"><b><i class="a">1470.50</i></b></div>
<div class="c R" style="left:578px;top:600px;width:68px"><b><i class="a">25.9900</i></b></div>
<div class="c R" style="left:647px;top:600px;width:76px"><b><i class="a">1299.50</i></b></div>
<div class="c" style="left:724px;top:600px;width:150px"><b>龙岩新鹭燕医药有限公</b></div>
<div class="c R" style="left:875px;top:600px;width:101px"><b><i class="a">171.00</i></b></div>
<div class="c R" style="left:1128px;top:600px;width:80px"><b><i class="a">109.6</i></b></div>
<div class="c R" style="left:1209px;top:600px;width:80px"><b><i class="a">50</i></b></div>
<div class="c R" style="left:1290px;top:600px;width:80px"><b><i class="a">20</i></b></div>
<div class="c R" style="left:1371px;top:600px;width:80px"><b><i class="a">5109009</i></b></div>
<div class="c" style="left:14px;top:620px;width:190px"><b><i class="tri"></i>氯硝西泮片<i class="a">~!</i></b></div>
<div class="c" style="left:205px;top:620px;width:102px"><b><i class="a">2mg*20#</i></b></div>
<div class="c" style="left:308px;top:620px;width:28px"><b>盒</b></div>
<div class="c R" style="left:337px;top:620px;width:80px"><b><i class="a">30</i></b></div>
<div class="c R" style="left:418px;top:620px;width:78px"><b><i class="a">10.6000</i></b></div>
<div class="c R" style="left:497px;top:620px;width:80px"><b><i class="a">318.00</i></b></div>
<div class="c R" style="left:578px;top:620px;width:68px"><b><i class="a">10.6000</i></b></div>
<div class="c R" style="left:647px;top:620px;width:76px"><b><i class="a">318.00</i></b></div>
<div class="c" style="left:724px;top:620px;width:150px"><b>国药控股龙岩有限公司</b></div>
<div class="c R" style="left:875px;top:620px;width:101px"><b><i class="a">0.00</i></b></div>
<div class="c R" style="left:1128px;top:620px;width:80px"><b><i class="a">13.9</i></b></div>
<div class="c R" style="left:1209px;top:620px;width:80px"><b><i class="a">30</i></b></div>
<div class="c R" style="left:1290px;top:620px;width:80px"><b><i class="a">10</i></b></div>
<div class="c R" style="left:1371px;top:620px;width:80px"><b><i class="a">1701852</i></b></div>
<div class="c" style="left:14px;top:640px;width:190px"><b><i class="dot"></i><i class="tri"></i>乙胺丁醇片<i class="a">G3</i></b></div>
<div class="c" style="left:205px;top:640px;width:102px"><b><i class="a">0.25g*100#</i></b></div>
<div class="c" style="left:308px;top:640px;width:28px"><b>瓶</b></div>
<div class="c R" style="left:337px;top:640px;width:80px"><b><i class="a">50</i></b></div>
<div class="c R" style="left:418px;top:640px;width:78px"><b><i class="a">14.1800</i></b></div>
<div class="c R" style="left:497px;top:640px;width:80px"><b><i class="a">709.00</i></b></div>
<div class="c R" style="left:578px;top:640px;width:68px"><b><i class="a">14.1800</i></b></div>
<div class="c R" style="left:647px;top:640px;width:76px"><b><i class="a">709.00</i></b></div>
<div class="c" style="left:724px;top:640px;width:150px"><b>龙岩片仔癀宏仁医药有</b></div>
<div class="c R" style="left:875px;top:640px;width:101px"><b><i class="a">0.00</i></b></div>
<div class="c R" style="left:1128px;top:640px;width:80px"><b><i class="a">58.94</i></b></div>
<div class="c R" style="left:1209px;top:640px;width:80px"><b><i class="a">50</i></b></div>
<div class="c R" style="left:1290px;top:640px;width:80px"><b><i class="a">30</i></b></div>
<div class="c R" style="left:1371px;top:640px;width:80px"><b><i class="a">5100981</i></b></div>
<div class="c" style="left:14px;top:660px;width:190px"><b><i class="a">+</i>门冬胰岛素<i class="a">30</i>注射液（特充）</b></div>
<div class="c" style="left:205px;top:660px;width:102px"><b><i class="a">3ml:300IU</i></b></div>
<div class="c" style="left:308px;top:660px;width:28px"><b>支</b></div>
<div class="c R" style="left:337px;top:660px;width:80px"><b><i class="a">800</i></b></div>
<div class="c R" style="left:418px;top:660px;width:78px"><b><i class="a">77.1200</i></b></div>
<div class="c R" style="left:497px;top:660px;width:80px"><b><i class="a">61696.00</i></b></div>
<div class="c R" style="left:578px;top:660px;width:68px"><b><i class="a">77.1100</i></b></div>
<div class="c R" style="left:647px;top:660px;width:76px"><b><i class="a">61688.00</i></b></div>
<div class="c" style="left:724px;top:660px;width:150px"><b>华润（龙岩）医药有限公司</b></div>
<div class="c R" style="left:875px;top:660px;width:101px"><b><i class="a">8.00</i></b></div>
<div class="c R" style="left:1128px;top:660px;width:80px"><b><i class="a">148</i></b></div>
<div class="c R" style="left:1209px;top:660px;width:80px"><b><i class="a">800</i></b></div>
<div class="c R" style="left:1290px;top:660px;width:80px"><b><i class="a">600</i></b></div>
<div class="c R" style="left:1371px;top:660px;width:80px"><b><i class="a">5100023</i></b></div>
<div class="c" style="left:14px;top:680px;width:190px"><b><i class="a">+</i>门冬胰岛素<i class="a">50</i>注射液（特充）</b></div>
<div class="c" style="left:205px;top:680px;width:102px"><b><i class="a">3ml:300IU</i></b></div>
<div class="c" style="left:308px;top:680px;width:28px"><b>支</b></div>
<div class="c R" style="left:337px;top:680px;width:80px"><b><i class="a">100</i></b></div>
<div class="c R" style="left:418px;top:680px;width:78px"><b><i class="a">86.5300</i></b></div>
<div class="c R" style="left:497px;top:680px;width:80px"><b><i class="a">8653.00</i></b></div>
<div class="c R" style="left:578px;top:680px;width:68px"><b><i class="a">86.5200</i></b></div>
<div class="c R" style="left:647px;top:680px;width:76px"><b><i class="a">8652.00</i></b></div>
<div class="c" style="left:724px;top:680px;width:150px"><b>华润（龙岩）医药有限公司</b></div>
<div class="c R" style="left:875px;top:680px;width:101px"><b><i class="a">1.00</i></b></div>
<div class="c R" style="left:1128px;top:680px;width:80px"><b><i class="a">53</i></b></div>
<div class="c R" style="left:1209px;top:680px;width:80px"><b><i class="a">100</i></b></div>
<div class="c R" style="left:1290px;top:680px;width:80px"><b><i class="a">60</i></b></div>
<div class="c R" style="left:1371px;top:680px;width:80px"><b><i class="a">5100024</i></b></div>
<div class="c" style="left:14px;top:700px;width:190px"><b>复方铝酸铋颗粒</b></div>
<div class="c" style="left:205px;top:700px;width:102px"><b><i class="a">1.3g*24</i>袋</b></div>
<div class="c" style="left:308px;top:700px;width:28px"><b>盒</b></div>
<div class="c R" style="left:337px;top:700px;width:80px"><b><i class="a">120</i></b></div>
<div class="c R" style="left:418px;top:700px;width:78px"><b><i class="a">18.5400</i></b></div>
<div class="c R" style="left:497px;top:700px;width:80px"><b><i class="a">2224.80</i></b></div>
<div class="c R" style="left:578px;top:700px;width:68px"><b><i class="a">18.5400</i></b></div>
<div class="c R" style="left:647px;top:700px;width:76px"><b><i class="a">2224.80</i></b></div>
<div class="c" style="left:724px;top:700px;width:150px"><b>国药控股龙岩有限公司</b></div>
<div class="c R" style="left:875px;top:700px;width:101px"><b><i class="a">0.00</i></b></div>
<div class="c R" style="left:1128px;top:700px;width:80px"><b><i class="a">95.75</i></b></div>
<div class="c R" style="left:1209px;top:700px;width:80px"><b><i class="a">120</i></b></div>
<div class="c R" style="left:1290px;top:700px;width:80px"><b><i class="a">60</i></b></div>
<div class="c R" style="left:1371px;top:700px;width:80px"><b><i class="a">5100364</i></b></div>
<div class="c" style="left:14px;top:720px;width:190px"><b><i class="tri"></i>复方氯化钠注射液</b></div>
<div class="c" style="left:205px;top:720px;width:102px"><b><i class="a">500ml</i></b></div>
<div class="c" style="left:308px;top:720px;width:28px"><b>瓶</b></div>
<div class="c R" style="left:337px;top:720px;width:80px"><b><i class="a">20</i></b></div>
<div class="c R" style="left:418px;top:720px;width:78px"><b><i class="a">1.9800</i></b></div>
<div class="c R" style="left:497px;top:720px;width:80px"><b><i class="a">39.60</i></b></div>
<div class="c R" style="left:578px;top:720px;width:68px"><b><i class="a">1.3500</i></b></div>
<div class="c R" style="left:647px;top:720px;width:76px"><b><i class="a">27.00</i></b></div>
<div class="c" style="left:724px;top:720px;width:150px"><b>国药控股龙岩有限公司</b></div>
<div class="c R" style="left:875px;top:720px;width:101px"><b><i class="a">12.60</i></b></div>
<div class="c R" style="left:1128px;top:720px;width:80px"><b><i class="a">14</i></b></div>
<div class="c R" style="left:1209px;top:720px;width:80px"><b><i class="a">20</i></b></div>
<div class="c R" style="left:1290px;top:720px;width:80px"><b><i class="a">10</i></b></div>
<div class="c R" style="left:1371px;top:720px;width:80px"><b><i class="a">5100365</i></b></div>
<div class="c" style="left:14px;top:740px;width:190px"><b><i class="a">+</i>门冬胰岛素注射液（特充）</b></div>
<div class="c" style="left:205px;top:740px;width:102px"><b><i class="a">3ml:300IU</i></b></div>
<div class="c" style="left:308px;top:740px;width:28px"><b>支</b></div>
<div class="c R" style="left:337px;top:740px;width:80px"><b><i class="a">150</i></b></div>
<div class="c R" style="left:418px;top:740px;width:78px"><b><i class="a">77.1200</i></b></div>
<div class="c R" style="left:497px;top:740px;width:80px"><b><i class="a">11568.00</i></b></div>
<div class="c R" style="left:578px;top:740px;width:68px"><b><i class="a">77.1100</i></b></div>
<div class="c R" style="left:647px;top:740px;width:76px"><b><i class="a">11566.50</i></b></div>
<div class="c" style="left:724px;top:740px;width:150px"><b>华润（龙岩）医药有限公司</b></div>
<div class="c R" style="left:875px;top:740px;width:101px"><b><i class="a">1.50</i></b></div>
<div class="c R" style="left:1128px;top:740px;width:80px"><b><i class="a">54</i></b></div>
<div class="c R" style="left:1209px;top:740px;width:80px"><b><i class="a">150</i></b></div>
<div class="c R" style="left:1290px;top:740px;width:80px"><b><i class="a">100</i></b></div>
<div class="c R" style="left:1371px;top:740px;width:80px"><b><i class="a">5100025</i></b></div>
<div class="c" style="left:14px;top:760px;width:190px"><b><i class="a">+</i>格列齐特缓释片</b></div>
<div class="c" style="left:205px;top:760px;width:102px"><b><i class="a">60mg*15#</i></b></div>
<div class="c" style="left:308px;top:760px;width:28px"><b>盒</b></div>
<div class="c R" style="left:337px;top:760px;width:80px"><b><i class="a">480</i></b></div>
<div class="c R" style="left:418px;top:760px;width:78px"><b><i class="a">37.6600</i></b></div>
<div class="c R" style="left:497px;top:760px;width:80px"><b><i class="a">18076.80</i></b></div>
<div class="c R" style="left:578px;top:760px;width:68px"><b><i class="a">37.6600</i></b></div>
<div class="c R" style="left:647px;top:760px;width:76px"><b><i class="a">18076.80</i></b></div>
<div class="c" style="left:724px;top:760px;width:150px"><b>国药控股龙岩有限公司</b></div>
<div class="c R" style="left:875px;top:760px;width:101px"><b><i class="a">0.00</i></b></div>
<div class="c R" style="left:1128px;top:760px;width:80px"><b><i class="a">498</i></b></div>
<div class="c R" style="left:1209px;top:760px;width:80px"><b><i class="a">480</i></b></div>
<div class="c R" style="left:1290px;top:760px;width:80px"><b><i class="a">480</i></b></div>
<div class="c R" style="left:1371px;top:760px;width:80px"><b><i class="a">5100377</i></b></div>
<div class="c" style="left:14px;top:780px;width:190px"><b>双环醇片</b></div>
<div class="c" style="left:205px;top:780px;width:102px"><b><i class="a">25mg*18#</i></b></div>
<div class="c" style="left:308px;top:780px;width:28px"><b>盒</b></div>
<div class="c R" style="left:337px;top:780px;width:80px"><b><i class="a">600</i></b></div>
<div class="c R" style="left:418px;top:780px;width:78px"><b><i class="a">64.0800</i></b></div>
<div class="c R" style="left:497px;top:780px;width:80px"><b><i class="a">38448.00</i></b></div>
<div class="c R" style="left:578px;top:780px;width:68px"><b><i class="a">64.0800</i></b></div>
<div class="c R" style="left:647px;top:780px;width:76px"><b><i class="a">38448.00</i></b></div>
<div class="c" style="left:724px;top:780px;width:150px"><b>福建龙岩同春医药有限</b></div>
<div class="c R" style="left:875px;top:780px;width:101px"><b><i class="a">0.00</i></b></div>
<div class="c R" style="left:1128px;top:780px;width:80px"><b><i class="a">565</i></b></div>
<div class="c R" style="left:1209px;top:780px;width:80px"><b><i class="a">600</i></b></div>
<div class="c R" style="left:1290px;top:780px;width:80px"><b><i class="a">450</i></b></div>
<div class="c R" style="left:1371px;top:780px;width:80px"><b><i class="a">5100027</i></b></div>
<div class="c" style="left:14px;top:800px;width:190px"><b>更昔洛韦滴眼液</b></div>
<div class="c" style="left:205px;top:800px;width:102px"><b><i class="a">8ml:8mg</i></b></div>
<div class="c" style="left:308px;top:800px;width:28px"><b>支</b></div>
<div class="c R" style="left:337px;top:800px;width:80px"><b><i class="a">400</i></b></div>
<div class="c R" style="left:418px;top:800px;width:78px"><b><i class="a">17.1700</i></b></div>
<div class="c R" style="left:497px;top:800px;width:80px"><b><i class="a">6868.00</i></b></div>
<div class="c R" style="left:578px;top:800px;width:68px"><b><i class="a">17.1700</i></b></div>
<div class="c R" style="left:647px;top:800px;width:76px"><b><i class="a">6868.00</i></b></div>
<div class="c" style="left:724px;top:800px;width:150px"><b>国药控股龙岩有限公司</b></div>
<div class="c R" style="left:875px;top:800px;width:101px"><b><i class="a">0.00</i></b></div>
<div class="c R" style="left:1128px;top:800px;width:80px"><b><i class="a">119</i></b></div>
<div class="c R" style="left:1209px;top:800px;width:80px"><b><i class="a">400</i></b></div>
<div class="c R" style="left:1290px;top:800px;width:80px"><b><i class="a">70</i></b></div>
<div class="c R" style="left:1371px;top:800px;width:80px"><b><i class="a">5100378</i></b></div>
<div class="c" style="left:14px;top:820px;width:190px"><b><i class="a">+</i>拉莫三嗪片</b></div>
<div class="c" style="left:205px;top:820px;width:102px"><b><i class="a">50mg*30#</i></b></div>
<div class="c" style="left:308px;top:820px;width:28px"><b>盒</b></div>
<div class="c R" style="left:337px;top:820px;width:80px"><b><i class="a">10</i></b></div>
<div class="c R" style="left:418px;top:820px;width:78px"><b><i class="a">85.9000</i></b></div>
<div class="c R" style="left:497px;top:820px;width:80px"><b><i class="a">859.00</i></b></div>
<div class="c R" style="left:578px;top:820px;width:68px"><b><i class="a">85.9000</i></b></div>
<div class="c R" style="left:647px;top:820px;width:76px"><b><i class="a">859.00</i></b></div>
<div class="c" style="left:724px;top:820px;width:150px"><b>国药控股福建有限公司</b></div>
<div class="c R" style="left:875px;top:820px;width:101px"><b><i class="a">0.00</i></b></div>
<div class="c R" style="left:1128px;top:820px;width:80px"><b><i class="a">24</i></b></div>
<div class="c R" style="left:1209px;top:820px;width:80px"><b><i class="a">10</i></b></div>
<div class="c R" style="left:1290px;top:820px;width:80px"><b><i class="a">5</i></b></div>
<div class="c R" style="left:1371px;top:820px;width:80px"><b><i class="a">5109170</i></b></div>
<div class="c" style="left:14px;top:840px;width:190px"><b><i class="a">+</i>托吡酯片</b></div>
<div class="c" style="left:205px;top:840px;width:102px"><b><i class="a">25mg*60#</i></b></div>
<div class="c" style="left:308px;top:840px;width:28px"><b>盒</b></div>
<div class="c R" style="left:337px;top:840px;width:80px"><b><i class="a">3</i></b></div>
<div class="c R" style="left:418px;top:840px;width:78px"><b><i class="a">76.5700</i></b></div>
<div class="c R" style="left:497px;top:840px;width:80px"><b><i class="a">229.71</i></b></div>
<div class="c R" style="left:578px;top:840px;width:68px"><b><i class="a">76.5700</i></b></div>
<div class="c R" style="left:647px;top:840px;width:76px"><b><i class="a">229.71</i></b></div>
<div class="c" style="left:724px;top:840px;width:150px"><b>国药控股福建有限公司</b></div>
<div class="c R" style="left:875px;top:840px;width:101px"><b><i class="a">0.00</i></b></div>
<div class="c R" style="left:1128px;top:840px;width:80px"><b><i class="a">2.717</i></b></div>
<div class="c R" style="left:1209px;top:840px;width:80px"><b><i class="a">3</i></b></div>
<div class="c R" style="left:1290px;top:840px;width:80px"><b><i class="a">1</i></b></div>
<div class="c R" style="left:1371px;top:840px;width:80px"><b><i class="a">5109171</i></b></div>
<div class="c" style="left:14px;top:860px;width:190px"><b><i class="a">+</i>罗红霉素片<i class="a">$</i></b></div>
<div class="c" style="left:205px;top:860px;width:102px"><b><i class="a">0.15g*6#</i></b></div>
<div class="c" style="left:308px;top:860px;width:28px"><b>盒</b></div>
<div class="c R" style="left:337px;top:860px;width:80px"><b><i class="a">480</i></b></div>
<div class="c R" style="left:418px;top:860px;width:78px"><b><i class="a">23.6200</i></b></div>
<div class="c R" style="left:497px;top:860px;width:80px"><b><i class="a">11337.60</i></b></div>
<div class="c R" style="left:578px;top:860px;width:68px"><b><i class="a">23.6100</i></b></div>
<div class="c R" style="left:647px;top:860px;width:76px"><b><i class="a">11332.80</i></b></div>
<div class="c" style="left:724px;top:860px;width:150px"><b>国药控股龙岩有限公司</b></div>
<div class="c R" style="left:875px;top:860px;width:101px"><b><i class="a">4.80</i></b></div>
<div class="c R" style="left:1128px;top:860px;width:80px"><b><i class="a">516.5</i></b></div>
<div class="c R" style="left:1209px;top:860px;width:80px"><b><i class="a">480</i></b></div>
<div class="c R" style="left:1290px;top:860px;width:80px"><b><i class="a">300</i></b></div>
<div class="c R" style="left:1371px;top:860px;width:80px"><b><i class="a">5100185</i></b></div>
<div class="c" style="left:14px;top:880px;width:190px"><b><i class="a">+</i><i class="dot"></i><i class="tri"></i>莫西沙星片<i class="a">$G</i></b></div>
<div class="c" style="left:205px;top:880px;width:102px"><b><i class="a">0.4g*3#</i></b></div>
<div class="c" style="left:308px;top:880px;width:28px"><b>盒</b></div>
<div class="c R" style="left:337px;top:880px;width:80px"><b><i class="a">270</i></b></div>
<div class="c R" style="left:418px;top:880px;width:78px"><b><i class="a">11.8200</i></b></div>
<div class="c R" style="left:497px;top:880px;width:80px"><b><i class="a">3191.40</i></b></div>
<div class="c R" style="left:578px;top:880px;width:68px"><b><i class="a">11.8200</i></b></div>
<div class="c R" style="left:647px;top:880px;width:76px"><b><i class="a">3191.40</i></b></div>
<div class="c" style="left:724px;top:880px;width:150px"><b>国药控股龙岩有限公司</b></div>
<div class="c R" style="left:875px;top:880px;width:101px"><b><i class="a">0.00</i></b></div>
<div class="c R" style="left:1128px;top:880px;width:80px"><b><i class="a">192</i></b></div>
<div class="c R" style="left:1209px;top:880px;width:80px"><b><i class="a">270</i></b></div>
<div class="c R" style="left:1290px;top:880px;width:80px"><b><i class="a">250</i></b></div>
<div class="c R" style="left:1371px;top:880px;width:80px"><b><i class="a">5100186</i></b></div>
<div class="c" style="left:14px;top:900px;width:190px"><b><i class="a">+</i>骨化三醇胶丸</b></div>
<div class="c" style="left:205px;top:900px;width:102px"><b><i class="a">0.25ug*10</i>粒</b></div>
<div class="c" style="left:308px;top:900px;width:28px"><b>盒</b></div>
<div class="c R" style="left:337px;top:900px;width:80px"><b><i class="a">200</i></b></div>
<div class="c R" style="left:418px;top:900px;width:78px"><b><i class="a">49.0000</i></b></div>
<div class="c R" style="left:497px;top:900px;width:80px"><b><i class="a">9800.00</i></b></div>
<div class="c R" style="left:578px;top:900px;width:68px"><b><i class="a">49.0000</i></b></div>
<div class="c R" style="left:647px;top:900px;width:76px"><b><i class="a">9800.00</i></b></div>
<div class="c" style="left:724px;top:900px;width:150px"><b>国药控股龙岩有限公司</b></div>
<div class="c R" style="left:875px;top:900px;width:101px"><b><i class="a">0.00</i></b></div>
<div class="c R" style="left:1128px;top:900px;width:80px"><b><i class="a">236</i></b></div>
<div class="c R" style="left:1209px;top:900px;width:80px"><b><i class="a">200</i></b></div>
<div class="c R" style="left:1290px;top:900px;width:80px"><b><i class="a">80</i></b></div>
<div class="c R" style="left:1371px;top:900px;width:80px"><b><i class="a">5100382</i></b></div>
<div class="c" style="left:14px;top:920px;width:190px"><b><i class="tri"></i>华法林钠片</b></div>
<div class="c" style="left:205px;top:920px;width:102px"><b><i class="a">2.5mg*80#</i></b></div>
<div class="c" style="left:308px;top:920px;width:28px"><b>盒</b></div>
<div class="c R" style="left:337px;top:920px;width:80px"><b><i class="a">50</i></b></div>
<div class="c R" style="left:418px;top:920px;width:78px"><b><i class="a">36.0800</i></b></div>
<div class="c R" style="left:497px;top:920px;width:80px"><b><i class="a">1804.00</i></b></div>
<div class="c R" style="left:578px;top:920px;width:68px"><b><i class="a">28.5600</i></b></div>
<div class="c R" style="left:647px;top:920px;width:76px"><b><i class="a">1428.00</i></b></div>
<div class="c" style="left:724px;top:920px;width:150px"><b>国药控股龙岩有限公司</b></div>
<div class="c R" style="left:875px;top:920px;width:101px"><b><i class="a">376.00</i></b></div>
<div class="c R" style="left:1128px;top:920px;width:80px"><b><i class="a">29.163</i></b></div>
<div class="c R" style="left:1209px;top:920px;width:80px"><b><i class="a">50</i></b></div>
<div class="c R" style="left:1290px;top:920px;width:80px"><b><i class="a">30</i></b></div>
<div class="c R" style="left:1371px;top:920px;width:80px"><b><i class="a">5100386</i></b></div>
<div class="c" style="left:14px;top:940px;width:190px"><b><i class="tri"></i>维生素<i class="a">B2</i>片</b></div>
<div class="c" style="left:205px;top:940px;width:102px"><b><i class="a">5mg*100#</i></b></div>
<div class="c" style="left:308px;top:940px;width:28px"><b>瓶</b></div>
<div class="c R" style="left:337px;top:940px;width:80px"><b><i class="a">100</i></b></div>
<div class="c R" style="left:418px;top:940px;width:78px"><b><i class="a">5.1300</i></b></div>
<div class="c R" style="left:497px;top:940px;width:80px"><b><i class="a">513.00</i></b></div>
<div class="c R" style="left:578px;top:940px;width:68px"><b><i class="a">5.1300</i></b></div>
<div class="c R" style="left:647px;top:940px;width:76px"><b><i class="a">513.00</i></b></div>
<div class="c" style="left:724px;top:940px;width:150px"><b>国药控股龙岩有限公司</b></div>
<div class="c R" style="left:875px;top:940px;width:101px"><b><i class="a">0.00</i></b></div>
<div class="c R" style="left:1128px;top:940px;width:80px"><b><i class="a">51.05</i></b></div>
<div class="c R" style="left:1209px;top:940px;width:80px"><b><i class="a">100</i></b></div>
<div class="c R" style="left:1290px;top:940px;width:80px"><b><i class="a">60</i></b></div>
<div class="c R" style="left:1371px;top:940px;width:80px"><b><i class="a">5101786</i></b></div>
<div class="abs" style="left:2px;top:976px;width:1450px;height:1px;background:#000"></div>
<div class="ind" style="top:977px;height:20px"></div>
<div class="abs" style="left:14px;top:977px;width:191px;height:20px;background:#ffffe1;border-right:1px solid #c0c0c0;border-bottom:1px solid #c0c0c0"></div>
<div class="abs" style="left:205px;top:977px;width:103px;height:20px;background:#ffffe1;border-right:1px solid #c0c0c0;border-bottom:1px solid #c0c0c0"></div>
<div class="abs" style="left:308px;top:977px;width:29px;height:20px;background:#ffffe1;border-right:1px solid #c0c0c0;border-bottom:1px solid #c0c0c0"></div>
<div class="abs" style="left:337px;top:977px;width:81px;height:20px;background:#ffffe1;border-right:1px solid #c0c0c0;border-bottom:1px solid #c0c0c0"></div>
<div class="abs" style="left:418px;top:977px;width:79px;height:20px;background:#ffffe1;border-right:1px solid #c0c0c0;border-bottom:1px solid #c0c0c0"></div>
<div class="abs" style="left:497px;top:977px;width:81px;height:20px;background:#ffffe1;border-right:1px solid #c0c0c0;border-bottom:1px solid #c0c0c0"></div>
<div class="abs" style="left:578px;top:977px;width:69px;height:20px;background:#ffffe1;border-right:1px solid #c0c0c0;border-bottom:1px solid #c0c0c0"></div>
<div class="abs" style="left:647px;top:977px;width:77px;height:20px;background:#ffffe1;border-right:1px solid #c0c0c0;border-bottom:1px solid #c0c0c0"></div>
<div class="abs" style="left:724px;top:977px;width:151px;height:20px;background:transparent;border-right:1px solid #c0c0c0;border-bottom:1px solid #c0c0c0"></div>
<div class="abs" style="left:875px;top:977px;width:102px;height:20px;background:#ffffe1;border-right:1px solid #c0c0c0;border-bottom:1px solid #c0c0c0"></div>
<div class="abs" style="left:977px;top:977px;width:151px;height:20px;background:#ffffe1;border-right:1px solid #c0c0c0;border-bottom:1px solid #c0c0c0"></div>
<div class="abs" style="left:1128px;top:977px;width:81px;height:20px;background:transparent;border-right:1px solid #c0c0c0;border-bottom:1px solid #c0c0c0"></div>
<div class="abs" style="left:1209px;top:977px;width:81px;height:20px;background:transparent;border-right:1px solid #c0c0c0;border-bottom:1px solid #c0c0c0"></div>
<div class="abs" style="left:1290px;top:977px;width:81px;height:20px;background:transparent;border-right:1px solid #c0c0c0;border-bottom:1px solid #c0c0c0"></div>
<div class="abs" style="left:1371px;top:977px;width:81px;height:20px;background:transparent;border-right:1px solid #c0c0c0;border-bottom:1px solid #c0c0c0"></div>
<div class="c" style="left:14px;top:977px;width:190px;justify-content:center;padding:0;"><b>合　计</b></div>
<div class="c" style="left:205px;top:977px;width:102px;justify-content:center;padding:0;"><b><i class="a">655</i></b></div>
<div class="c R" style="left:497px;top:977px;width:80px;"><b><i class="a">41839901.75</i></b></div>
<div class="c R" style="left:647px;top:977px;width:76px;"><b><i class="a">2206689.73</i></b></div>
<div class="c R" style="left:875px;top:977px;width:101px;"><b><i class="a">772366787.98</i></b></div>
<svg class="abs" style="left:4px;top:444px" width="8" height="12"><path d="M1 0L7 6L1 12Z" fill="#000"/></svg>
</div>
<div class="hline" style="top:997px;background:#fff"></div>
<div class="hline" style="top:998px;background:#f8f8f8"></div>
<div class="hline" style="top:999px;background:#a0a0a0"></div>
<div class="hline" style="top:1000px;background:#fff"></div>
<div class="hline" style="top:1001px;background:#a0a0a0"></div>
</body></html>
